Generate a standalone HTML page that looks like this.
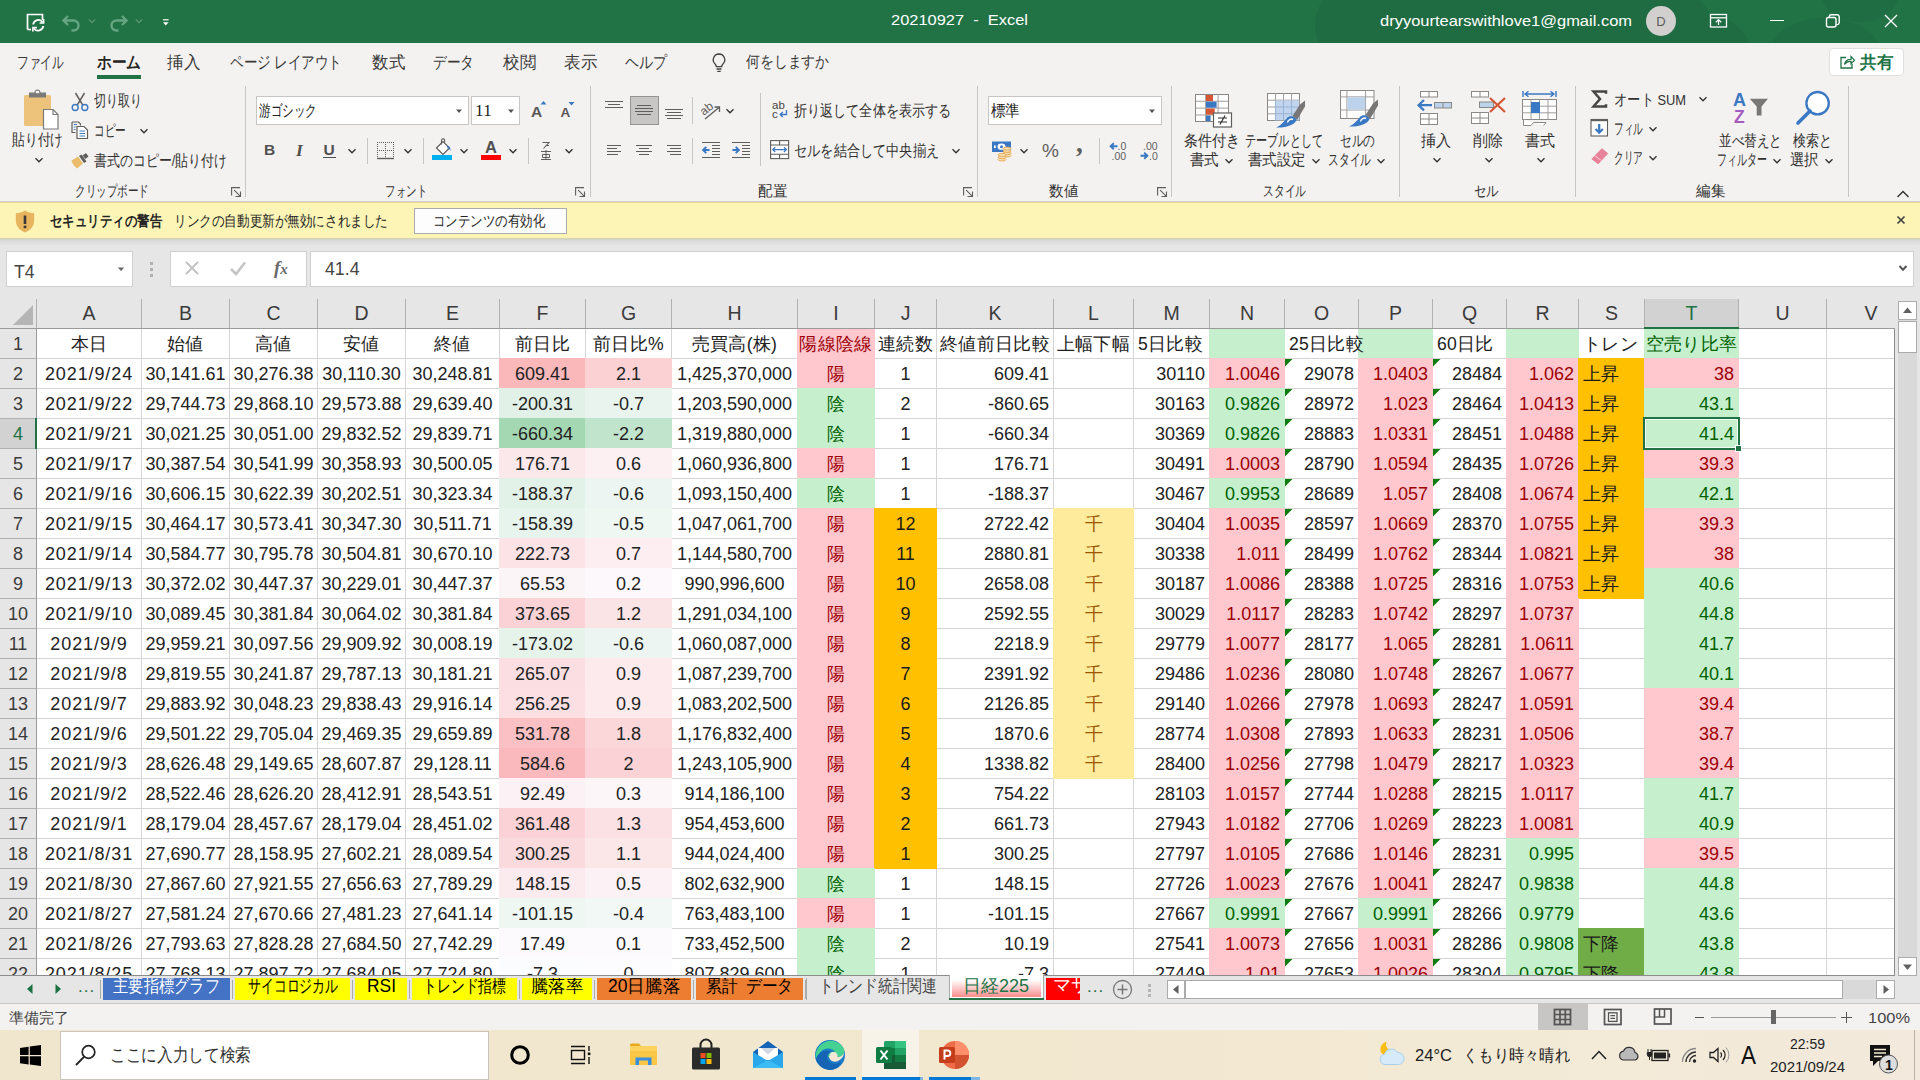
<!DOCTYPE html>
<html lang="ja"><head><meta charset="utf-8"><title>20210927 - Excel</title>
<style>
html,body{margin:0;padding:0;}
body{width:1920px;height:1080px;overflow:hidden;background:#e6e6e6;font-family:"Liberation Sans",sans-serif;}
#root{position:relative;width:1920px;height:1080px;overflow:hidden;}
#root div,#root svg{position:absolute;}
#root header,#root nav,#root section,#root main,#root footer{position:absolute;left:0;top:0;width:1920px;height:1080px;display:block;}
svg{overflow:visible;}
</style></head><body><div id="root">
<main id="sheet" aria-label="日経225">
<div id="grid" style="left:0;top:0;width:1920px;height:976px;overflow:hidden;clip-path:inset(299px 0 0 0);">
<div style="left:37px;top:329px;width:1857px;height:646px;background:#fff;"></div>
<div style="left:141px;top:329px;width:1px;height:646px;background:#d4d4d4;"></div>
<div style="left:229px;top:329px;width:1px;height:646px;background:#d4d4d4;"></div>
<div style="left:317px;top:329px;width:1px;height:646px;background:#d4d4d4;"></div>
<div style="left:405px;top:329px;width:1px;height:646px;background:#d4d4d4;"></div>
<div style="left:499px;top:329px;width:1px;height:646px;background:#d4d4d4;"></div>
<div style="left:585px;top:329px;width:1px;height:646px;background:#d4d4d4;"></div>
<div style="left:671px;top:329px;width:1px;height:646px;background:#d4d4d4;"></div>
<div style="left:797px;top:329px;width:1px;height:646px;background:#d4d4d4;"></div>
<div style="left:874px;top:329px;width:1px;height:646px;background:#d4d4d4;"></div>
<div style="left:936px;top:329px;width:1px;height:646px;background:#d4d4d4;"></div>
<div style="left:1053px;top:329px;width:1px;height:646px;background:#d4d4d4;"></div>
<div style="left:1133px;top:329px;width:1px;height:646px;background:#d4d4d4;"></div>
<div style="left:1209px;top:329px;width:1px;height:646px;background:#d4d4d4;"></div>
<div style="left:1284px;top:329px;width:1px;height:646px;background:#d4d4d4;"></div>
<div style="left:1358px;top:329px;width:1px;height:646px;background:#d4d4d4;"></div>
<div style="left:1432px;top:329px;width:1px;height:646px;background:#d4d4d4;"></div>
<div style="left:1506px;top:329px;width:1px;height:646px;background:#d4d4d4;"></div>
<div style="left:1578px;top:329px;width:1px;height:646px;background:#d4d4d4;"></div>
<div style="left:1644px;top:329px;width:1px;height:646px;background:#d4d4d4;"></div>
<div style="left:1738px;top:329px;width:1px;height:646px;background:#d4d4d4;"></div>
<div style="left:1826px;top:329px;width:1px;height:646px;background:#d4d4d4;"></div>
<div style="left:37px;top:358px;width:1857px;height:1px;background:#d4d4d4;"></div>
<div style="left:37px;top:388px;width:1857px;height:1px;background:#d4d4d4;"></div>
<div style="left:37px;top:418px;width:1857px;height:1px;background:#d4d4d4;"></div>
<div style="left:37px;top:448px;width:1857px;height:1px;background:#d4d4d4;"></div>
<div style="left:37px;top:478px;width:1857px;height:1px;background:#d4d4d4;"></div>
<div style="left:37px;top:508px;width:1857px;height:1px;background:#d4d4d4;"></div>
<div style="left:37px;top:538px;width:1857px;height:1px;background:#d4d4d4;"></div>
<div style="left:37px;top:568px;width:1857px;height:1px;background:#d4d4d4;"></div>
<div style="left:37px;top:598px;width:1857px;height:1px;background:#d4d4d4;"></div>
<div style="left:37px;top:628px;width:1857px;height:1px;background:#d4d4d4;"></div>
<div style="left:37px;top:658px;width:1857px;height:1px;background:#d4d4d4;"></div>
<div style="left:37px;top:688px;width:1857px;height:1px;background:#d4d4d4;"></div>
<div style="left:37px;top:718px;width:1857px;height:1px;background:#d4d4d4;"></div>
<div style="left:37px;top:748px;width:1857px;height:1px;background:#d4d4d4;"></div>
<div style="left:37px;top:778px;width:1857px;height:1px;background:#d4d4d4;"></div>
<div style="left:37px;top:808px;width:1857px;height:1px;background:#d4d4d4;"></div>
<div style="left:37px;top:838px;width:1857px;height:1px;background:#d4d4d4;"></div>
<div style="left:37px;top:868px;width:1857px;height:1px;background:#d4d4d4;"></div>
<div style="left:37px;top:898px;width:1857px;height:1px;background:#d4d4d4;"></div>
<div style="left:37px;top:928px;width:1857px;height:1px;background:#d4d4d4;"></div>
<div style="left:37px;top:958px;width:1857px;height:1px;background:#d4d4d4;"></div>
<div style="left:797px;top:328px;width:78px;height:31px;background:#ffc7ce;"></div>
<div style="left:1209px;top:328px;width:76px;height:31px;background:#c6efce;"></div>
<div style="left:1358px;top:328px;width:75px;height:31px;background:#c6efce;"></div>
<div style="left:1506px;top:328px;width:73px;height:31px;background:#c6efce;"></div>
<div style="left:1644px;top:328px;width:95px;height:31px;background:#c6efce;"></div>
<div style="left:499px;top:358px;width:87px;height:31px;background:#fab8ba;"></div>
<div style="left:585px;top:358px;width:87px;height:31px;background:#fbd1d4;"></div>
<div style="left:797px;top:358px;width:78px;height:31px;background:#ffc7ce;"></div>
<div style="left:1209px;top:358px;width:76px;height:31px;background:#ffc7ce;"></div>
<div style="left:1358px;top:358px;width:75px;height:31px;background:#ffc7ce;"></div>
<div style="left:1506px;top:358px;width:73px;height:31px;background:#ffc7ce;"></div>
<div style="left:1578px;top:358px;width:67px;height:31px;background:#ffc000;"></div>
<div style="left:1644px;top:358px;width:95px;height:31px;background:#ffc7ce;"></div>
<div style="left:499px;top:388px;width:87px;height:31px;background:#e1f1e8;"></div>
<div style="left:585px;top:388px;width:87px;height:31px;background:#e9f4ef;"></div>
<div style="left:797px;top:388px;width:78px;height:31px;background:#c6efce;"></div>
<div style="left:1209px;top:388px;width:76px;height:31px;background:#c6efce;"></div>
<div style="left:1358px;top:388px;width:75px;height:31px;background:#ffc7ce;"></div>
<div style="left:1506px;top:388px;width:73px;height:31px;background:#ffc7ce;"></div>
<div style="left:1578px;top:388px;width:67px;height:31px;background:#ffc000;"></div>
<div style="left:1644px;top:388px;width:95px;height:31px;background:#c6efce;"></div>
<div style="left:499px;top:418px;width:87px;height:31px;background:#a4d8b3;"></div>
<div style="left:585px;top:418px;width:87px;height:31px;background:#c1e4cc;"></div>
<div style="left:797px;top:418px;width:78px;height:31px;background:#c6efce;"></div>
<div style="left:1209px;top:418px;width:76px;height:31px;background:#c6efce;"></div>
<div style="left:1358px;top:418px;width:75px;height:31px;background:#ffc7ce;"></div>
<div style="left:1506px;top:418px;width:73px;height:31px;background:#ffc7ce;"></div>
<div style="left:1578px;top:418px;width:67px;height:31px;background:#ffc000;"></div>
<div style="left:1644px;top:418px;width:95px;height:31px;background:#c6efce;"></div>
<div style="left:499px;top:448px;width:87px;height:31px;background:#fbe8eb;"></div>
<div style="left:585px;top:448px;width:87px;height:31px;background:#fcf0f3;"></div>
<div style="left:797px;top:448px;width:78px;height:31px;background:#ffc7ce;"></div>
<div style="left:1209px;top:448px;width:76px;height:31px;background:#ffc7ce;"></div>
<div style="left:1358px;top:448px;width:75px;height:31px;background:#ffc7ce;"></div>
<div style="left:1506px;top:448px;width:73px;height:31px;background:#ffc7ce;"></div>
<div style="left:1578px;top:448px;width:67px;height:31px;background:#ffc000;"></div>
<div style="left:1644px;top:448px;width:95px;height:31px;background:#ffc7ce;"></div>
<div style="left:499px;top:478px;width:87px;height:31px;background:#e3f2e9;"></div>
<div style="left:585px;top:478px;width:87px;height:31px;background:#ecf5f1;"></div>
<div style="left:797px;top:478px;width:78px;height:31px;background:#c6efce;"></div>
<div style="left:1209px;top:478px;width:76px;height:31px;background:#c6efce;"></div>
<div style="left:1358px;top:478px;width:75px;height:31px;background:#ffc7ce;"></div>
<div style="left:1506px;top:478px;width:73px;height:31px;background:#ffc7ce;"></div>
<div style="left:1578px;top:478px;width:67px;height:31px;background:#ffc000;"></div>
<div style="left:1644px;top:478px;width:95px;height:31px;background:#c6efce;"></div>
<div style="left:499px;top:508px;width:87px;height:31px;background:#e7f3ed;"></div>
<div style="left:585px;top:508px;width:87px;height:31px;background:#eff7f3;"></div>
<div style="left:797px;top:508px;width:78px;height:31px;background:#ffc7ce;"></div>
<div style="left:874px;top:508px;width:63px;height:31px;background:#ffc000;"></div>
<div style="left:1053px;top:508px;width:81px;height:31px;background:#ffeb9c;"></div>
<div style="left:1209px;top:508px;width:76px;height:31px;background:#ffc7ce;"></div>
<div style="left:1358px;top:508px;width:75px;height:31px;background:#ffc7ce;"></div>
<div style="left:1506px;top:508px;width:73px;height:31px;background:#ffc7ce;"></div>
<div style="left:1578px;top:508px;width:67px;height:31px;background:#ffc000;"></div>
<div style="left:1644px;top:508px;width:95px;height:31px;background:#ffc7ce;"></div>
<div style="left:499px;top:538px;width:87px;height:31px;background:#fbe3e6;"></div>
<div style="left:585px;top:538px;width:87px;height:31px;background:#fceef1;"></div>
<div style="left:797px;top:538px;width:78px;height:31px;background:#ffc7ce;"></div>
<div style="left:874px;top:538px;width:63px;height:31px;background:#ffc000;"></div>
<div style="left:1053px;top:538px;width:81px;height:31px;background:#ffeb9c;"></div>
<div style="left:1209px;top:538px;width:76px;height:31px;background:#ffc7ce;"></div>
<div style="left:1358px;top:538px;width:75px;height:31px;background:#ffc7ce;"></div>
<div style="left:1506px;top:538px;width:73px;height:31px;background:#ffc7ce;"></div>
<div style="left:1578px;top:538px;width:67px;height:31px;background:#ffc000;"></div>
<div style="left:1644px;top:538px;width:95px;height:31px;background:#ffc7ce;"></div>
<div style="left:499px;top:568px;width:87px;height:31px;background:#fcf5f8;"></div>
<div style="left:585px;top:568px;width:87px;height:31px;background:#fcf8fb;"></div>
<div style="left:797px;top:568px;width:78px;height:31px;background:#ffc7ce;"></div>
<div style="left:874px;top:568px;width:63px;height:31px;background:#ffc000;"></div>
<div style="left:1053px;top:568px;width:81px;height:31px;background:#ffeb9c;"></div>
<div style="left:1209px;top:568px;width:76px;height:31px;background:#ffc7ce;"></div>
<div style="left:1358px;top:568px;width:75px;height:31px;background:#ffc7ce;"></div>
<div style="left:1506px;top:568px;width:73px;height:31px;background:#ffc7ce;"></div>
<div style="left:1578px;top:568px;width:67px;height:31px;background:#ffc000;"></div>
<div style="left:1644px;top:568px;width:95px;height:31px;background:#c6efce;"></div>
<div style="left:499px;top:598px;width:87px;height:31px;background:#fbd2d5;"></div>
<div style="left:585px;top:598px;width:87px;height:31px;background:#fbe4e6;"></div>
<div style="left:797px;top:598px;width:78px;height:31px;background:#ffc7ce;"></div>
<div style="left:874px;top:598px;width:63px;height:31px;background:#ffc000;"></div>
<div style="left:1053px;top:598px;width:81px;height:31px;background:#ffeb9c;"></div>
<div style="left:1209px;top:598px;width:76px;height:31px;background:#ffc7ce;"></div>
<div style="left:1358px;top:598px;width:75px;height:31px;background:#ffc7ce;"></div>
<div style="left:1506px;top:598px;width:73px;height:31px;background:#ffc7ce;"></div>
<div style="left:1644px;top:598px;width:95px;height:31px;background:#c6efce;"></div>
<div style="left:499px;top:628px;width:87px;height:31px;background:#e5f3eb;"></div>
<div style="left:585px;top:628px;width:87px;height:31px;background:#ecf5f1;"></div>
<div style="left:797px;top:628px;width:78px;height:31px;background:#ffc7ce;"></div>
<div style="left:874px;top:628px;width:63px;height:31px;background:#ffc000;"></div>
<div style="left:1053px;top:628px;width:81px;height:31px;background:#ffeb9c;"></div>
<div style="left:1209px;top:628px;width:76px;height:31px;background:#ffc7ce;"></div>
<div style="left:1358px;top:628px;width:75px;height:31px;background:#ffc7ce;"></div>
<div style="left:1506px;top:628px;width:73px;height:31px;background:#ffc7ce;"></div>
<div style="left:1644px;top:628px;width:95px;height:31px;background:#c6efce;"></div>
<div style="left:499px;top:658px;width:87px;height:31px;background:#fbdee1;"></div>
<div style="left:585px;top:658px;width:87px;height:31px;background:#fceaec;"></div>
<div style="left:797px;top:658px;width:78px;height:31px;background:#ffc7ce;"></div>
<div style="left:874px;top:658px;width:63px;height:31px;background:#ffc000;"></div>
<div style="left:1053px;top:658px;width:81px;height:31px;background:#ffeb9c;"></div>
<div style="left:1209px;top:658px;width:76px;height:31px;background:#ffc7ce;"></div>
<div style="left:1358px;top:658px;width:75px;height:31px;background:#ffc7ce;"></div>
<div style="left:1506px;top:658px;width:73px;height:31px;background:#ffc7ce;"></div>
<div style="left:1644px;top:658px;width:95px;height:31px;background:#c6efce;"></div>
<div style="left:499px;top:688px;width:87px;height:31px;background:#fbdfe2;"></div>
<div style="left:585px;top:688px;width:87px;height:31px;background:#fceaec;"></div>
<div style="left:797px;top:688px;width:78px;height:31px;background:#ffc7ce;"></div>
<div style="left:874px;top:688px;width:63px;height:31px;background:#ffc000;"></div>
<div style="left:1053px;top:688px;width:81px;height:31px;background:#ffeb9c;"></div>
<div style="left:1209px;top:688px;width:76px;height:31px;background:#ffc7ce;"></div>
<div style="left:1358px;top:688px;width:75px;height:31px;background:#ffc7ce;"></div>
<div style="left:1506px;top:688px;width:73px;height:31px;background:#ffc7ce;"></div>
<div style="left:1644px;top:688px;width:95px;height:31px;background:#ffc7ce;"></div>
<div style="left:499px;top:718px;width:87px;height:31px;background:#fac0c3;"></div>
<div style="left:585px;top:718px;width:87px;height:31px;background:#fbd7da;"></div>
<div style="left:797px;top:718px;width:78px;height:31px;background:#ffc7ce;"></div>
<div style="left:874px;top:718px;width:63px;height:31px;background:#ffc000;"></div>
<div style="left:1053px;top:718px;width:81px;height:31px;background:#ffeb9c;"></div>
<div style="left:1209px;top:718px;width:76px;height:31px;background:#ffc7ce;"></div>
<div style="left:1358px;top:718px;width:75px;height:31px;background:#ffc7ce;"></div>
<div style="left:1506px;top:718px;width:73px;height:31px;background:#ffc7ce;"></div>
<div style="left:1644px;top:718px;width:95px;height:31px;background:#ffc7ce;"></div>
<div style="left:499px;top:748px;width:87px;height:31px;background:#fababd;"></div>
<div style="left:585px;top:748px;width:87px;height:31px;background:#fbd3d6;"></div>
<div style="left:797px;top:748px;width:78px;height:31px;background:#ffc7ce;"></div>
<div style="left:874px;top:748px;width:63px;height:31px;background:#ffc000;"></div>
<div style="left:1053px;top:748px;width:81px;height:31px;background:#ffeb9c;"></div>
<div style="left:1209px;top:748px;width:76px;height:31px;background:#ffc7ce;"></div>
<div style="left:1358px;top:748px;width:75px;height:31px;background:#ffc7ce;"></div>
<div style="left:1506px;top:748px;width:73px;height:31px;background:#ffc7ce;"></div>
<div style="left:1644px;top:748px;width:95px;height:31px;background:#ffc7ce;"></div>
<div style="left:499px;top:778px;width:87px;height:31px;background:#fcf2f5;"></div>
<div style="left:585px;top:778px;width:87px;height:31px;background:#fcf6f9;"></div>
<div style="left:797px;top:778px;width:78px;height:31px;background:#ffc7ce;"></div>
<div style="left:874px;top:778px;width:63px;height:31px;background:#ffc000;"></div>
<div style="left:1209px;top:778px;width:76px;height:31px;background:#ffc7ce;"></div>
<div style="left:1358px;top:778px;width:75px;height:31px;background:#ffc7ce;"></div>
<div style="left:1506px;top:778px;width:73px;height:31px;background:#ffc7ce;"></div>
<div style="left:1644px;top:778px;width:95px;height:31px;background:#c6efce;"></div>
<div style="left:499px;top:808px;width:87px;height:31px;background:#fbd3d6;"></div>
<div style="left:585px;top:808px;width:87px;height:31px;background:#fbe1e4;"></div>
<div style="left:797px;top:808px;width:78px;height:31px;background:#ffc7ce;"></div>
<div style="left:874px;top:808px;width:63px;height:31px;background:#ffc000;"></div>
<div style="left:1209px;top:808px;width:76px;height:31px;background:#ffc7ce;"></div>
<div style="left:1358px;top:808px;width:75px;height:31px;background:#ffc7ce;"></div>
<div style="left:1506px;top:808px;width:73px;height:31px;background:#ffc7ce;"></div>
<div style="left:1644px;top:808px;width:95px;height:31px;background:#c6efce;"></div>
<div style="left:499px;top:838px;width:87px;height:31px;background:#fbdadd;"></div>
<div style="left:585px;top:838px;width:87px;height:31px;background:#fbe6e8;"></div>
<div style="left:797px;top:838px;width:78px;height:31px;background:#ffc7ce;"></div>
<div style="left:874px;top:838px;width:63px;height:31px;background:#ffc000;"></div>
<div style="left:1209px;top:838px;width:76px;height:31px;background:#ffc7ce;"></div>
<div style="left:1358px;top:838px;width:75px;height:31px;background:#ffc7ce;"></div>
<div style="left:1506px;top:838px;width:73px;height:31px;background:#c6efce;"></div>
<div style="left:1644px;top:838px;width:95px;height:31px;background:#ffc7ce;"></div>
<div style="left:499px;top:868px;width:87px;height:31px;background:#fcebee;"></div>
<div style="left:585px;top:868px;width:87px;height:31px;background:#fcf2f5;"></div>
<div style="left:797px;top:868px;width:78px;height:31px;background:#c6efce;"></div>
<div style="left:1209px;top:868px;width:76px;height:31px;background:#ffc7ce;"></div>
<div style="left:1358px;top:868px;width:75px;height:31px;background:#ffc7ce;"></div>
<div style="left:1506px;top:868px;width:73px;height:31px;background:#c6efce;"></div>
<div style="left:1644px;top:868px;width:95px;height:31px;background:#c6efce;"></div>
<div style="left:499px;top:898px;width:87px;height:31px;background:#eff7f3;"></div>
<div style="left:585px;top:898px;width:87px;height:31px;background:#f1f8f6;"></div>
<div style="left:797px;top:898px;width:78px;height:31px;background:#ffc7ce;"></div>
<div style="left:1209px;top:898px;width:76px;height:31px;background:#c6efce;"></div>
<div style="left:1358px;top:898px;width:75px;height:31px;background:#c6efce;"></div>
<div style="left:1506px;top:898px;width:73px;height:31px;background:#c6efce;"></div>
<div style="left:1644px;top:898px;width:95px;height:31px;background:#c6efce;"></div>
<div style="left:499px;top:928px;width:87px;height:31px;background:#fcfafd;"></div>
<div style="left:585px;top:928px;width:87px;height:31px;background:#fcfafd;"></div>
<div style="left:797px;top:928px;width:78px;height:31px;background:#c6efce;"></div>
<div style="left:1209px;top:928px;width:76px;height:31px;background:#ffc7ce;"></div>
<div style="left:1358px;top:928px;width:75px;height:31px;background:#ffc7ce;"></div>
<div style="left:1506px;top:928px;width:73px;height:31px;background:#c6efce;"></div>
<div style="left:1578px;top:928px;width:67px;height:31px;background:#70ad47;"></div>
<div style="left:1644px;top:928px;width:95px;height:31px;background:#c6efce;"></div>
<div style="left:499px;top:958px;width:87px;height:31px;background:#fbfcfe;"></div>
<div style="left:585px;top:958px;width:87px;height:31px;background:#fcfcff;"></div>
<div style="left:797px;top:958px;width:78px;height:31px;background:#c6efce;"></div>
<div style="left:1209px;top:958px;width:76px;height:31px;background:#ffc7ce;"></div>
<div style="left:1358px;top:958px;width:75px;height:31px;background:#ffc7ce;"></div>
<div style="left:1506px;top:958px;width:73px;height:31px;background:#c6efce;"></div>
<div style="left:1578px;top:958px;width:67px;height:31px;background:#70ad47;"></div>
<div style="left:1644px;top:958px;width:95px;height:31px;background:#c6efce;"></div>
<svg style="left:1285px;top:359px;" width="8" height="8" viewBox="0 0 8 8"><path d="M0 0H7.5L0 7.5Z" fill="#107c10"/></svg>
<svg style="left:1433px;top:359px;" width="8" height="8" viewBox="0 0 8 8"><path d="M0 0H7.5L0 7.5Z" fill="#107c10"/></svg>
<svg style="left:1285px;top:389px;" width="8" height="8" viewBox="0 0 8 8"><path d="M0 0H7.5L0 7.5Z" fill="#107c10"/></svg>
<svg style="left:1433px;top:389px;" width="8" height="8" viewBox="0 0 8 8"><path d="M0 0H7.5L0 7.5Z" fill="#107c10"/></svg>
<svg style="left:1285px;top:419px;" width="8" height="8" viewBox="0 0 8 8"><path d="M0 0H7.5L0 7.5Z" fill="#107c10"/></svg>
<svg style="left:1433px;top:419px;" width="8" height="8" viewBox="0 0 8 8"><path d="M0 0H7.5L0 7.5Z" fill="#107c10"/></svg>
<svg style="left:1285px;top:449px;" width="8" height="8" viewBox="0 0 8 8"><path d="M0 0H7.5L0 7.5Z" fill="#107c10"/></svg>
<svg style="left:1433px;top:449px;" width="8" height="8" viewBox="0 0 8 8"><path d="M0 0H7.5L0 7.5Z" fill="#107c10"/></svg>
<svg style="left:1285px;top:479px;" width="8" height="8" viewBox="0 0 8 8"><path d="M0 0H7.5L0 7.5Z" fill="#107c10"/></svg>
<svg style="left:1433px;top:479px;" width="8" height="8" viewBox="0 0 8 8"><path d="M0 0H7.5L0 7.5Z" fill="#107c10"/></svg>
<svg style="left:1285px;top:509px;" width="8" height="8" viewBox="0 0 8 8"><path d="M0 0H7.5L0 7.5Z" fill="#107c10"/></svg>
<svg style="left:1433px;top:509px;" width="8" height="8" viewBox="0 0 8 8"><path d="M0 0H7.5L0 7.5Z" fill="#107c10"/></svg>
<svg style="left:1285px;top:539px;" width="8" height="8" viewBox="0 0 8 8"><path d="M0 0H7.5L0 7.5Z" fill="#107c10"/></svg>
<svg style="left:1433px;top:539px;" width="8" height="8" viewBox="0 0 8 8"><path d="M0 0H7.5L0 7.5Z" fill="#107c10"/></svg>
<svg style="left:1285px;top:569px;" width="8" height="8" viewBox="0 0 8 8"><path d="M0 0H7.5L0 7.5Z" fill="#107c10"/></svg>
<svg style="left:1433px;top:569px;" width="8" height="8" viewBox="0 0 8 8"><path d="M0 0H7.5L0 7.5Z" fill="#107c10"/></svg>
<svg style="left:1285px;top:599px;" width="8" height="8" viewBox="0 0 8 8"><path d="M0 0H7.5L0 7.5Z" fill="#107c10"/></svg>
<svg style="left:1433px;top:599px;" width="8" height="8" viewBox="0 0 8 8"><path d="M0 0H7.5L0 7.5Z" fill="#107c10"/></svg>
<svg style="left:1285px;top:629px;" width="8" height="8" viewBox="0 0 8 8"><path d="M0 0H7.5L0 7.5Z" fill="#107c10"/></svg>
<svg style="left:1433px;top:629px;" width="8" height="8" viewBox="0 0 8 8"><path d="M0 0H7.5L0 7.5Z" fill="#107c10"/></svg>
<svg style="left:1285px;top:659px;" width="8" height="8" viewBox="0 0 8 8"><path d="M0 0H7.5L0 7.5Z" fill="#107c10"/></svg>
<svg style="left:1433px;top:659px;" width="8" height="8" viewBox="0 0 8 8"><path d="M0 0H7.5L0 7.5Z" fill="#107c10"/></svg>
<svg style="left:1285px;top:689px;" width="8" height="8" viewBox="0 0 8 8"><path d="M0 0H7.5L0 7.5Z" fill="#107c10"/></svg>
<svg style="left:1433px;top:689px;" width="8" height="8" viewBox="0 0 8 8"><path d="M0 0H7.5L0 7.5Z" fill="#107c10"/></svg>
<svg style="left:1285px;top:719px;" width="8" height="8" viewBox="0 0 8 8"><path d="M0 0H7.5L0 7.5Z" fill="#107c10"/></svg>
<svg style="left:1433px;top:719px;" width="8" height="8" viewBox="0 0 8 8"><path d="M0 0H7.5L0 7.5Z" fill="#107c10"/></svg>
<svg style="left:1285px;top:749px;" width="8" height="8" viewBox="0 0 8 8"><path d="M0 0H7.5L0 7.5Z" fill="#107c10"/></svg>
<svg style="left:1433px;top:749px;" width="8" height="8" viewBox="0 0 8 8"><path d="M0 0H7.5L0 7.5Z" fill="#107c10"/></svg>
<svg style="left:1285px;top:779px;" width="8" height="8" viewBox="0 0 8 8"><path d="M0 0H7.5L0 7.5Z" fill="#107c10"/></svg>
<svg style="left:1433px;top:779px;" width="8" height="8" viewBox="0 0 8 8"><path d="M0 0H7.5L0 7.5Z" fill="#107c10"/></svg>
<svg style="left:1285px;top:809px;" width="8" height="8" viewBox="0 0 8 8"><path d="M0 0H7.5L0 7.5Z" fill="#107c10"/></svg>
<svg style="left:1433px;top:809px;" width="8" height="8" viewBox="0 0 8 8"><path d="M0 0H7.5L0 7.5Z" fill="#107c10"/></svg>
<svg style="left:1285px;top:839px;" width="8" height="8" viewBox="0 0 8 8"><path d="M0 0H7.5L0 7.5Z" fill="#107c10"/></svg>
<svg style="left:1433px;top:839px;" width="8" height="8" viewBox="0 0 8 8"><path d="M0 0H7.5L0 7.5Z" fill="#107c10"/></svg>
<svg style="left:1285px;top:869px;" width="8" height="8" viewBox="0 0 8 8"><path d="M0 0H7.5L0 7.5Z" fill="#107c10"/></svg>
<svg style="left:1433px;top:869px;" width="8" height="8" viewBox="0 0 8 8"><path d="M0 0H7.5L0 7.5Z" fill="#107c10"/></svg>
<svg style="left:1285px;top:899px;" width="8" height="8" viewBox="0 0 8 8"><path d="M0 0H7.5L0 7.5Z" fill="#107c10"/></svg>
<svg style="left:1433px;top:899px;" width="8" height="8" viewBox="0 0 8 8"><path d="M0 0H7.5L0 7.5Z" fill="#107c10"/></svg>
<svg style="left:1285px;top:929px;" width="8" height="8" viewBox="0 0 8 8"><path d="M0 0H7.5L0 7.5Z" fill="#107c10"/></svg>
<svg style="left:1433px;top:929px;" width="8" height="8" viewBox="0 0 8 8"><path d="M0 0H7.5L0 7.5Z" fill="#107c10"/></svg>
<svg style="left:1285px;top:959px;" width="8" height="8" viewBox="0 0 8 8"><path d="M0 0H7.5L0 7.5Z" fill="#107c10"/></svg>
<svg style="left:1433px;top:959px;" width="8" height="8" viewBox="0 0 8 8"><path d="M0 0H7.5L0 7.5Z" fill="#107c10"/></svg>
<div style="left:37px;top:329px;width:104px;height:30px;line-height:30px;box-sizing:border-box;font-size:17.6px;color:#222;text-align:center;white-space:nowrap;overflow:hidden;letter-spacing:0.3px;">本日</div>
<div style="left:142px;top:329px;width:87px;height:30px;line-height:30px;box-sizing:border-box;font-size:17.6px;color:#222;text-align:center;white-space:nowrap;overflow:hidden;letter-spacing:0.3px;">始値</div>
<div style="left:230px;top:329px;width:87px;height:30px;line-height:30px;box-sizing:border-box;font-size:17.6px;color:#222;text-align:center;white-space:nowrap;overflow:hidden;letter-spacing:0.3px;">高値</div>
<div style="left:318px;top:329px;width:87px;height:30px;line-height:30px;box-sizing:border-box;font-size:17.6px;color:#222;text-align:center;white-space:nowrap;overflow:hidden;letter-spacing:0.3px;">安値</div>
<div style="left:406px;top:329px;width:93px;height:30px;line-height:30px;box-sizing:border-box;font-size:17.6px;color:#222;text-align:center;white-space:nowrap;overflow:hidden;letter-spacing:0.3px;">終値</div>
<div style="left:500px;top:329px;width:85px;height:30px;line-height:30px;box-sizing:border-box;font-size:17.6px;color:#222;text-align:center;white-space:nowrap;overflow:hidden;letter-spacing:0.3px;">前日比</div>
<div style="left:586px;top:329px;width:85px;height:30px;line-height:30px;box-sizing:border-box;font-size:17.6px;color:#222;text-align:center;white-space:nowrap;overflow:hidden;letter-spacing:0.3px;">前日比%</div>
<div style="left:672px;top:329px;width:125px;height:30px;line-height:30px;box-sizing:border-box;font-size:17.6px;color:#222;text-align:center;white-space:nowrap;overflow:hidden;letter-spacing:0.3px;">売買高(株)</div>
<div style="left:798px;top:329px;width:76px;height:30px;line-height:30px;box-sizing:border-box;font-size:17.6px;color:#9c0006;text-align:center;white-space:nowrap;overflow:hidden;letter-spacing:0.3px;">陽線陰線</div>
<div style="left:875px;top:329px;width:61px;height:30px;line-height:30px;box-sizing:border-box;font-size:17.6px;color:#222;text-align:center;white-space:nowrap;overflow:hidden;letter-spacing:0.3px;">連続数</div>
<div style="left:937px;top:329px;width:116px;height:30px;line-height:30px;box-sizing:border-box;font-size:17.6px;color:#222;text-align:center;white-space:nowrap;overflow:hidden;letter-spacing:0.3px;">終値前日比較</div>
<div style="left:1054px;top:329px;width:79px;height:30px;line-height:30px;box-sizing:border-box;font-size:17.6px;color:#222;text-align:center;white-space:nowrap;overflow:hidden;letter-spacing:0.3px;">上幅下幅</div>
<div style="left:1134px;top:329px;width:75px;height:30px;line-height:30px;box-sizing:border-box;font-size:17.6px;color:#222;text-align:left;white-space:nowrap;padding-left:4px;overflow:hidden;letter-spacing:0.3px;">5日比較</div>
<div style="left:1285px;top:329px;width:73px;height:30px;line-height:30px;box-sizing:border-box;font-size:17.6px;color:#222;text-align:left;white-space:nowrap;padding-left:4px;overflow:visible;letter-spacing:0.3px;">25日比較</div>
<div style="left:1433px;top:329px;width:73px;height:30px;line-height:30px;box-sizing:border-box;font-size:17.6px;color:#222;text-align:left;white-space:nowrap;padding-left:4px;overflow:hidden;letter-spacing:0.3px;">60日比</div>
<div style="left:1579px;top:329px;width:65px;height:30px;line-height:30px;box-sizing:border-box;font-size:17.6px;color:#222;text-align:left;white-space:nowrap;padding-left:4px;overflow:hidden;letter-spacing:0.3px;">トレンド</div>
<div style="left:1645px;top:329px;width:93px;height:30px;line-height:30px;box-sizing:border-box;font-size:17.6px;color:#006100;text-align:center;white-space:nowrap;overflow:hidden;letter-spacing:0.3px;">空売り比率</div>
<div style="left:37px;top:359px;width:104px;height:30px;line-height:30px;box-sizing:border-box;font-size:18px;color:#222;text-align:center;white-space:nowrap;overflow:hidden;letter-spacing:0.9px;">2021/9/24</div>
<div style="left:142px;top:359px;width:87px;height:30px;line-height:30px;box-sizing:border-box;font-size:18px;color:#222;text-align:center;white-space:nowrap;overflow:hidden;">30,141.61</div>
<div style="left:230px;top:359px;width:87px;height:30px;line-height:30px;box-sizing:border-box;font-size:18px;color:#222;text-align:center;white-space:nowrap;overflow:hidden;">30,276.38</div>
<div style="left:318px;top:359px;width:87px;height:30px;line-height:30px;box-sizing:border-box;font-size:18px;color:#222;text-align:center;white-space:nowrap;overflow:hidden;">30,110.30</div>
<div style="left:406px;top:359px;width:93px;height:30px;line-height:30px;box-sizing:border-box;font-size:18px;color:#222;text-align:center;white-space:nowrap;overflow:hidden;">30,248.81</div>
<div style="left:500px;top:359px;width:85px;height:30px;line-height:30px;box-sizing:border-box;font-size:18px;color:#222;text-align:center;white-space:nowrap;overflow:hidden;">609.41</div>
<div style="left:586px;top:359px;width:85px;height:30px;line-height:30px;box-sizing:border-box;font-size:18px;color:#222;text-align:center;white-space:nowrap;overflow:hidden;">2.1</div>
<div style="left:672px;top:359px;width:125px;height:30px;line-height:30px;box-sizing:border-box;font-size:18px;color:#222;text-align:center;white-space:nowrap;overflow:hidden;">1,425,370,000</div>
<div style="left:798px;top:359px;width:76px;height:30px;line-height:30px;box-sizing:border-box;font-size:17.6px;color:#9c0006;text-align:center;white-space:nowrap;overflow:hidden;">陽</div>
<div style="left:875px;top:359px;width:61px;height:30px;line-height:30px;box-sizing:border-box;font-size:18px;color:#222;text-align:center;white-space:nowrap;overflow:hidden;">1</div>
<div style="left:937px;top:359px;width:116px;height:30px;line-height:30px;box-sizing:border-box;font-size:18px;color:#222;text-align:right;white-space:nowrap;padding-right:4px;overflow:hidden;">609.41</div>
<div style="left:1134px;top:359px;width:75px;height:30px;line-height:30px;box-sizing:border-box;font-size:18px;color:#222;text-align:right;white-space:nowrap;padding-right:4px;overflow:hidden;">30110</div>
<div style="left:1210px;top:359px;width:74px;height:30px;line-height:30px;box-sizing:border-box;font-size:18px;color:#9c0006;text-align:right;white-space:nowrap;padding-right:4px;overflow:hidden;">1.0046</div>
<div style="left:1285px;top:359px;width:73px;height:30px;line-height:30px;box-sizing:border-box;font-size:18px;color:#222;text-align:right;white-space:nowrap;padding-right:4px;overflow:hidden;">29078</div>
<div style="left:1359px;top:359px;width:73px;height:30px;line-height:30px;box-sizing:border-box;font-size:18px;color:#9c0006;text-align:right;white-space:nowrap;padding-right:4px;overflow:hidden;">1.0403</div>
<div style="left:1433px;top:359px;width:73px;height:30px;line-height:30px;box-sizing:border-box;font-size:18px;color:#222;text-align:right;white-space:nowrap;padding-right:4px;overflow:hidden;">28484</div>
<div style="left:1507px;top:359px;width:71px;height:30px;line-height:30px;box-sizing:border-box;font-size:18px;color:#9c0006;text-align:right;white-space:nowrap;padding-right:4px;overflow:hidden;">1.062</div>
<div style="left:1579px;top:359px;width:65px;height:30px;line-height:30px;box-sizing:border-box;font-size:17.6px;color:#1a1a1a;text-align:left;white-space:nowrap;padding-left:4px;overflow:hidden;">上昇</div>
<div style="left:1645px;top:359px;width:93px;height:30px;line-height:30px;box-sizing:border-box;font-size:18px;color:#9c0006;text-align:right;white-space:nowrap;padding-right:4px;overflow:hidden;">38</div>
<div style="left:37px;top:389px;width:104px;height:30px;line-height:30px;box-sizing:border-box;font-size:18px;color:#222;text-align:center;white-space:nowrap;overflow:hidden;letter-spacing:0.9px;">2021/9/22</div>
<div style="left:142px;top:389px;width:87px;height:30px;line-height:30px;box-sizing:border-box;font-size:18px;color:#222;text-align:center;white-space:nowrap;overflow:hidden;">29,744.73</div>
<div style="left:230px;top:389px;width:87px;height:30px;line-height:30px;box-sizing:border-box;font-size:18px;color:#222;text-align:center;white-space:nowrap;overflow:hidden;">29,868.10</div>
<div style="left:318px;top:389px;width:87px;height:30px;line-height:30px;box-sizing:border-box;font-size:18px;color:#222;text-align:center;white-space:nowrap;overflow:hidden;">29,573.88</div>
<div style="left:406px;top:389px;width:93px;height:30px;line-height:30px;box-sizing:border-box;font-size:18px;color:#222;text-align:center;white-space:nowrap;overflow:hidden;">29,639.40</div>
<div style="left:500px;top:389px;width:85px;height:30px;line-height:30px;box-sizing:border-box;font-size:18px;color:#222;text-align:center;white-space:nowrap;overflow:hidden;">-200.31</div>
<div style="left:586px;top:389px;width:85px;height:30px;line-height:30px;box-sizing:border-box;font-size:18px;color:#222;text-align:center;white-space:nowrap;overflow:hidden;">-0.7</div>
<div style="left:672px;top:389px;width:125px;height:30px;line-height:30px;box-sizing:border-box;font-size:18px;color:#222;text-align:center;white-space:nowrap;overflow:hidden;">1,203,590,000</div>
<div style="left:798px;top:389px;width:76px;height:30px;line-height:30px;box-sizing:border-box;font-size:17.6px;color:#006100;text-align:center;white-space:nowrap;overflow:hidden;">陰</div>
<div style="left:875px;top:389px;width:61px;height:30px;line-height:30px;box-sizing:border-box;font-size:18px;color:#222;text-align:center;white-space:nowrap;overflow:hidden;">2</div>
<div style="left:937px;top:389px;width:116px;height:30px;line-height:30px;box-sizing:border-box;font-size:18px;color:#222;text-align:right;white-space:nowrap;padding-right:4px;overflow:hidden;">-860.65</div>
<div style="left:1134px;top:389px;width:75px;height:30px;line-height:30px;box-sizing:border-box;font-size:18px;color:#222;text-align:right;white-space:nowrap;padding-right:4px;overflow:hidden;">30163</div>
<div style="left:1210px;top:389px;width:74px;height:30px;line-height:30px;box-sizing:border-box;font-size:18px;color:#006100;text-align:right;white-space:nowrap;padding-right:4px;overflow:hidden;">0.9826</div>
<div style="left:1285px;top:389px;width:73px;height:30px;line-height:30px;box-sizing:border-box;font-size:18px;color:#222;text-align:right;white-space:nowrap;padding-right:4px;overflow:hidden;">28972</div>
<div style="left:1359px;top:389px;width:73px;height:30px;line-height:30px;box-sizing:border-box;font-size:18px;color:#9c0006;text-align:right;white-space:nowrap;padding-right:4px;overflow:hidden;">1.023</div>
<div style="left:1433px;top:389px;width:73px;height:30px;line-height:30px;box-sizing:border-box;font-size:18px;color:#222;text-align:right;white-space:nowrap;padding-right:4px;overflow:hidden;">28464</div>
<div style="left:1507px;top:389px;width:71px;height:30px;line-height:30px;box-sizing:border-box;font-size:18px;color:#9c0006;text-align:right;white-space:nowrap;padding-right:4px;overflow:hidden;">1.0413</div>
<div style="left:1579px;top:389px;width:65px;height:30px;line-height:30px;box-sizing:border-box;font-size:17.6px;color:#1a1a1a;text-align:left;white-space:nowrap;padding-left:4px;overflow:hidden;">上昇</div>
<div style="left:1645px;top:389px;width:93px;height:30px;line-height:30px;box-sizing:border-box;font-size:18px;color:#006100;text-align:right;white-space:nowrap;padding-right:4px;overflow:hidden;">43.1</div>
<div style="left:37px;top:419px;width:104px;height:30px;line-height:30px;box-sizing:border-box;font-size:18px;color:#222;text-align:center;white-space:nowrap;overflow:hidden;letter-spacing:0.9px;">2021/9/21</div>
<div style="left:142px;top:419px;width:87px;height:30px;line-height:30px;box-sizing:border-box;font-size:18px;color:#222;text-align:center;white-space:nowrap;overflow:hidden;">30,021.25</div>
<div style="left:230px;top:419px;width:87px;height:30px;line-height:30px;box-sizing:border-box;font-size:18px;color:#222;text-align:center;white-space:nowrap;overflow:hidden;">30,051.00</div>
<div style="left:318px;top:419px;width:87px;height:30px;line-height:30px;box-sizing:border-box;font-size:18px;color:#222;text-align:center;white-space:nowrap;overflow:hidden;">29,832.52</div>
<div style="left:406px;top:419px;width:93px;height:30px;line-height:30px;box-sizing:border-box;font-size:18px;color:#222;text-align:center;white-space:nowrap;overflow:hidden;">29,839.71</div>
<div style="left:500px;top:419px;width:85px;height:30px;line-height:30px;box-sizing:border-box;font-size:18px;color:#222;text-align:center;white-space:nowrap;overflow:hidden;">-660.34</div>
<div style="left:586px;top:419px;width:85px;height:30px;line-height:30px;box-sizing:border-box;font-size:18px;color:#222;text-align:center;white-space:nowrap;overflow:hidden;">-2.2</div>
<div style="left:672px;top:419px;width:125px;height:30px;line-height:30px;box-sizing:border-box;font-size:18px;color:#222;text-align:center;white-space:nowrap;overflow:hidden;">1,319,880,000</div>
<div style="left:798px;top:419px;width:76px;height:30px;line-height:30px;box-sizing:border-box;font-size:17.6px;color:#006100;text-align:center;white-space:nowrap;overflow:hidden;">陰</div>
<div style="left:875px;top:419px;width:61px;height:30px;line-height:30px;box-sizing:border-box;font-size:18px;color:#222;text-align:center;white-space:nowrap;overflow:hidden;">1</div>
<div style="left:937px;top:419px;width:116px;height:30px;line-height:30px;box-sizing:border-box;font-size:18px;color:#222;text-align:right;white-space:nowrap;padding-right:4px;overflow:hidden;">-660.34</div>
<div style="left:1134px;top:419px;width:75px;height:30px;line-height:30px;box-sizing:border-box;font-size:18px;color:#222;text-align:right;white-space:nowrap;padding-right:4px;overflow:hidden;">30369</div>
<div style="left:1210px;top:419px;width:74px;height:30px;line-height:30px;box-sizing:border-box;font-size:18px;color:#006100;text-align:right;white-space:nowrap;padding-right:4px;overflow:hidden;">0.9826</div>
<div style="left:1285px;top:419px;width:73px;height:30px;line-height:30px;box-sizing:border-box;font-size:18px;color:#222;text-align:right;white-space:nowrap;padding-right:4px;overflow:hidden;">28883</div>
<div style="left:1359px;top:419px;width:73px;height:30px;line-height:30px;box-sizing:border-box;font-size:18px;color:#9c0006;text-align:right;white-space:nowrap;padding-right:4px;overflow:hidden;">1.0331</div>
<div style="left:1433px;top:419px;width:73px;height:30px;line-height:30px;box-sizing:border-box;font-size:18px;color:#222;text-align:right;white-space:nowrap;padding-right:4px;overflow:hidden;">28451</div>
<div style="left:1507px;top:419px;width:71px;height:30px;line-height:30px;box-sizing:border-box;font-size:18px;color:#9c0006;text-align:right;white-space:nowrap;padding-right:4px;overflow:hidden;">1.0488</div>
<div style="left:1579px;top:419px;width:65px;height:30px;line-height:30px;box-sizing:border-box;font-size:17.6px;color:#1a1a1a;text-align:left;white-space:nowrap;padding-left:4px;overflow:hidden;">上昇</div>
<div style="left:1645px;top:419px;width:93px;height:30px;line-height:30px;box-sizing:border-box;font-size:18px;color:#006100;text-align:right;white-space:nowrap;padding-right:4px;overflow:hidden;">41.4</div>
<div style="left:37px;top:449px;width:104px;height:30px;line-height:30px;box-sizing:border-box;font-size:18px;color:#222;text-align:center;white-space:nowrap;overflow:hidden;letter-spacing:0.9px;">2021/9/17</div>
<div style="left:142px;top:449px;width:87px;height:30px;line-height:30px;box-sizing:border-box;font-size:18px;color:#222;text-align:center;white-space:nowrap;overflow:hidden;">30,387.54</div>
<div style="left:230px;top:449px;width:87px;height:30px;line-height:30px;box-sizing:border-box;font-size:18px;color:#222;text-align:center;white-space:nowrap;overflow:hidden;">30,541.99</div>
<div style="left:318px;top:449px;width:87px;height:30px;line-height:30px;box-sizing:border-box;font-size:18px;color:#222;text-align:center;white-space:nowrap;overflow:hidden;">30,358.93</div>
<div style="left:406px;top:449px;width:93px;height:30px;line-height:30px;box-sizing:border-box;font-size:18px;color:#222;text-align:center;white-space:nowrap;overflow:hidden;">30,500.05</div>
<div style="left:500px;top:449px;width:85px;height:30px;line-height:30px;box-sizing:border-box;font-size:18px;color:#222;text-align:center;white-space:nowrap;overflow:hidden;">176.71</div>
<div style="left:586px;top:449px;width:85px;height:30px;line-height:30px;box-sizing:border-box;font-size:18px;color:#222;text-align:center;white-space:nowrap;overflow:hidden;">0.6</div>
<div style="left:672px;top:449px;width:125px;height:30px;line-height:30px;box-sizing:border-box;font-size:18px;color:#222;text-align:center;white-space:nowrap;overflow:hidden;">1,060,936,800</div>
<div style="left:798px;top:449px;width:76px;height:30px;line-height:30px;box-sizing:border-box;font-size:17.6px;color:#9c0006;text-align:center;white-space:nowrap;overflow:hidden;">陽</div>
<div style="left:875px;top:449px;width:61px;height:30px;line-height:30px;box-sizing:border-box;font-size:18px;color:#222;text-align:center;white-space:nowrap;overflow:hidden;">1</div>
<div style="left:937px;top:449px;width:116px;height:30px;line-height:30px;box-sizing:border-box;font-size:18px;color:#222;text-align:right;white-space:nowrap;padding-right:4px;overflow:hidden;">176.71</div>
<div style="left:1134px;top:449px;width:75px;height:30px;line-height:30px;box-sizing:border-box;font-size:18px;color:#222;text-align:right;white-space:nowrap;padding-right:4px;overflow:hidden;">30491</div>
<div style="left:1210px;top:449px;width:74px;height:30px;line-height:30px;box-sizing:border-box;font-size:18px;color:#9c0006;text-align:right;white-space:nowrap;padding-right:4px;overflow:hidden;">1.0003</div>
<div style="left:1285px;top:449px;width:73px;height:30px;line-height:30px;box-sizing:border-box;font-size:18px;color:#222;text-align:right;white-space:nowrap;padding-right:4px;overflow:hidden;">28790</div>
<div style="left:1359px;top:449px;width:73px;height:30px;line-height:30px;box-sizing:border-box;font-size:18px;color:#9c0006;text-align:right;white-space:nowrap;padding-right:4px;overflow:hidden;">1.0594</div>
<div style="left:1433px;top:449px;width:73px;height:30px;line-height:30px;box-sizing:border-box;font-size:18px;color:#222;text-align:right;white-space:nowrap;padding-right:4px;overflow:hidden;">28435</div>
<div style="left:1507px;top:449px;width:71px;height:30px;line-height:30px;box-sizing:border-box;font-size:18px;color:#9c0006;text-align:right;white-space:nowrap;padding-right:4px;overflow:hidden;">1.0726</div>
<div style="left:1579px;top:449px;width:65px;height:30px;line-height:30px;box-sizing:border-box;font-size:17.6px;color:#1a1a1a;text-align:left;white-space:nowrap;padding-left:4px;overflow:hidden;">上昇</div>
<div style="left:1645px;top:449px;width:93px;height:30px;line-height:30px;box-sizing:border-box;font-size:18px;color:#9c0006;text-align:right;white-space:nowrap;padding-right:4px;overflow:hidden;">39.3</div>
<div style="left:37px;top:479px;width:104px;height:30px;line-height:30px;box-sizing:border-box;font-size:18px;color:#222;text-align:center;white-space:nowrap;overflow:hidden;letter-spacing:0.9px;">2021/9/16</div>
<div style="left:142px;top:479px;width:87px;height:30px;line-height:30px;box-sizing:border-box;font-size:18px;color:#222;text-align:center;white-space:nowrap;overflow:hidden;">30,606.15</div>
<div style="left:230px;top:479px;width:87px;height:30px;line-height:30px;box-sizing:border-box;font-size:18px;color:#222;text-align:center;white-space:nowrap;overflow:hidden;">30,622.39</div>
<div style="left:318px;top:479px;width:87px;height:30px;line-height:30px;box-sizing:border-box;font-size:18px;color:#222;text-align:center;white-space:nowrap;overflow:hidden;">30,202.51</div>
<div style="left:406px;top:479px;width:93px;height:30px;line-height:30px;box-sizing:border-box;font-size:18px;color:#222;text-align:center;white-space:nowrap;overflow:hidden;">30,323.34</div>
<div style="left:500px;top:479px;width:85px;height:30px;line-height:30px;box-sizing:border-box;font-size:18px;color:#222;text-align:center;white-space:nowrap;overflow:hidden;">-188.37</div>
<div style="left:586px;top:479px;width:85px;height:30px;line-height:30px;box-sizing:border-box;font-size:18px;color:#222;text-align:center;white-space:nowrap;overflow:hidden;">-0.6</div>
<div style="left:672px;top:479px;width:125px;height:30px;line-height:30px;box-sizing:border-box;font-size:18px;color:#222;text-align:center;white-space:nowrap;overflow:hidden;">1,093,150,400</div>
<div style="left:798px;top:479px;width:76px;height:30px;line-height:30px;box-sizing:border-box;font-size:17.6px;color:#006100;text-align:center;white-space:nowrap;overflow:hidden;">陰</div>
<div style="left:875px;top:479px;width:61px;height:30px;line-height:30px;box-sizing:border-box;font-size:18px;color:#222;text-align:center;white-space:nowrap;overflow:hidden;">1</div>
<div style="left:937px;top:479px;width:116px;height:30px;line-height:30px;box-sizing:border-box;font-size:18px;color:#222;text-align:right;white-space:nowrap;padding-right:4px;overflow:hidden;">-188.37</div>
<div style="left:1134px;top:479px;width:75px;height:30px;line-height:30px;box-sizing:border-box;font-size:18px;color:#222;text-align:right;white-space:nowrap;padding-right:4px;overflow:hidden;">30467</div>
<div style="left:1210px;top:479px;width:74px;height:30px;line-height:30px;box-sizing:border-box;font-size:18px;color:#006100;text-align:right;white-space:nowrap;padding-right:4px;overflow:hidden;">0.9953</div>
<div style="left:1285px;top:479px;width:73px;height:30px;line-height:30px;box-sizing:border-box;font-size:18px;color:#222;text-align:right;white-space:nowrap;padding-right:4px;overflow:hidden;">28689</div>
<div style="left:1359px;top:479px;width:73px;height:30px;line-height:30px;box-sizing:border-box;font-size:18px;color:#9c0006;text-align:right;white-space:nowrap;padding-right:4px;overflow:hidden;">1.057</div>
<div style="left:1433px;top:479px;width:73px;height:30px;line-height:30px;box-sizing:border-box;font-size:18px;color:#222;text-align:right;white-space:nowrap;padding-right:4px;overflow:hidden;">28408</div>
<div style="left:1507px;top:479px;width:71px;height:30px;line-height:30px;box-sizing:border-box;font-size:18px;color:#9c0006;text-align:right;white-space:nowrap;padding-right:4px;overflow:hidden;">1.0674</div>
<div style="left:1579px;top:479px;width:65px;height:30px;line-height:30px;box-sizing:border-box;font-size:17.6px;color:#1a1a1a;text-align:left;white-space:nowrap;padding-left:4px;overflow:hidden;">上昇</div>
<div style="left:1645px;top:479px;width:93px;height:30px;line-height:30px;box-sizing:border-box;font-size:18px;color:#006100;text-align:right;white-space:nowrap;padding-right:4px;overflow:hidden;">42.1</div>
<div style="left:37px;top:509px;width:104px;height:30px;line-height:30px;box-sizing:border-box;font-size:18px;color:#222;text-align:center;white-space:nowrap;overflow:hidden;letter-spacing:0.9px;">2021/9/15</div>
<div style="left:142px;top:509px;width:87px;height:30px;line-height:30px;box-sizing:border-box;font-size:18px;color:#222;text-align:center;white-space:nowrap;overflow:hidden;">30,464.17</div>
<div style="left:230px;top:509px;width:87px;height:30px;line-height:30px;box-sizing:border-box;font-size:18px;color:#222;text-align:center;white-space:nowrap;overflow:hidden;">30,573.41</div>
<div style="left:318px;top:509px;width:87px;height:30px;line-height:30px;box-sizing:border-box;font-size:18px;color:#222;text-align:center;white-space:nowrap;overflow:hidden;">30,347.30</div>
<div style="left:406px;top:509px;width:93px;height:30px;line-height:30px;box-sizing:border-box;font-size:18px;color:#222;text-align:center;white-space:nowrap;overflow:hidden;">30,511.71</div>
<div style="left:500px;top:509px;width:85px;height:30px;line-height:30px;box-sizing:border-box;font-size:18px;color:#222;text-align:center;white-space:nowrap;overflow:hidden;">-158.39</div>
<div style="left:586px;top:509px;width:85px;height:30px;line-height:30px;box-sizing:border-box;font-size:18px;color:#222;text-align:center;white-space:nowrap;overflow:hidden;">-0.5</div>
<div style="left:672px;top:509px;width:125px;height:30px;line-height:30px;box-sizing:border-box;font-size:18px;color:#222;text-align:center;white-space:nowrap;overflow:hidden;">1,047,061,700</div>
<div style="left:798px;top:509px;width:76px;height:30px;line-height:30px;box-sizing:border-box;font-size:17.6px;color:#9c0006;text-align:center;white-space:nowrap;overflow:hidden;">陽</div>
<div style="left:875px;top:509px;width:61px;height:30px;line-height:30px;box-sizing:border-box;font-size:18px;color:#1a1a1a;text-align:center;white-space:nowrap;overflow:hidden;">12</div>
<div style="left:937px;top:509px;width:116px;height:30px;line-height:30px;box-sizing:border-box;font-size:18px;color:#222;text-align:right;white-space:nowrap;padding-right:4px;overflow:hidden;">2722.42</div>
<div style="left:1054px;top:509px;width:79px;height:30px;line-height:30px;box-sizing:border-box;font-size:17.6px;color:#9c5700;text-align:center;white-space:nowrap;overflow:hidden;">千</div>
<div style="left:1134px;top:509px;width:75px;height:30px;line-height:30px;box-sizing:border-box;font-size:18px;color:#222;text-align:right;white-space:nowrap;padding-right:4px;overflow:hidden;">30404</div>
<div style="left:1210px;top:509px;width:74px;height:30px;line-height:30px;box-sizing:border-box;font-size:18px;color:#9c0006;text-align:right;white-space:nowrap;padding-right:4px;overflow:hidden;">1.0035</div>
<div style="left:1285px;top:509px;width:73px;height:30px;line-height:30px;box-sizing:border-box;font-size:18px;color:#222;text-align:right;white-space:nowrap;padding-right:4px;overflow:hidden;">28597</div>
<div style="left:1359px;top:509px;width:73px;height:30px;line-height:30px;box-sizing:border-box;font-size:18px;color:#9c0006;text-align:right;white-space:nowrap;padding-right:4px;overflow:hidden;">1.0669</div>
<div style="left:1433px;top:509px;width:73px;height:30px;line-height:30px;box-sizing:border-box;font-size:18px;color:#222;text-align:right;white-space:nowrap;padding-right:4px;overflow:hidden;">28370</div>
<div style="left:1507px;top:509px;width:71px;height:30px;line-height:30px;box-sizing:border-box;font-size:18px;color:#9c0006;text-align:right;white-space:nowrap;padding-right:4px;overflow:hidden;">1.0755</div>
<div style="left:1579px;top:509px;width:65px;height:30px;line-height:30px;box-sizing:border-box;font-size:17.6px;color:#1a1a1a;text-align:left;white-space:nowrap;padding-left:4px;overflow:hidden;">上昇</div>
<div style="left:1645px;top:509px;width:93px;height:30px;line-height:30px;box-sizing:border-box;font-size:18px;color:#9c0006;text-align:right;white-space:nowrap;padding-right:4px;overflow:hidden;">39.3</div>
<div style="left:37px;top:539px;width:104px;height:30px;line-height:30px;box-sizing:border-box;font-size:18px;color:#222;text-align:center;white-space:nowrap;overflow:hidden;letter-spacing:0.9px;">2021/9/14</div>
<div style="left:142px;top:539px;width:87px;height:30px;line-height:30px;box-sizing:border-box;font-size:18px;color:#222;text-align:center;white-space:nowrap;overflow:hidden;">30,584.77</div>
<div style="left:230px;top:539px;width:87px;height:30px;line-height:30px;box-sizing:border-box;font-size:18px;color:#222;text-align:center;white-space:nowrap;overflow:hidden;">30,795.78</div>
<div style="left:318px;top:539px;width:87px;height:30px;line-height:30px;box-sizing:border-box;font-size:18px;color:#222;text-align:center;white-space:nowrap;overflow:hidden;">30,504.81</div>
<div style="left:406px;top:539px;width:93px;height:30px;line-height:30px;box-sizing:border-box;font-size:18px;color:#222;text-align:center;white-space:nowrap;overflow:hidden;">30,670.10</div>
<div style="left:500px;top:539px;width:85px;height:30px;line-height:30px;box-sizing:border-box;font-size:18px;color:#222;text-align:center;white-space:nowrap;overflow:hidden;">222.73</div>
<div style="left:586px;top:539px;width:85px;height:30px;line-height:30px;box-sizing:border-box;font-size:18px;color:#222;text-align:center;white-space:nowrap;overflow:hidden;">0.7</div>
<div style="left:672px;top:539px;width:125px;height:30px;line-height:30px;box-sizing:border-box;font-size:18px;color:#222;text-align:center;white-space:nowrap;overflow:hidden;">1,144,580,700</div>
<div style="left:798px;top:539px;width:76px;height:30px;line-height:30px;box-sizing:border-box;font-size:17.6px;color:#9c0006;text-align:center;white-space:nowrap;overflow:hidden;">陽</div>
<div style="left:875px;top:539px;width:61px;height:30px;line-height:30px;box-sizing:border-box;font-size:18px;color:#1a1a1a;text-align:center;white-space:nowrap;overflow:hidden;">11</div>
<div style="left:937px;top:539px;width:116px;height:30px;line-height:30px;box-sizing:border-box;font-size:18px;color:#222;text-align:right;white-space:nowrap;padding-right:4px;overflow:hidden;">2880.81</div>
<div style="left:1054px;top:539px;width:79px;height:30px;line-height:30px;box-sizing:border-box;font-size:17.6px;color:#9c5700;text-align:center;white-space:nowrap;overflow:hidden;">千</div>
<div style="left:1134px;top:539px;width:75px;height:30px;line-height:30px;box-sizing:border-box;font-size:18px;color:#222;text-align:right;white-space:nowrap;padding-right:4px;overflow:hidden;">30338</div>
<div style="left:1210px;top:539px;width:74px;height:30px;line-height:30px;box-sizing:border-box;font-size:18px;color:#9c0006;text-align:right;white-space:nowrap;padding-right:4px;overflow:hidden;">1.011</div>
<div style="left:1285px;top:539px;width:73px;height:30px;line-height:30px;box-sizing:border-box;font-size:18px;color:#222;text-align:right;white-space:nowrap;padding-right:4px;overflow:hidden;">28499</div>
<div style="left:1359px;top:539px;width:73px;height:30px;line-height:30px;box-sizing:border-box;font-size:18px;color:#9c0006;text-align:right;white-space:nowrap;padding-right:4px;overflow:hidden;">1.0762</div>
<div style="left:1433px;top:539px;width:73px;height:30px;line-height:30px;box-sizing:border-box;font-size:18px;color:#222;text-align:right;white-space:nowrap;padding-right:4px;overflow:hidden;">28344</div>
<div style="left:1507px;top:539px;width:71px;height:30px;line-height:30px;box-sizing:border-box;font-size:18px;color:#9c0006;text-align:right;white-space:nowrap;padding-right:4px;overflow:hidden;">1.0821</div>
<div style="left:1579px;top:539px;width:65px;height:30px;line-height:30px;box-sizing:border-box;font-size:17.6px;color:#1a1a1a;text-align:left;white-space:nowrap;padding-left:4px;overflow:hidden;">上昇</div>
<div style="left:1645px;top:539px;width:93px;height:30px;line-height:30px;box-sizing:border-box;font-size:18px;color:#9c0006;text-align:right;white-space:nowrap;padding-right:4px;overflow:hidden;">38</div>
<div style="left:37px;top:569px;width:104px;height:30px;line-height:30px;box-sizing:border-box;font-size:18px;color:#222;text-align:center;white-space:nowrap;overflow:hidden;letter-spacing:0.9px;">2021/9/13</div>
<div style="left:142px;top:569px;width:87px;height:30px;line-height:30px;box-sizing:border-box;font-size:18px;color:#222;text-align:center;white-space:nowrap;overflow:hidden;">30,372.02</div>
<div style="left:230px;top:569px;width:87px;height:30px;line-height:30px;box-sizing:border-box;font-size:18px;color:#222;text-align:center;white-space:nowrap;overflow:hidden;">30,447.37</div>
<div style="left:318px;top:569px;width:87px;height:30px;line-height:30px;box-sizing:border-box;font-size:18px;color:#222;text-align:center;white-space:nowrap;overflow:hidden;">30,229.01</div>
<div style="left:406px;top:569px;width:93px;height:30px;line-height:30px;box-sizing:border-box;font-size:18px;color:#222;text-align:center;white-space:nowrap;overflow:hidden;">30,447.37</div>
<div style="left:500px;top:569px;width:85px;height:30px;line-height:30px;box-sizing:border-box;font-size:18px;color:#222;text-align:center;white-space:nowrap;overflow:hidden;">65.53</div>
<div style="left:586px;top:569px;width:85px;height:30px;line-height:30px;box-sizing:border-box;font-size:18px;color:#222;text-align:center;white-space:nowrap;overflow:hidden;">0.2</div>
<div style="left:672px;top:569px;width:125px;height:30px;line-height:30px;box-sizing:border-box;font-size:18px;color:#222;text-align:center;white-space:nowrap;overflow:hidden;">990,996,600</div>
<div style="left:798px;top:569px;width:76px;height:30px;line-height:30px;box-sizing:border-box;font-size:17.6px;color:#9c0006;text-align:center;white-space:nowrap;overflow:hidden;">陽</div>
<div style="left:875px;top:569px;width:61px;height:30px;line-height:30px;box-sizing:border-box;font-size:18px;color:#1a1a1a;text-align:center;white-space:nowrap;overflow:hidden;">10</div>
<div style="left:937px;top:569px;width:116px;height:30px;line-height:30px;box-sizing:border-box;font-size:18px;color:#222;text-align:right;white-space:nowrap;padding-right:4px;overflow:hidden;">2658.08</div>
<div style="left:1054px;top:569px;width:79px;height:30px;line-height:30px;box-sizing:border-box;font-size:17.6px;color:#9c5700;text-align:center;white-space:nowrap;overflow:hidden;">千</div>
<div style="left:1134px;top:569px;width:75px;height:30px;line-height:30px;box-sizing:border-box;font-size:18px;color:#222;text-align:right;white-space:nowrap;padding-right:4px;overflow:hidden;">30187</div>
<div style="left:1210px;top:569px;width:74px;height:30px;line-height:30px;box-sizing:border-box;font-size:18px;color:#9c0006;text-align:right;white-space:nowrap;padding-right:4px;overflow:hidden;">1.0086</div>
<div style="left:1285px;top:569px;width:73px;height:30px;line-height:30px;box-sizing:border-box;font-size:18px;color:#222;text-align:right;white-space:nowrap;padding-right:4px;overflow:hidden;">28388</div>
<div style="left:1359px;top:569px;width:73px;height:30px;line-height:30px;box-sizing:border-box;font-size:18px;color:#9c0006;text-align:right;white-space:nowrap;padding-right:4px;overflow:hidden;">1.0725</div>
<div style="left:1433px;top:569px;width:73px;height:30px;line-height:30px;box-sizing:border-box;font-size:18px;color:#222;text-align:right;white-space:nowrap;padding-right:4px;overflow:hidden;">28316</div>
<div style="left:1507px;top:569px;width:71px;height:30px;line-height:30px;box-sizing:border-box;font-size:18px;color:#9c0006;text-align:right;white-space:nowrap;padding-right:4px;overflow:hidden;">1.0753</div>
<div style="left:1579px;top:569px;width:65px;height:30px;line-height:30px;box-sizing:border-box;font-size:17.6px;color:#1a1a1a;text-align:left;white-space:nowrap;padding-left:4px;overflow:hidden;">上昇</div>
<div style="left:1645px;top:569px;width:93px;height:30px;line-height:30px;box-sizing:border-box;font-size:18px;color:#006100;text-align:right;white-space:nowrap;padding-right:4px;overflow:hidden;">40.6</div>
<div style="left:37px;top:599px;width:104px;height:30px;line-height:30px;box-sizing:border-box;font-size:18px;color:#222;text-align:center;white-space:nowrap;overflow:hidden;letter-spacing:0.9px;">2021/9/10</div>
<div style="left:142px;top:599px;width:87px;height:30px;line-height:30px;box-sizing:border-box;font-size:18px;color:#222;text-align:center;white-space:nowrap;overflow:hidden;">30,089.45</div>
<div style="left:230px;top:599px;width:87px;height:30px;line-height:30px;box-sizing:border-box;font-size:18px;color:#222;text-align:center;white-space:nowrap;overflow:hidden;">30,381.84</div>
<div style="left:318px;top:599px;width:87px;height:30px;line-height:30px;box-sizing:border-box;font-size:18px;color:#222;text-align:center;white-space:nowrap;overflow:hidden;">30,064.02</div>
<div style="left:406px;top:599px;width:93px;height:30px;line-height:30px;box-sizing:border-box;font-size:18px;color:#222;text-align:center;white-space:nowrap;overflow:hidden;">30,381.84</div>
<div style="left:500px;top:599px;width:85px;height:30px;line-height:30px;box-sizing:border-box;font-size:18px;color:#222;text-align:center;white-space:nowrap;overflow:hidden;">373.65</div>
<div style="left:586px;top:599px;width:85px;height:30px;line-height:30px;box-sizing:border-box;font-size:18px;color:#222;text-align:center;white-space:nowrap;overflow:hidden;">1.2</div>
<div style="left:672px;top:599px;width:125px;height:30px;line-height:30px;box-sizing:border-box;font-size:18px;color:#222;text-align:center;white-space:nowrap;overflow:hidden;">1,291,034,100</div>
<div style="left:798px;top:599px;width:76px;height:30px;line-height:30px;box-sizing:border-box;font-size:17.6px;color:#9c0006;text-align:center;white-space:nowrap;overflow:hidden;">陽</div>
<div style="left:875px;top:599px;width:61px;height:30px;line-height:30px;box-sizing:border-box;font-size:18px;color:#1a1a1a;text-align:center;white-space:nowrap;overflow:hidden;">9</div>
<div style="left:937px;top:599px;width:116px;height:30px;line-height:30px;box-sizing:border-box;font-size:18px;color:#222;text-align:right;white-space:nowrap;padding-right:4px;overflow:hidden;">2592.55</div>
<div style="left:1054px;top:599px;width:79px;height:30px;line-height:30px;box-sizing:border-box;font-size:17.6px;color:#9c5700;text-align:center;white-space:nowrap;overflow:hidden;">千</div>
<div style="left:1134px;top:599px;width:75px;height:30px;line-height:30px;box-sizing:border-box;font-size:18px;color:#222;text-align:right;white-space:nowrap;padding-right:4px;overflow:hidden;">30029</div>
<div style="left:1210px;top:599px;width:74px;height:30px;line-height:30px;box-sizing:border-box;font-size:18px;color:#9c0006;text-align:right;white-space:nowrap;padding-right:4px;overflow:hidden;">1.0117</div>
<div style="left:1285px;top:599px;width:73px;height:30px;line-height:30px;box-sizing:border-box;font-size:18px;color:#222;text-align:right;white-space:nowrap;padding-right:4px;overflow:hidden;">28283</div>
<div style="left:1359px;top:599px;width:73px;height:30px;line-height:30px;box-sizing:border-box;font-size:18px;color:#9c0006;text-align:right;white-space:nowrap;padding-right:4px;overflow:hidden;">1.0742</div>
<div style="left:1433px;top:599px;width:73px;height:30px;line-height:30px;box-sizing:border-box;font-size:18px;color:#222;text-align:right;white-space:nowrap;padding-right:4px;overflow:hidden;">28297</div>
<div style="left:1507px;top:599px;width:71px;height:30px;line-height:30px;box-sizing:border-box;font-size:18px;color:#9c0006;text-align:right;white-space:nowrap;padding-right:4px;overflow:hidden;">1.0737</div>
<div style="left:1645px;top:599px;width:93px;height:30px;line-height:30px;box-sizing:border-box;font-size:18px;color:#006100;text-align:right;white-space:nowrap;padding-right:4px;overflow:hidden;">44.8</div>
<div style="left:37px;top:629px;width:104px;height:30px;line-height:30px;box-sizing:border-box;font-size:18px;color:#222;text-align:center;white-space:nowrap;overflow:hidden;letter-spacing:0.9px;">2021/9/9</div>
<div style="left:142px;top:629px;width:87px;height:30px;line-height:30px;box-sizing:border-box;font-size:18px;color:#222;text-align:center;white-space:nowrap;overflow:hidden;">29,959.21</div>
<div style="left:230px;top:629px;width:87px;height:30px;line-height:30px;box-sizing:border-box;font-size:18px;color:#222;text-align:center;white-space:nowrap;overflow:hidden;">30,097.56</div>
<div style="left:318px;top:629px;width:87px;height:30px;line-height:30px;box-sizing:border-box;font-size:18px;color:#222;text-align:center;white-space:nowrap;overflow:hidden;">29,909.92</div>
<div style="left:406px;top:629px;width:93px;height:30px;line-height:30px;box-sizing:border-box;font-size:18px;color:#222;text-align:center;white-space:nowrap;overflow:hidden;">30,008.19</div>
<div style="left:500px;top:629px;width:85px;height:30px;line-height:30px;box-sizing:border-box;font-size:18px;color:#222;text-align:center;white-space:nowrap;overflow:hidden;">-173.02</div>
<div style="left:586px;top:629px;width:85px;height:30px;line-height:30px;box-sizing:border-box;font-size:18px;color:#222;text-align:center;white-space:nowrap;overflow:hidden;">-0.6</div>
<div style="left:672px;top:629px;width:125px;height:30px;line-height:30px;box-sizing:border-box;font-size:18px;color:#222;text-align:center;white-space:nowrap;overflow:hidden;">1,060,087,000</div>
<div style="left:798px;top:629px;width:76px;height:30px;line-height:30px;box-sizing:border-box;font-size:17.6px;color:#9c0006;text-align:center;white-space:nowrap;overflow:hidden;">陽</div>
<div style="left:875px;top:629px;width:61px;height:30px;line-height:30px;box-sizing:border-box;font-size:18px;color:#1a1a1a;text-align:center;white-space:nowrap;overflow:hidden;">8</div>
<div style="left:937px;top:629px;width:116px;height:30px;line-height:30px;box-sizing:border-box;font-size:18px;color:#222;text-align:right;white-space:nowrap;padding-right:4px;overflow:hidden;">2218.9</div>
<div style="left:1054px;top:629px;width:79px;height:30px;line-height:30px;box-sizing:border-box;font-size:17.6px;color:#9c5700;text-align:center;white-space:nowrap;overflow:hidden;">千</div>
<div style="left:1134px;top:629px;width:75px;height:30px;line-height:30px;box-sizing:border-box;font-size:18px;color:#222;text-align:right;white-space:nowrap;padding-right:4px;overflow:hidden;">29779</div>
<div style="left:1210px;top:629px;width:74px;height:30px;line-height:30px;box-sizing:border-box;font-size:18px;color:#9c0006;text-align:right;white-space:nowrap;padding-right:4px;overflow:hidden;">1.0077</div>
<div style="left:1285px;top:629px;width:73px;height:30px;line-height:30px;box-sizing:border-box;font-size:18px;color:#222;text-align:right;white-space:nowrap;padding-right:4px;overflow:hidden;">28177</div>
<div style="left:1359px;top:629px;width:73px;height:30px;line-height:30px;box-sizing:border-box;font-size:18px;color:#9c0006;text-align:right;white-space:nowrap;padding-right:4px;overflow:hidden;">1.065</div>
<div style="left:1433px;top:629px;width:73px;height:30px;line-height:30px;box-sizing:border-box;font-size:18px;color:#222;text-align:right;white-space:nowrap;padding-right:4px;overflow:hidden;">28281</div>
<div style="left:1507px;top:629px;width:71px;height:30px;line-height:30px;box-sizing:border-box;font-size:18px;color:#9c0006;text-align:right;white-space:nowrap;padding-right:4px;overflow:hidden;">1.0611</div>
<div style="left:1645px;top:629px;width:93px;height:30px;line-height:30px;box-sizing:border-box;font-size:18px;color:#006100;text-align:right;white-space:nowrap;padding-right:4px;overflow:hidden;">41.7</div>
<div style="left:37px;top:659px;width:104px;height:30px;line-height:30px;box-sizing:border-box;font-size:18px;color:#222;text-align:center;white-space:nowrap;overflow:hidden;letter-spacing:0.9px;">2021/9/8</div>
<div style="left:142px;top:659px;width:87px;height:30px;line-height:30px;box-sizing:border-box;font-size:18px;color:#222;text-align:center;white-space:nowrap;overflow:hidden;">29,819.55</div>
<div style="left:230px;top:659px;width:87px;height:30px;line-height:30px;box-sizing:border-box;font-size:18px;color:#222;text-align:center;white-space:nowrap;overflow:hidden;">30,241.87</div>
<div style="left:318px;top:659px;width:87px;height:30px;line-height:30px;box-sizing:border-box;font-size:18px;color:#222;text-align:center;white-space:nowrap;overflow:hidden;">29,787.13</div>
<div style="left:406px;top:659px;width:93px;height:30px;line-height:30px;box-sizing:border-box;font-size:18px;color:#222;text-align:center;white-space:nowrap;overflow:hidden;">30,181.21</div>
<div style="left:500px;top:659px;width:85px;height:30px;line-height:30px;box-sizing:border-box;font-size:18px;color:#222;text-align:center;white-space:nowrap;overflow:hidden;">265.07</div>
<div style="left:586px;top:659px;width:85px;height:30px;line-height:30px;box-sizing:border-box;font-size:18px;color:#222;text-align:center;white-space:nowrap;overflow:hidden;">0.9</div>
<div style="left:672px;top:659px;width:125px;height:30px;line-height:30px;box-sizing:border-box;font-size:18px;color:#222;text-align:center;white-space:nowrap;overflow:hidden;">1,087,239,700</div>
<div style="left:798px;top:659px;width:76px;height:30px;line-height:30px;box-sizing:border-box;font-size:17.6px;color:#9c0006;text-align:center;white-space:nowrap;overflow:hidden;">陽</div>
<div style="left:875px;top:659px;width:61px;height:30px;line-height:30px;box-sizing:border-box;font-size:18px;color:#1a1a1a;text-align:center;white-space:nowrap;overflow:hidden;">7</div>
<div style="left:937px;top:659px;width:116px;height:30px;line-height:30px;box-sizing:border-box;font-size:18px;color:#222;text-align:right;white-space:nowrap;padding-right:4px;overflow:hidden;">2391.92</div>
<div style="left:1054px;top:659px;width:79px;height:30px;line-height:30px;box-sizing:border-box;font-size:17.6px;color:#9c5700;text-align:center;white-space:nowrap;overflow:hidden;">千</div>
<div style="left:1134px;top:659px;width:75px;height:30px;line-height:30px;box-sizing:border-box;font-size:18px;color:#222;text-align:right;white-space:nowrap;padding-right:4px;overflow:hidden;">29486</div>
<div style="left:1210px;top:659px;width:74px;height:30px;line-height:30px;box-sizing:border-box;font-size:18px;color:#9c0006;text-align:right;white-space:nowrap;padding-right:4px;overflow:hidden;">1.0236</div>
<div style="left:1285px;top:659px;width:73px;height:30px;line-height:30px;box-sizing:border-box;font-size:18px;color:#222;text-align:right;white-space:nowrap;padding-right:4px;overflow:hidden;">28080</div>
<div style="left:1359px;top:659px;width:73px;height:30px;line-height:30px;box-sizing:border-box;font-size:18px;color:#9c0006;text-align:right;white-space:nowrap;padding-right:4px;overflow:hidden;">1.0748</div>
<div style="left:1433px;top:659px;width:73px;height:30px;line-height:30px;box-sizing:border-box;font-size:18px;color:#222;text-align:right;white-space:nowrap;padding-right:4px;overflow:hidden;">28267</div>
<div style="left:1507px;top:659px;width:71px;height:30px;line-height:30px;box-sizing:border-box;font-size:18px;color:#9c0006;text-align:right;white-space:nowrap;padding-right:4px;overflow:hidden;">1.0677</div>
<div style="left:1645px;top:659px;width:93px;height:30px;line-height:30px;box-sizing:border-box;font-size:18px;color:#006100;text-align:right;white-space:nowrap;padding-right:4px;overflow:hidden;">40.1</div>
<div style="left:37px;top:689px;width:104px;height:30px;line-height:30px;box-sizing:border-box;font-size:18px;color:#222;text-align:center;white-space:nowrap;overflow:hidden;letter-spacing:0.9px;">2021/9/7</div>
<div style="left:142px;top:689px;width:87px;height:30px;line-height:30px;box-sizing:border-box;font-size:18px;color:#222;text-align:center;white-space:nowrap;overflow:hidden;">29,883.92</div>
<div style="left:230px;top:689px;width:87px;height:30px;line-height:30px;box-sizing:border-box;font-size:18px;color:#222;text-align:center;white-space:nowrap;overflow:hidden;">30,048.23</div>
<div style="left:318px;top:689px;width:87px;height:30px;line-height:30px;box-sizing:border-box;font-size:18px;color:#222;text-align:center;white-space:nowrap;overflow:hidden;">29,838.43</div>
<div style="left:406px;top:689px;width:93px;height:30px;line-height:30px;box-sizing:border-box;font-size:18px;color:#222;text-align:center;white-space:nowrap;overflow:hidden;">29,916.14</div>
<div style="left:500px;top:689px;width:85px;height:30px;line-height:30px;box-sizing:border-box;font-size:18px;color:#222;text-align:center;white-space:nowrap;overflow:hidden;">256.25</div>
<div style="left:586px;top:689px;width:85px;height:30px;line-height:30px;box-sizing:border-box;font-size:18px;color:#222;text-align:center;white-space:nowrap;overflow:hidden;">0.9</div>
<div style="left:672px;top:689px;width:125px;height:30px;line-height:30px;box-sizing:border-box;font-size:18px;color:#222;text-align:center;white-space:nowrap;overflow:hidden;">1,083,202,500</div>
<div style="left:798px;top:689px;width:76px;height:30px;line-height:30px;box-sizing:border-box;font-size:17.6px;color:#9c0006;text-align:center;white-space:nowrap;overflow:hidden;">陽</div>
<div style="left:875px;top:689px;width:61px;height:30px;line-height:30px;box-sizing:border-box;font-size:18px;color:#1a1a1a;text-align:center;white-space:nowrap;overflow:hidden;">6</div>
<div style="left:937px;top:689px;width:116px;height:30px;line-height:30px;box-sizing:border-box;font-size:18px;color:#222;text-align:right;white-space:nowrap;padding-right:4px;overflow:hidden;">2126.85</div>
<div style="left:1054px;top:689px;width:79px;height:30px;line-height:30px;box-sizing:border-box;font-size:17.6px;color:#9c5700;text-align:center;white-space:nowrap;overflow:hidden;">千</div>
<div style="left:1134px;top:689px;width:75px;height:30px;line-height:30px;box-sizing:border-box;font-size:18px;color:#222;text-align:right;white-space:nowrap;padding-right:4px;overflow:hidden;">29140</div>
<div style="left:1210px;top:689px;width:74px;height:30px;line-height:30px;box-sizing:border-box;font-size:18px;color:#9c0006;text-align:right;white-space:nowrap;padding-right:4px;overflow:hidden;">1.0266</div>
<div style="left:1285px;top:689px;width:73px;height:30px;line-height:30px;box-sizing:border-box;font-size:18px;color:#222;text-align:right;white-space:nowrap;padding-right:4px;overflow:hidden;">27978</div>
<div style="left:1359px;top:689px;width:73px;height:30px;line-height:30px;box-sizing:border-box;font-size:18px;color:#9c0006;text-align:right;white-space:nowrap;padding-right:4px;overflow:hidden;">1.0693</div>
<div style="left:1433px;top:689px;width:73px;height:30px;line-height:30px;box-sizing:border-box;font-size:18px;color:#222;text-align:right;white-space:nowrap;padding-right:4px;overflow:hidden;">28247</div>
<div style="left:1507px;top:689px;width:71px;height:30px;line-height:30px;box-sizing:border-box;font-size:18px;color:#9c0006;text-align:right;white-space:nowrap;padding-right:4px;overflow:hidden;">1.0591</div>
<div style="left:1645px;top:689px;width:93px;height:30px;line-height:30px;box-sizing:border-box;font-size:18px;color:#9c0006;text-align:right;white-space:nowrap;padding-right:4px;overflow:hidden;">39.4</div>
<div style="left:37px;top:719px;width:104px;height:30px;line-height:30px;box-sizing:border-box;font-size:18px;color:#222;text-align:center;white-space:nowrap;overflow:hidden;letter-spacing:0.9px;">2021/9/6</div>
<div style="left:142px;top:719px;width:87px;height:30px;line-height:30px;box-sizing:border-box;font-size:18px;color:#222;text-align:center;white-space:nowrap;overflow:hidden;">29,501.22</div>
<div style="left:230px;top:719px;width:87px;height:30px;line-height:30px;box-sizing:border-box;font-size:18px;color:#222;text-align:center;white-space:nowrap;overflow:hidden;">29,705.04</div>
<div style="left:318px;top:719px;width:87px;height:30px;line-height:30px;box-sizing:border-box;font-size:18px;color:#222;text-align:center;white-space:nowrap;overflow:hidden;">29,469.35</div>
<div style="left:406px;top:719px;width:93px;height:30px;line-height:30px;box-sizing:border-box;font-size:18px;color:#222;text-align:center;white-space:nowrap;overflow:hidden;">29,659.89</div>
<div style="left:500px;top:719px;width:85px;height:30px;line-height:30px;box-sizing:border-box;font-size:18px;color:#222;text-align:center;white-space:nowrap;overflow:hidden;">531.78</div>
<div style="left:586px;top:719px;width:85px;height:30px;line-height:30px;box-sizing:border-box;font-size:18px;color:#222;text-align:center;white-space:nowrap;overflow:hidden;">1.8</div>
<div style="left:672px;top:719px;width:125px;height:30px;line-height:30px;box-sizing:border-box;font-size:18px;color:#222;text-align:center;white-space:nowrap;overflow:hidden;">1,176,832,400</div>
<div style="left:798px;top:719px;width:76px;height:30px;line-height:30px;box-sizing:border-box;font-size:17.6px;color:#9c0006;text-align:center;white-space:nowrap;overflow:hidden;">陽</div>
<div style="left:875px;top:719px;width:61px;height:30px;line-height:30px;box-sizing:border-box;font-size:18px;color:#1a1a1a;text-align:center;white-space:nowrap;overflow:hidden;">5</div>
<div style="left:937px;top:719px;width:116px;height:30px;line-height:30px;box-sizing:border-box;font-size:18px;color:#222;text-align:right;white-space:nowrap;padding-right:4px;overflow:hidden;">1870.6</div>
<div style="left:1054px;top:719px;width:79px;height:30px;line-height:30px;box-sizing:border-box;font-size:17.6px;color:#9c5700;text-align:center;white-space:nowrap;overflow:hidden;">千</div>
<div style="left:1134px;top:719px;width:75px;height:30px;line-height:30px;box-sizing:border-box;font-size:18px;color:#222;text-align:right;white-space:nowrap;padding-right:4px;overflow:hidden;">28774</div>
<div style="left:1210px;top:719px;width:74px;height:30px;line-height:30px;box-sizing:border-box;font-size:18px;color:#9c0006;text-align:right;white-space:nowrap;padding-right:4px;overflow:hidden;">1.0308</div>
<div style="left:1285px;top:719px;width:73px;height:30px;line-height:30px;box-sizing:border-box;font-size:18px;color:#222;text-align:right;white-space:nowrap;padding-right:4px;overflow:hidden;">27893</div>
<div style="left:1359px;top:719px;width:73px;height:30px;line-height:30px;box-sizing:border-box;font-size:18px;color:#9c0006;text-align:right;white-space:nowrap;padding-right:4px;overflow:hidden;">1.0633</div>
<div style="left:1433px;top:719px;width:73px;height:30px;line-height:30px;box-sizing:border-box;font-size:18px;color:#222;text-align:right;white-space:nowrap;padding-right:4px;overflow:hidden;">28231</div>
<div style="left:1507px;top:719px;width:71px;height:30px;line-height:30px;box-sizing:border-box;font-size:18px;color:#9c0006;text-align:right;white-space:nowrap;padding-right:4px;overflow:hidden;">1.0506</div>
<div style="left:1645px;top:719px;width:93px;height:30px;line-height:30px;box-sizing:border-box;font-size:18px;color:#9c0006;text-align:right;white-space:nowrap;padding-right:4px;overflow:hidden;">38.7</div>
<div style="left:37px;top:749px;width:104px;height:30px;line-height:30px;box-sizing:border-box;font-size:18px;color:#222;text-align:center;white-space:nowrap;overflow:hidden;letter-spacing:0.9px;">2021/9/3</div>
<div style="left:142px;top:749px;width:87px;height:30px;line-height:30px;box-sizing:border-box;font-size:18px;color:#222;text-align:center;white-space:nowrap;overflow:hidden;">28,626.48</div>
<div style="left:230px;top:749px;width:87px;height:30px;line-height:30px;box-sizing:border-box;font-size:18px;color:#222;text-align:center;white-space:nowrap;overflow:hidden;">29,149.65</div>
<div style="left:318px;top:749px;width:87px;height:30px;line-height:30px;box-sizing:border-box;font-size:18px;color:#222;text-align:center;white-space:nowrap;overflow:hidden;">28,607.87</div>
<div style="left:406px;top:749px;width:93px;height:30px;line-height:30px;box-sizing:border-box;font-size:18px;color:#222;text-align:center;white-space:nowrap;overflow:hidden;">29,128.11</div>
<div style="left:500px;top:749px;width:85px;height:30px;line-height:30px;box-sizing:border-box;font-size:18px;color:#222;text-align:center;white-space:nowrap;overflow:hidden;">584.6</div>
<div style="left:586px;top:749px;width:85px;height:30px;line-height:30px;box-sizing:border-box;font-size:18px;color:#222;text-align:center;white-space:nowrap;overflow:hidden;">2</div>
<div style="left:672px;top:749px;width:125px;height:30px;line-height:30px;box-sizing:border-box;font-size:18px;color:#222;text-align:center;white-space:nowrap;overflow:hidden;">1,243,105,900</div>
<div style="left:798px;top:749px;width:76px;height:30px;line-height:30px;box-sizing:border-box;font-size:17.6px;color:#9c0006;text-align:center;white-space:nowrap;overflow:hidden;">陽</div>
<div style="left:875px;top:749px;width:61px;height:30px;line-height:30px;box-sizing:border-box;font-size:18px;color:#1a1a1a;text-align:center;white-space:nowrap;overflow:hidden;">4</div>
<div style="left:937px;top:749px;width:116px;height:30px;line-height:30px;box-sizing:border-box;font-size:18px;color:#222;text-align:right;white-space:nowrap;padding-right:4px;overflow:hidden;">1338.82</div>
<div style="left:1054px;top:749px;width:79px;height:30px;line-height:30px;box-sizing:border-box;font-size:17.6px;color:#9c5700;text-align:center;white-space:nowrap;overflow:hidden;">千</div>
<div style="left:1134px;top:749px;width:75px;height:30px;line-height:30px;box-sizing:border-box;font-size:18px;color:#222;text-align:right;white-space:nowrap;padding-right:4px;overflow:hidden;">28400</div>
<div style="left:1210px;top:749px;width:74px;height:30px;line-height:30px;box-sizing:border-box;font-size:18px;color:#9c0006;text-align:right;white-space:nowrap;padding-right:4px;overflow:hidden;">1.0256</div>
<div style="left:1285px;top:749px;width:73px;height:30px;line-height:30px;box-sizing:border-box;font-size:18px;color:#222;text-align:right;white-space:nowrap;padding-right:4px;overflow:hidden;">27798</div>
<div style="left:1359px;top:749px;width:73px;height:30px;line-height:30px;box-sizing:border-box;font-size:18px;color:#9c0006;text-align:right;white-space:nowrap;padding-right:4px;overflow:hidden;">1.0479</div>
<div style="left:1433px;top:749px;width:73px;height:30px;line-height:30px;box-sizing:border-box;font-size:18px;color:#222;text-align:right;white-space:nowrap;padding-right:4px;overflow:hidden;">28217</div>
<div style="left:1507px;top:749px;width:71px;height:30px;line-height:30px;box-sizing:border-box;font-size:18px;color:#9c0006;text-align:right;white-space:nowrap;padding-right:4px;overflow:hidden;">1.0323</div>
<div style="left:1645px;top:749px;width:93px;height:30px;line-height:30px;box-sizing:border-box;font-size:18px;color:#9c0006;text-align:right;white-space:nowrap;padding-right:4px;overflow:hidden;">39.4</div>
<div style="left:37px;top:779px;width:104px;height:30px;line-height:30px;box-sizing:border-box;font-size:18px;color:#222;text-align:center;white-space:nowrap;overflow:hidden;letter-spacing:0.9px;">2021/9/2</div>
<div style="left:142px;top:779px;width:87px;height:30px;line-height:30px;box-sizing:border-box;font-size:18px;color:#222;text-align:center;white-space:nowrap;overflow:hidden;">28,522.46</div>
<div style="left:230px;top:779px;width:87px;height:30px;line-height:30px;box-sizing:border-box;font-size:18px;color:#222;text-align:center;white-space:nowrap;overflow:hidden;">28,626.20</div>
<div style="left:318px;top:779px;width:87px;height:30px;line-height:30px;box-sizing:border-box;font-size:18px;color:#222;text-align:center;white-space:nowrap;overflow:hidden;">28,412.91</div>
<div style="left:406px;top:779px;width:93px;height:30px;line-height:30px;box-sizing:border-box;font-size:18px;color:#222;text-align:center;white-space:nowrap;overflow:hidden;">28,543.51</div>
<div style="left:500px;top:779px;width:85px;height:30px;line-height:30px;box-sizing:border-box;font-size:18px;color:#222;text-align:center;white-space:nowrap;overflow:hidden;">92.49</div>
<div style="left:586px;top:779px;width:85px;height:30px;line-height:30px;box-sizing:border-box;font-size:18px;color:#222;text-align:center;white-space:nowrap;overflow:hidden;">0.3</div>
<div style="left:672px;top:779px;width:125px;height:30px;line-height:30px;box-sizing:border-box;font-size:18px;color:#222;text-align:center;white-space:nowrap;overflow:hidden;">914,186,100</div>
<div style="left:798px;top:779px;width:76px;height:30px;line-height:30px;box-sizing:border-box;font-size:17.6px;color:#9c0006;text-align:center;white-space:nowrap;overflow:hidden;">陽</div>
<div style="left:875px;top:779px;width:61px;height:30px;line-height:30px;box-sizing:border-box;font-size:18px;color:#1a1a1a;text-align:center;white-space:nowrap;overflow:hidden;">3</div>
<div style="left:937px;top:779px;width:116px;height:30px;line-height:30px;box-sizing:border-box;font-size:18px;color:#222;text-align:right;white-space:nowrap;padding-right:4px;overflow:hidden;">754.22</div>
<div style="left:1134px;top:779px;width:75px;height:30px;line-height:30px;box-sizing:border-box;font-size:18px;color:#222;text-align:right;white-space:nowrap;padding-right:4px;overflow:hidden;">28103</div>
<div style="left:1210px;top:779px;width:74px;height:30px;line-height:30px;box-sizing:border-box;font-size:18px;color:#9c0006;text-align:right;white-space:nowrap;padding-right:4px;overflow:hidden;">1.0157</div>
<div style="left:1285px;top:779px;width:73px;height:30px;line-height:30px;box-sizing:border-box;font-size:18px;color:#222;text-align:right;white-space:nowrap;padding-right:4px;overflow:hidden;">27744</div>
<div style="left:1359px;top:779px;width:73px;height:30px;line-height:30px;box-sizing:border-box;font-size:18px;color:#9c0006;text-align:right;white-space:nowrap;padding-right:4px;overflow:hidden;">1.0288</div>
<div style="left:1433px;top:779px;width:73px;height:30px;line-height:30px;box-sizing:border-box;font-size:18px;color:#222;text-align:right;white-space:nowrap;padding-right:4px;overflow:hidden;">28215</div>
<div style="left:1507px;top:779px;width:71px;height:30px;line-height:30px;box-sizing:border-box;font-size:18px;color:#9c0006;text-align:right;white-space:nowrap;padding-right:4px;overflow:hidden;">1.0117</div>
<div style="left:1645px;top:779px;width:93px;height:30px;line-height:30px;box-sizing:border-box;font-size:18px;color:#006100;text-align:right;white-space:nowrap;padding-right:4px;overflow:hidden;">41.7</div>
<div style="left:37px;top:809px;width:104px;height:30px;line-height:30px;box-sizing:border-box;font-size:18px;color:#222;text-align:center;white-space:nowrap;overflow:hidden;letter-spacing:0.9px;">2021/9/1</div>
<div style="left:142px;top:809px;width:87px;height:30px;line-height:30px;box-sizing:border-box;font-size:18px;color:#222;text-align:center;white-space:nowrap;overflow:hidden;">28,179.04</div>
<div style="left:230px;top:809px;width:87px;height:30px;line-height:30px;box-sizing:border-box;font-size:18px;color:#222;text-align:center;white-space:nowrap;overflow:hidden;">28,457.67</div>
<div style="left:318px;top:809px;width:87px;height:30px;line-height:30px;box-sizing:border-box;font-size:18px;color:#222;text-align:center;white-space:nowrap;overflow:hidden;">28,179.04</div>
<div style="left:406px;top:809px;width:93px;height:30px;line-height:30px;box-sizing:border-box;font-size:18px;color:#222;text-align:center;white-space:nowrap;overflow:hidden;">28,451.02</div>
<div style="left:500px;top:809px;width:85px;height:30px;line-height:30px;box-sizing:border-box;font-size:18px;color:#222;text-align:center;white-space:nowrap;overflow:hidden;">361.48</div>
<div style="left:586px;top:809px;width:85px;height:30px;line-height:30px;box-sizing:border-box;font-size:18px;color:#222;text-align:center;white-space:nowrap;overflow:hidden;">1.3</div>
<div style="left:672px;top:809px;width:125px;height:30px;line-height:30px;box-sizing:border-box;font-size:18px;color:#222;text-align:center;white-space:nowrap;overflow:hidden;">954,453,600</div>
<div style="left:798px;top:809px;width:76px;height:30px;line-height:30px;box-sizing:border-box;font-size:17.6px;color:#9c0006;text-align:center;white-space:nowrap;overflow:hidden;">陽</div>
<div style="left:875px;top:809px;width:61px;height:30px;line-height:30px;box-sizing:border-box;font-size:18px;color:#1a1a1a;text-align:center;white-space:nowrap;overflow:hidden;">2</div>
<div style="left:937px;top:809px;width:116px;height:30px;line-height:30px;box-sizing:border-box;font-size:18px;color:#222;text-align:right;white-space:nowrap;padding-right:4px;overflow:hidden;">661.73</div>
<div style="left:1134px;top:809px;width:75px;height:30px;line-height:30px;box-sizing:border-box;font-size:18px;color:#222;text-align:right;white-space:nowrap;padding-right:4px;overflow:hidden;">27943</div>
<div style="left:1210px;top:809px;width:74px;height:30px;line-height:30px;box-sizing:border-box;font-size:18px;color:#9c0006;text-align:right;white-space:nowrap;padding-right:4px;overflow:hidden;">1.0182</div>
<div style="left:1285px;top:809px;width:73px;height:30px;line-height:30px;box-sizing:border-box;font-size:18px;color:#222;text-align:right;white-space:nowrap;padding-right:4px;overflow:hidden;">27706</div>
<div style="left:1359px;top:809px;width:73px;height:30px;line-height:30px;box-sizing:border-box;font-size:18px;color:#9c0006;text-align:right;white-space:nowrap;padding-right:4px;overflow:hidden;">1.0269</div>
<div style="left:1433px;top:809px;width:73px;height:30px;line-height:30px;box-sizing:border-box;font-size:18px;color:#222;text-align:right;white-space:nowrap;padding-right:4px;overflow:hidden;">28223</div>
<div style="left:1507px;top:809px;width:71px;height:30px;line-height:30px;box-sizing:border-box;font-size:18px;color:#9c0006;text-align:right;white-space:nowrap;padding-right:4px;overflow:hidden;">1.0081</div>
<div style="left:1645px;top:809px;width:93px;height:30px;line-height:30px;box-sizing:border-box;font-size:18px;color:#006100;text-align:right;white-space:nowrap;padding-right:4px;overflow:hidden;">40.9</div>
<div style="left:37px;top:839px;width:104px;height:30px;line-height:30px;box-sizing:border-box;font-size:18px;color:#222;text-align:center;white-space:nowrap;overflow:hidden;letter-spacing:0.9px;">2021/8/31</div>
<div style="left:142px;top:839px;width:87px;height:30px;line-height:30px;box-sizing:border-box;font-size:18px;color:#222;text-align:center;white-space:nowrap;overflow:hidden;">27,690.77</div>
<div style="left:230px;top:839px;width:87px;height:30px;line-height:30px;box-sizing:border-box;font-size:18px;color:#222;text-align:center;white-space:nowrap;overflow:hidden;">28,158.95</div>
<div style="left:318px;top:839px;width:87px;height:30px;line-height:30px;box-sizing:border-box;font-size:18px;color:#222;text-align:center;white-space:nowrap;overflow:hidden;">27,602.21</div>
<div style="left:406px;top:839px;width:93px;height:30px;line-height:30px;box-sizing:border-box;font-size:18px;color:#222;text-align:center;white-space:nowrap;overflow:hidden;">28,089.54</div>
<div style="left:500px;top:839px;width:85px;height:30px;line-height:30px;box-sizing:border-box;font-size:18px;color:#222;text-align:center;white-space:nowrap;overflow:hidden;">300.25</div>
<div style="left:586px;top:839px;width:85px;height:30px;line-height:30px;box-sizing:border-box;font-size:18px;color:#222;text-align:center;white-space:nowrap;overflow:hidden;">1.1</div>
<div style="left:672px;top:839px;width:125px;height:30px;line-height:30px;box-sizing:border-box;font-size:18px;color:#222;text-align:center;white-space:nowrap;overflow:hidden;">944,024,400</div>
<div style="left:798px;top:839px;width:76px;height:30px;line-height:30px;box-sizing:border-box;font-size:17.6px;color:#9c0006;text-align:center;white-space:nowrap;overflow:hidden;">陽</div>
<div style="left:875px;top:839px;width:61px;height:30px;line-height:30px;box-sizing:border-box;font-size:18px;color:#1a1a1a;text-align:center;white-space:nowrap;overflow:hidden;">1</div>
<div style="left:937px;top:839px;width:116px;height:30px;line-height:30px;box-sizing:border-box;font-size:18px;color:#222;text-align:right;white-space:nowrap;padding-right:4px;overflow:hidden;">300.25</div>
<div style="left:1134px;top:839px;width:75px;height:30px;line-height:30px;box-sizing:border-box;font-size:18px;color:#222;text-align:right;white-space:nowrap;padding-right:4px;overflow:hidden;">27797</div>
<div style="left:1210px;top:839px;width:74px;height:30px;line-height:30px;box-sizing:border-box;font-size:18px;color:#9c0006;text-align:right;white-space:nowrap;padding-right:4px;overflow:hidden;">1.0105</div>
<div style="left:1285px;top:839px;width:73px;height:30px;line-height:30px;box-sizing:border-box;font-size:18px;color:#222;text-align:right;white-space:nowrap;padding-right:4px;overflow:hidden;">27686</div>
<div style="left:1359px;top:839px;width:73px;height:30px;line-height:30px;box-sizing:border-box;font-size:18px;color:#9c0006;text-align:right;white-space:nowrap;padding-right:4px;overflow:hidden;">1.0146</div>
<div style="left:1433px;top:839px;width:73px;height:30px;line-height:30px;box-sizing:border-box;font-size:18px;color:#222;text-align:right;white-space:nowrap;padding-right:4px;overflow:hidden;">28231</div>
<div style="left:1507px;top:839px;width:71px;height:30px;line-height:30px;box-sizing:border-box;font-size:18px;color:#006100;text-align:right;white-space:nowrap;padding-right:4px;overflow:hidden;">0.995</div>
<div style="left:1645px;top:839px;width:93px;height:30px;line-height:30px;box-sizing:border-box;font-size:18px;color:#9c0006;text-align:right;white-space:nowrap;padding-right:4px;overflow:hidden;">39.5</div>
<div style="left:37px;top:869px;width:104px;height:30px;line-height:30px;box-sizing:border-box;font-size:18px;color:#222;text-align:center;white-space:nowrap;overflow:hidden;letter-spacing:0.9px;">2021/8/30</div>
<div style="left:142px;top:869px;width:87px;height:30px;line-height:30px;box-sizing:border-box;font-size:18px;color:#222;text-align:center;white-space:nowrap;overflow:hidden;">27,867.60</div>
<div style="left:230px;top:869px;width:87px;height:30px;line-height:30px;box-sizing:border-box;font-size:18px;color:#222;text-align:center;white-space:nowrap;overflow:hidden;">27,921.55</div>
<div style="left:318px;top:869px;width:87px;height:30px;line-height:30px;box-sizing:border-box;font-size:18px;color:#222;text-align:center;white-space:nowrap;overflow:hidden;">27,656.63</div>
<div style="left:406px;top:869px;width:93px;height:30px;line-height:30px;box-sizing:border-box;font-size:18px;color:#222;text-align:center;white-space:nowrap;overflow:hidden;">27,789.29</div>
<div style="left:500px;top:869px;width:85px;height:30px;line-height:30px;box-sizing:border-box;font-size:18px;color:#222;text-align:center;white-space:nowrap;overflow:hidden;">148.15</div>
<div style="left:586px;top:869px;width:85px;height:30px;line-height:30px;box-sizing:border-box;font-size:18px;color:#222;text-align:center;white-space:nowrap;overflow:hidden;">0.5</div>
<div style="left:672px;top:869px;width:125px;height:30px;line-height:30px;box-sizing:border-box;font-size:18px;color:#222;text-align:center;white-space:nowrap;overflow:hidden;">802,632,900</div>
<div style="left:798px;top:869px;width:76px;height:30px;line-height:30px;box-sizing:border-box;font-size:17.6px;color:#006100;text-align:center;white-space:nowrap;overflow:hidden;">陰</div>
<div style="left:875px;top:869px;width:61px;height:30px;line-height:30px;box-sizing:border-box;font-size:18px;color:#222;text-align:center;white-space:nowrap;overflow:hidden;">1</div>
<div style="left:937px;top:869px;width:116px;height:30px;line-height:30px;box-sizing:border-box;font-size:18px;color:#222;text-align:right;white-space:nowrap;padding-right:4px;overflow:hidden;">148.15</div>
<div style="left:1134px;top:869px;width:75px;height:30px;line-height:30px;box-sizing:border-box;font-size:18px;color:#222;text-align:right;white-space:nowrap;padding-right:4px;overflow:hidden;">27726</div>
<div style="left:1210px;top:869px;width:74px;height:30px;line-height:30px;box-sizing:border-box;font-size:18px;color:#9c0006;text-align:right;white-space:nowrap;padding-right:4px;overflow:hidden;">1.0023</div>
<div style="left:1285px;top:869px;width:73px;height:30px;line-height:30px;box-sizing:border-box;font-size:18px;color:#222;text-align:right;white-space:nowrap;padding-right:4px;overflow:hidden;">27676</div>
<div style="left:1359px;top:869px;width:73px;height:30px;line-height:30px;box-sizing:border-box;font-size:18px;color:#9c0006;text-align:right;white-space:nowrap;padding-right:4px;overflow:hidden;">1.0041</div>
<div style="left:1433px;top:869px;width:73px;height:30px;line-height:30px;box-sizing:border-box;font-size:18px;color:#222;text-align:right;white-space:nowrap;padding-right:4px;overflow:hidden;">28247</div>
<div style="left:1507px;top:869px;width:71px;height:30px;line-height:30px;box-sizing:border-box;font-size:18px;color:#006100;text-align:right;white-space:nowrap;padding-right:4px;overflow:hidden;">0.9838</div>
<div style="left:1645px;top:869px;width:93px;height:30px;line-height:30px;box-sizing:border-box;font-size:18px;color:#006100;text-align:right;white-space:nowrap;padding-right:4px;overflow:hidden;">44.8</div>
<div style="left:37px;top:899px;width:104px;height:30px;line-height:30px;box-sizing:border-box;font-size:18px;color:#222;text-align:center;white-space:nowrap;overflow:hidden;letter-spacing:0.9px;">2021/8/27</div>
<div style="left:142px;top:899px;width:87px;height:30px;line-height:30px;box-sizing:border-box;font-size:18px;color:#222;text-align:center;white-space:nowrap;overflow:hidden;">27,581.24</div>
<div style="left:230px;top:899px;width:87px;height:30px;line-height:30px;box-sizing:border-box;font-size:18px;color:#222;text-align:center;white-space:nowrap;overflow:hidden;">27,670.66</div>
<div style="left:318px;top:899px;width:87px;height:30px;line-height:30px;box-sizing:border-box;font-size:18px;color:#222;text-align:center;white-space:nowrap;overflow:hidden;">27,481.23</div>
<div style="left:406px;top:899px;width:93px;height:30px;line-height:30px;box-sizing:border-box;font-size:18px;color:#222;text-align:center;white-space:nowrap;overflow:hidden;">27,641.14</div>
<div style="left:500px;top:899px;width:85px;height:30px;line-height:30px;box-sizing:border-box;font-size:18px;color:#222;text-align:center;white-space:nowrap;overflow:hidden;">-101.15</div>
<div style="left:586px;top:899px;width:85px;height:30px;line-height:30px;box-sizing:border-box;font-size:18px;color:#222;text-align:center;white-space:nowrap;overflow:hidden;">-0.4</div>
<div style="left:672px;top:899px;width:125px;height:30px;line-height:30px;box-sizing:border-box;font-size:18px;color:#222;text-align:center;white-space:nowrap;overflow:hidden;">763,483,100</div>
<div style="left:798px;top:899px;width:76px;height:30px;line-height:30px;box-sizing:border-box;font-size:17.6px;color:#9c0006;text-align:center;white-space:nowrap;overflow:hidden;">陽</div>
<div style="left:875px;top:899px;width:61px;height:30px;line-height:30px;box-sizing:border-box;font-size:18px;color:#222;text-align:center;white-space:nowrap;overflow:hidden;">1</div>
<div style="left:937px;top:899px;width:116px;height:30px;line-height:30px;box-sizing:border-box;font-size:18px;color:#222;text-align:right;white-space:nowrap;padding-right:4px;overflow:hidden;">-101.15</div>
<div style="left:1134px;top:899px;width:75px;height:30px;line-height:30px;box-sizing:border-box;font-size:18px;color:#222;text-align:right;white-space:nowrap;padding-right:4px;overflow:hidden;">27667</div>
<div style="left:1210px;top:899px;width:74px;height:30px;line-height:30px;box-sizing:border-box;font-size:18px;color:#006100;text-align:right;white-space:nowrap;padding-right:4px;overflow:hidden;">0.9991</div>
<div style="left:1285px;top:899px;width:73px;height:30px;line-height:30px;box-sizing:border-box;font-size:18px;color:#222;text-align:right;white-space:nowrap;padding-right:4px;overflow:hidden;">27667</div>
<div style="left:1359px;top:899px;width:73px;height:30px;line-height:30px;box-sizing:border-box;font-size:18px;color:#006100;text-align:right;white-space:nowrap;padding-right:4px;overflow:hidden;">0.9991</div>
<div style="left:1433px;top:899px;width:73px;height:30px;line-height:30px;box-sizing:border-box;font-size:18px;color:#222;text-align:right;white-space:nowrap;padding-right:4px;overflow:hidden;">28266</div>
<div style="left:1507px;top:899px;width:71px;height:30px;line-height:30px;box-sizing:border-box;font-size:18px;color:#006100;text-align:right;white-space:nowrap;padding-right:4px;overflow:hidden;">0.9779</div>
<div style="left:1645px;top:899px;width:93px;height:30px;line-height:30px;box-sizing:border-box;font-size:18px;color:#006100;text-align:right;white-space:nowrap;padding-right:4px;overflow:hidden;">43.6</div>
<div style="left:37px;top:929px;width:104px;height:30px;line-height:30px;box-sizing:border-box;font-size:18px;color:#222;text-align:center;white-space:nowrap;overflow:hidden;letter-spacing:0.9px;">2021/8/26</div>
<div style="left:142px;top:929px;width:87px;height:30px;line-height:30px;box-sizing:border-box;font-size:18px;color:#222;text-align:center;white-space:nowrap;overflow:hidden;">27,793.63</div>
<div style="left:230px;top:929px;width:87px;height:30px;line-height:30px;box-sizing:border-box;font-size:18px;color:#222;text-align:center;white-space:nowrap;overflow:hidden;">27,828.28</div>
<div style="left:318px;top:929px;width:87px;height:30px;line-height:30px;box-sizing:border-box;font-size:18px;color:#222;text-align:center;white-space:nowrap;overflow:hidden;">27,684.50</div>
<div style="left:406px;top:929px;width:93px;height:30px;line-height:30px;box-sizing:border-box;font-size:18px;color:#222;text-align:center;white-space:nowrap;overflow:hidden;">27,742.29</div>
<div style="left:500px;top:929px;width:85px;height:30px;line-height:30px;box-sizing:border-box;font-size:18px;color:#222;text-align:center;white-space:nowrap;overflow:hidden;">17.49</div>
<div style="left:586px;top:929px;width:85px;height:30px;line-height:30px;box-sizing:border-box;font-size:18px;color:#222;text-align:center;white-space:nowrap;overflow:hidden;">0.1</div>
<div style="left:672px;top:929px;width:125px;height:30px;line-height:30px;box-sizing:border-box;font-size:18px;color:#222;text-align:center;white-space:nowrap;overflow:hidden;">733,452,500</div>
<div style="left:798px;top:929px;width:76px;height:30px;line-height:30px;box-sizing:border-box;font-size:17.6px;color:#006100;text-align:center;white-space:nowrap;overflow:hidden;">陰</div>
<div style="left:875px;top:929px;width:61px;height:30px;line-height:30px;box-sizing:border-box;font-size:18px;color:#222;text-align:center;white-space:nowrap;overflow:hidden;">2</div>
<div style="left:937px;top:929px;width:116px;height:30px;line-height:30px;box-sizing:border-box;font-size:18px;color:#222;text-align:right;white-space:nowrap;padding-right:4px;overflow:hidden;">10.19</div>
<div style="left:1134px;top:929px;width:75px;height:30px;line-height:30px;box-sizing:border-box;font-size:18px;color:#222;text-align:right;white-space:nowrap;padding-right:4px;overflow:hidden;">27541</div>
<div style="left:1210px;top:929px;width:74px;height:30px;line-height:30px;box-sizing:border-box;font-size:18px;color:#9c0006;text-align:right;white-space:nowrap;padding-right:4px;overflow:hidden;">1.0073</div>
<div style="left:1285px;top:929px;width:73px;height:30px;line-height:30px;box-sizing:border-box;font-size:18px;color:#222;text-align:right;white-space:nowrap;padding-right:4px;overflow:hidden;">27656</div>
<div style="left:1359px;top:929px;width:73px;height:30px;line-height:30px;box-sizing:border-box;font-size:18px;color:#9c0006;text-align:right;white-space:nowrap;padding-right:4px;overflow:hidden;">1.0031</div>
<div style="left:1433px;top:929px;width:73px;height:30px;line-height:30px;box-sizing:border-box;font-size:18px;color:#222;text-align:right;white-space:nowrap;padding-right:4px;overflow:hidden;">28286</div>
<div style="left:1507px;top:929px;width:71px;height:30px;line-height:30px;box-sizing:border-box;font-size:18px;color:#006100;text-align:right;white-space:nowrap;padding-right:4px;overflow:hidden;">0.9808</div>
<div style="left:1579px;top:929px;width:65px;height:30px;line-height:30px;box-sizing:border-box;font-size:17.6px;color:#1a1a1a;text-align:left;white-space:nowrap;padding-left:4px;overflow:hidden;">下降</div>
<div style="left:1645px;top:929px;width:93px;height:30px;line-height:30px;box-sizing:border-box;font-size:18px;color:#006100;text-align:right;white-space:nowrap;padding-right:4px;overflow:hidden;">43.8</div>
<div style="left:37px;top:959px;width:104px;height:30px;line-height:30px;box-sizing:border-box;font-size:18px;color:#222;text-align:center;white-space:nowrap;overflow:hidden;letter-spacing:0.9px;">2021/8/25</div>
<div style="left:142px;top:959px;width:87px;height:30px;line-height:30px;box-sizing:border-box;font-size:18px;color:#222;text-align:center;white-space:nowrap;overflow:hidden;">27,768.13</div>
<div style="left:230px;top:959px;width:87px;height:30px;line-height:30px;box-sizing:border-box;font-size:18px;color:#222;text-align:center;white-space:nowrap;overflow:hidden;">27,897.72</div>
<div style="left:318px;top:959px;width:87px;height:30px;line-height:30px;box-sizing:border-box;font-size:18px;color:#222;text-align:center;white-space:nowrap;overflow:hidden;">27,684.05</div>
<div style="left:406px;top:959px;width:93px;height:30px;line-height:30px;box-sizing:border-box;font-size:18px;color:#222;text-align:center;white-space:nowrap;overflow:hidden;">27,724.80</div>
<div style="left:500px;top:959px;width:85px;height:30px;line-height:30px;box-sizing:border-box;font-size:18px;color:#222;text-align:center;white-space:nowrap;overflow:hidden;">-7.3</div>
<div style="left:586px;top:959px;width:85px;height:30px;line-height:30px;box-sizing:border-box;font-size:18px;color:#222;text-align:center;white-space:nowrap;overflow:hidden;">0</div>
<div style="left:672px;top:959px;width:125px;height:30px;line-height:30px;box-sizing:border-box;font-size:18px;color:#222;text-align:center;white-space:nowrap;overflow:hidden;">807,829,600</div>
<div style="left:798px;top:959px;width:76px;height:30px;line-height:30px;box-sizing:border-box;font-size:17.6px;color:#006100;text-align:center;white-space:nowrap;overflow:hidden;">陰</div>
<div style="left:875px;top:959px;width:61px;height:30px;line-height:30px;box-sizing:border-box;font-size:18px;color:#222;text-align:center;white-space:nowrap;overflow:hidden;">1</div>
<div style="left:937px;top:959px;width:116px;height:30px;line-height:30px;box-sizing:border-box;font-size:18px;color:#222;text-align:right;white-space:nowrap;padding-right:4px;overflow:hidden;">-7.3</div>
<div style="left:1134px;top:959px;width:75px;height:30px;line-height:30px;box-sizing:border-box;font-size:18px;color:#222;text-align:right;white-space:nowrap;padding-right:4px;overflow:hidden;">27449</div>
<div style="left:1210px;top:959px;width:74px;height:30px;line-height:30px;box-sizing:border-box;font-size:18px;color:#9c0006;text-align:right;white-space:nowrap;padding-right:4px;overflow:hidden;">1.01</div>
<div style="left:1285px;top:959px;width:73px;height:30px;line-height:30px;box-sizing:border-box;font-size:18px;color:#222;text-align:right;white-space:nowrap;padding-right:4px;overflow:hidden;">27653</div>
<div style="left:1359px;top:959px;width:73px;height:30px;line-height:30px;box-sizing:border-box;font-size:18px;color:#9c0006;text-align:right;white-space:nowrap;padding-right:4px;overflow:hidden;">1.0026</div>
<div style="left:1433px;top:959px;width:73px;height:30px;line-height:30px;box-sizing:border-box;font-size:18px;color:#222;text-align:right;white-space:nowrap;padding-right:4px;overflow:hidden;">28304</div>
<div style="left:1507px;top:959px;width:71px;height:30px;line-height:30px;box-sizing:border-box;font-size:18px;color:#006100;text-align:right;white-space:nowrap;padding-right:4px;overflow:hidden;">0.9795</div>
<div style="left:1579px;top:959px;width:65px;height:30px;line-height:30px;box-sizing:border-box;font-size:17.6px;color:#1a1a1a;text-align:left;white-space:nowrap;padding-left:4px;overflow:hidden;">下降</div>
<div style="left:1645px;top:959px;width:93px;height:30px;line-height:30px;box-sizing:border-box;font-size:18px;color:#006100;text-align:right;white-space:nowrap;padding-right:4px;overflow:hidden;">43.8</div>
<div style="left:1643px;top:417px;width:97px;height:33px;box-sizing:border-box;border:2px solid #217346;box-shadow:inset 0 0 0 1px rgba(255,255,255,0.75);"></div>
<div style="left:1735px;top:445px;width:5px;height:5px;background:#217346;border:1px solid #fff;box-sizing:content-box;"></div>
</div>
<div style="left:0px;top:239px;width:1920px;height:90px;background:#e6e6e6;"></div>
<div style="left:1645px;top:299px;width:93px;height:29px;background:#d2d2d2;"></div>
<div style="left:37px;top:299px;width:104px;height:29px;line-height:29px;font-size:19.5px;color:#3b3b3b;text-align:center;">A</div>
<div style="left:142px;top:299px;width:87px;height:29px;line-height:29px;font-size:19.5px;color:#3b3b3b;text-align:center;">B</div>
<div style="left:230px;top:299px;width:87px;height:29px;line-height:29px;font-size:19.5px;color:#3b3b3b;text-align:center;">C</div>
<div style="left:318px;top:299px;width:87px;height:29px;line-height:29px;font-size:19.5px;color:#3b3b3b;text-align:center;">D</div>
<div style="left:406px;top:299px;width:93px;height:29px;line-height:29px;font-size:19.5px;color:#3b3b3b;text-align:center;">E</div>
<div style="left:500px;top:299px;width:85px;height:29px;line-height:29px;font-size:19.5px;color:#3b3b3b;text-align:center;">F</div>
<div style="left:586px;top:299px;width:85px;height:29px;line-height:29px;font-size:19.5px;color:#3b3b3b;text-align:center;">G</div>
<div style="left:672px;top:299px;width:125px;height:29px;line-height:29px;font-size:19.5px;color:#3b3b3b;text-align:center;">H</div>
<div style="left:798px;top:299px;width:76px;height:29px;line-height:29px;font-size:19.5px;color:#3b3b3b;text-align:center;">I</div>
<div style="left:875px;top:299px;width:61px;height:29px;line-height:29px;font-size:19.5px;color:#3b3b3b;text-align:center;">J</div>
<div style="left:937px;top:299px;width:116px;height:29px;line-height:29px;font-size:19.5px;color:#3b3b3b;text-align:center;">K</div>
<div style="left:1054px;top:299px;width:79px;height:29px;line-height:29px;font-size:19.5px;color:#3b3b3b;text-align:center;">L</div>
<div style="left:1134px;top:299px;width:75px;height:29px;line-height:29px;font-size:19.5px;color:#3b3b3b;text-align:center;">M</div>
<div style="left:1210px;top:299px;width:74px;height:29px;line-height:29px;font-size:19.5px;color:#3b3b3b;text-align:center;">N</div>
<div style="left:1285px;top:299px;width:73px;height:29px;line-height:29px;font-size:19.5px;color:#3b3b3b;text-align:center;">O</div>
<div style="left:1359px;top:299px;width:73px;height:29px;line-height:29px;font-size:19.5px;color:#3b3b3b;text-align:center;">P</div>
<div style="left:1433px;top:299px;width:73px;height:29px;line-height:29px;font-size:19.5px;color:#3b3b3b;text-align:center;">Q</div>
<div style="left:1507px;top:299px;width:71px;height:29px;line-height:29px;font-size:19.5px;color:#3b3b3b;text-align:center;">R</div>
<div style="left:1579px;top:299px;width:65px;height:29px;line-height:29px;font-size:19.5px;color:#3b3b3b;text-align:center;">S</div>
<div style="left:1645px;top:299px;width:93px;height:29px;line-height:29px;font-size:19.5px;color:#217346;text-align:center;">T</div>
<div style="left:1739px;top:299px;width:87px;height:29px;line-height:29px;font-size:19.5px;color:#3b3b3b;text-align:center;">U</div>
<div style="left:1827px;top:299px;width:88px;height:29px;line-height:29px;font-size:19.5px;color:#3b3b3b;text-align:center;">V</div>
<div style="left:36px;top:299px;width:1px;height:29px;background:#b1b1b1;"></div>
<div style="left:141px;top:299px;width:1px;height:29px;background:#b1b1b1;"></div>
<div style="left:229px;top:299px;width:1px;height:29px;background:#b1b1b1;"></div>
<div style="left:317px;top:299px;width:1px;height:29px;background:#b1b1b1;"></div>
<div style="left:405px;top:299px;width:1px;height:29px;background:#b1b1b1;"></div>
<div style="left:499px;top:299px;width:1px;height:29px;background:#b1b1b1;"></div>
<div style="left:585px;top:299px;width:1px;height:29px;background:#b1b1b1;"></div>
<div style="left:671px;top:299px;width:1px;height:29px;background:#b1b1b1;"></div>
<div style="left:797px;top:299px;width:1px;height:29px;background:#b1b1b1;"></div>
<div style="left:874px;top:299px;width:1px;height:29px;background:#b1b1b1;"></div>
<div style="left:936px;top:299px;width:1px;height:29px;background:#b1b1b1;"></div>
<div style="left:1053px;top:299px;width:1px;height:29px;background:#b1b1b1;"></div>
<div style="left:1133px;top:299px;width:1px;height:29px;background:#b1b1b1;"></div>
<div style="left:1209px;top:299px;width:1px;height:29px;background:#b1b1b1;"></div>
<div style="left:1284px;top:299px;width:1px;height:29px;background:#b1b1b1;"></div>
<div style="left:1358px;top:299px;width:1px;height:29px;background:#b1b1b1;"></div>
<div style="left:1432px;top:299px;width:1px;height:29px;background:#b1b1b1;"></div>
<div style="left:1506px;top:299px;width:1px;height:29px;background:#b1b1b1;"></div>
<div style="left:1578px;top:299px;width:1px;height:29px;background:#b1b1b1;"></div>
<div style="left:1644px;top:299px;width:1px;height:29px;background:#b1b1b1;"></div>
<div style="left:1738px;top:299px;width:1px;height:29px;background:#b1b1b1;"></div>
<div style="left:1826px;top:299px;width:1px;height:29px;background:#b1b1b1;"></div>
<div style="left:0px;top:328px;width:1895px;height:1px;background:#9b9b9b;"></div>
<div style="left:1644px;top:327px;width:95px;height:2px;background:#217346;"></div>
<svg style="left:10px;top:302px;" width="26" height="26" viewBox="0 0 26 26"><path d="M23 3V23H3Z" fill="#b5b5b5"/></svg>
<div style="left:0px;top:329px;width:36px;height:646px;background:#e6e6e6;"></div>
<div style="left:0px;top:419px;width:36px;height:29px;background:#d2d2d2;"></div>
<div style="left:0;top:329px;width:37px;height:646px;overflow:hidden;">
<div style="left:0;top:0px;width:36px;height:30px;line-height:31px;font-size:18px;color:#3b3b3b;text-align:center;">1</div>
<div style="left:0px;top:29px;width:36px;height:1px;background:#b1b1b1;"></div>
<div style="left:0;top:30px;width:36px;height:30px;line-height:31px;font-size:18px;color:#3b3b3b;text-align:center;">2</div>
<div style="left:0px;top:59px;width:36px;height:1px;background:#b1b1b1;"></div>
<div style="left:0;top:60px;width:36px;height:30px;line-height:31px;font-size:18px;color:#3b3b3b;text-align:center;">3</div>
<div style="left:0px;top:89px;width:36px;height:1px;background:#b1b1b1;"></div>
<div style="left:0;top:90px;width:36px;height:30px;line-height:31px;font-size:18px;color:#217346;text-align:center;">4</div>
<div style="left:0px;top:119px;width:36px;height:1px;background:#b1b1b1;"></div>
<div style="left:0;top:120px;width:36px;height:30px;line-height:31px;font-size:18px;color:#3b3b3b;text-align:center;">5</div>
<div style="left:0px;top:149px;width:36px;height:1px;background:#b1b1b1;"></div>
<div style="left:0;top:150px;width:36px;height:30px;line-height:31px;font-size:18px;color:#3b3b3b;text-align:center;">6</div>
<div style="left:0px;top:179px;width:36px;height:1px;background:#b1b1b1;"></div>
<div style="left:0;top:180px;width:36px;height:30px;line-height:31px;font-size:18px;color:#3b3b3b;text-align:center;">7</div>
<div style="left:0px;top:209px;width:36px;height:1px;background:#b1b1b1;"></div>
<div style="left:0;top:210px;width:36px;height:30px;line-height:31px;font-size:18px;color:#3b3b3b;text-align:center;">8</div>
<div style="left:0px;top:239px;width:36px;height:1px;background:#b1b1b1;"></div>
<div style="left:0;top:240px;width:36px;height:30px;line-height:31px;font-size:18px;color:#3b3b3b;text-align:center;">9</div>
<div style="left:0px;top:269px;width:36px;height:1px;background:#b1b1b1;"></div>
<div style="left:0;top:270px;width:36px;height:30px;line-height:31px;font-size:18px;color:#3b3b3b;text-align:center;">10</div>
<div style="left:0px;top:299px;width:36px;height:1px;background:#b1b1b1;"></div>
<div style="left:0;top:300px;width:36px;height:30px;line-height:31px;font-size:18px;color:#3b3b3b;text-align:center;">11</div>
<div style="left:0px;top:329px;width:36px;height:1px;background:#b1b1b1;"></div>
<div style="left:0;top:330px;width:36px;height:30px;line-height:31px;font-size:18px;color:#3b3b3b;text-align:center;">12</div>
<div style="left:0px;top:359px;width:36px;height:1px;background:#b1b1b1;"></div>
<div style="left:0;top:360px;width:36px;height:30px;line-height:31px;font-size:18px;color:#3b3b3b;text-align:center;">13</div>
<div style="left:0px;top:389px;width:36px;height:1px;background:#b1b1b1;"></div>
<div style="left:0;top:390px;width:36px;height:30px;line-height:31px;font-size:18px;color:#3b3b3b;text-align:center;">14</div>
<div style="left:0px;top:419px;width:36px;height:1px;background:#b1b1b1;"></div>
<div style="left:0;top:420px;width:36px;height:30px;line-height:31px;font-size:18px;color:#3b3b3b;text-align:center;">15</div>
<div style="left:0px;top:449px;width:36px;height:1px;background:#b1b1b1;"></div>
<div style="left:0;top:450px;width:36px;height:30px;line-height:31px;font-size:18px;color:#3b3b3b;text-align:center;">16</div>
<div style="left:0px;top:479px;width:36px;height:1px;background:#b1b1b1;"></div>
<div style="left:0;top:480px;width:36px;height:30px;line-height:31px;font-size:18px;color:#3b3b3b;text-align:center;">17</div>
<div style="left:0px;top:509px;width:36px;height:1px;background:#b1b1b1;"></div>
<div style="left:0;top:510px;width:36px;height:30px;line-height:31px;font-size:18px;color:#3b3b3b;text-align:center;">18</div>
<div style="left:0px;top:539px;width:36px;height:1px;background:#b1b1b1;"></div>
<div style="left:0;top:540px;width:36px;height:30px;line-height:31px;font-size:18px;color:#3b3b3b;text-align:center;">19</div>
<div style="left:0px;top:569px;width:36px;height:1px;background:#b1b1b1;"></div>
<div style="left:0;top:570px;width:36px;height:30px;line-height:31px;font-size:18px;color:#3b3b3b;text-align:center;">20</div>
<div style="left:0px;top:599px;width:36px;height:1px;background:#b1b1b1;"></div>
<div style="left:0;top:600px;width:36px;height:30px;line-height:31px;font-size:18px;color:#3b3b3b;text-align:center;">21</div>
<div style="left:0px;top:629px;width:36px;height:1px;background:#b1b1b1;"></div>
<div style="left:0;top:630px;width:36px;height:30px;line-height:31px;font-size:18px;color:#3b3b3b;text-align:center;">22</div>
<div style="left:0px;top:659px;width:36px;height:1px;background:#b1b1b1;"></div>
</div>
<div style="left:36px;top:329px;width:1px;height:646px;background:#9b9b9b;"></div>
<div style="left:35px;top:418px;width:2px;height:31px;background:#217346;"></div>
<div style="left:1894px;top:329px;width:1px;height:647px;background:#8c8c8c;"></div>
<div style="left:0px;top:975px;width:1895px;height:1px;background:#8c8c8c;"></div>
<div style="left:1895px;top:299px;width:25px;height:705px;background:#e6e6e6;"></div>
<div style="left:1898px;top:301px;width:19px;height:675px;background:#d9d9d9;"></div>
<div style="left:1898px;top:301px;width:19px;height:19px;background:#fff;box-sizing:border-box;border:1px solid #ababab;"></div>
<svg style="left:1898px;top:301px;" width="19" height="19" viewBox="0 0 19 19"><path d="M5 12L9.5 6.5L14 12Z" fill="#606060"/></svg>
<div style="left:1898px;top:321px;width:19px;height:32px;background:#fff;box-sizing:border-box;border:1px solid #ababab;"></div>
<div style="left:1898px;top:957px;width:19px;height:19px;background:#fff;box-sizing:border-box;border:1px solid #ababab;"></div>
<svg style="left:1898px;top:957px;" width="19" height="19" viewBox="0 0 19 19"><path d="M5 7.5L9.5 13L14 7.5Z" fill="#606060"/></svg>
</main>
<header id="titlebar" aria-label="タイトル バー">
<div style="left:0px;top:0px;width:1920px;height:43px;background:#217346;"></div>
<div style="left:1290px;top:0;width:630px;height:43px;overflow:hidden;"><div style="left:25px;top:-40px;width:200px;height:130px;border-radius:50%;background:#1f6c42;"></div><div style="left:120px;top:-30px;width:300px;height:110px;border-radius:45%;background:#1f6c42;"></div><div style="left:330px;top:10px;width:130px;height:80px;border-radius:50%;background:#1f6c42;"></div><div style="left:480px;top:18px;width:110px;height:70px;border-radius:50%;background:#1f6d42;"></div><div style="left:530px;top:-40px;width:80px;height:62px;border-radius:50%;background:#1f6d42;"></div></div>
<svg style="left:25px;top:12px;" width="22" height="22" viewBox="0 0 22 22"><path d="M2.5 17.5V2.5H17.5V8" fill="none" stroke="#fff" stroke-width="1.7"/><path d="M2.5 17.5H6" fill="none" stroke="#fff" stroke-width="1.7"/><path d="M8.2 12.5A5.2 5.2 0 0 1 17.6 10.2M18.3 14A5.2 5.2 0 0 1 8.9 16.4" fill="none" stroke="#fff" stroke-width="1.8"/><path d="M18.6 7V11H14.6" fill="none" stroke="#fff" stroke-width="1.6"/><path d="M7.9 19.6V15.6H11.9" fill="none" stroke="#fff" stroke-width="1.6"/></svg>
<svg style="left:61px;top:13px;" width="22" height="20" viewBox="0 0 22 20"><path d="M7 3L2.5 7.5L7 12M3 7.5H12.5A5 5 0 0 1 12.5 17.5H10.5" fill="none" stroke="#66a582" stroke-width="2.4"/></svg>
<svg style="left:86px;top:15px;" width="12" height="12" viewBox="0 0 12 12"><path d="M2.8 4.4 L6 7.6 L9.2 4.4" fill="none" stroke="#5e9a77" stroke-width="1.2"/></svg>
<svg style="left:107px;top:13px;" width="22" height="20" viewBox="0 0 22 20"><path d="M15 3L19.5 7.5L15 12M19 7.5H9.5A5 5 0 0 0 9.5 17.5H11.5" fill="none" stroke="#66a582" stroke-width="2.4"/></svg>
<svg style="left:133px;top:15px;" width="12" height="12" viewBox="0 0 12 12"><path d="M2.8 4.4 L6 7.6 L9.2 4.4" fill="none" stroke="#5e9a77" stroke-width="1.2"/></svg>
<svg style="left:160px;top:16px;" width="12" height="12" viewBox="0 0 12 12"><path d="M3 3.8H8.6" stroke="#fff" stroke-width="1.2"/><path d="M3 6.2H8.6L5.8 9.4Z" fill="#fff"/></svg>
<div style="left:891px;top:8.5px;height:22px;line-height:22px;font-size:15.5px;color:#fff;white-space:pre;transform-origin:0 50%;transform:scaleX(1.060);">20210927  -  Excel</div>
<div style="left:1380px;top:10px;height:22px;line-height:22px;font-size:15.5px;color:#fff;white-space:pre;transform-origin:0 50%;transform:scaleX(1.063);">dryyourtearswithlove1@gmail.com</div>
<div style="left:1646px;top:6px;width:30px;height:30px;background:#d2d0ce;border-radius:50%;"></div>
<div style="left:1656.30578125px;top:12.5px;height:18px;line-height:18px;font-size:13px;color:#605e5c;white-space:pre;">D</div>
<svg style="left:1709px;top:11px;" width="20" height="20" viewBox="0 0 20 20"><rect x="1.5" y="3.5" width="16" height="12.5" fill="none" stroke="#fff" stroke-width="1.3"/><path d="M1.5 6.8H17.5" stroke="#fff" stroke-width="1.3"/><path d="M9.5 14V8.8M6.8 11.2L9.5 8.6L12.2 11.2" fill="none" stroke="#fff" stroke-width="1.3"/></svg>
<div style="left:1770px;top:20px;width:14px;height:1.4px;background:#fff;"></div>
<svg style="left:1823px;top:11px;" width="20" height="20" viewBox="0 0 20 20"><rect x="3.5" y="6.5" width="9.5" height="9.5" rx="2" fill="none" stroke="#fff" stroke-width="1.4"/><path d="M6.2 6.2V5.5A2 2 0 0 1 8.2 3.8H14.2A2 2 0 0 1 16.2 5.8V11.8A2 2 0 0 1 14.2 13.6H13.3" fill="none" stroke="#fff" stroke-width="1.4"/></svg>
<svg style="left:1883px;top:13px;" width="16" height="16" viewBox="0 0 16 16"><path d="M2 2L14 14M14 2L2 14" stroke="#fff" stroke-width="1.4"/></svg>
</header>
<nav id="ribbon" aria-label="リボン">
<div style="left:0px;top:43px;width:1920px;height:159px;background:#f3f2f1;"></div>
<div style="left:17px;top:50.5px;height:23px;line-height:23px;font-size:16.5px;color:#3b3a39;white-space:pre;transform-origin:0 50%;transform:scaleX(0.691);">ファイル</div>
<div style="left:97px;top:50.5px;height:23px;line-height:23px;font-size:16.5px;color:#252423;white-space:pre;font-weight:bold;transform-origin:0 50%;transform:scaleX(0.863);">ホーム</div>
<div style="left:167px;top:50.5px;height:23px;line-height:23px;font-size:16.5px;color:#3b3a39;white-space:pre;transform-origin:0 50%;transform:scaleX(0.971);">挿入</div>
<div style="left:230px;top:50.5px;height:23px;line-height:23px;font-size:16.5px;color:#3b3a39;white-space:pre;transform-origin:0 50%;transform:scaleX(0.797);">ページ レイアウト</div>
<div style="left:372px;top:50.5px;height:23px;line-height:23px;font-size:16.5px;color:#3b3a39;white-space:pre;transform-origin:0 50%;transform:scaleX(0.971);">数式</div>
<div style="left:433px;top:50.5px;height:23px;line-height:23px;font-size:16.5px;color:#3b3a39;white-space:pre;transform-origin:0 50%;transform:scaleX(0.804);">データ</div>
<div style="left:503px;top:50.5px;height:23px;line-height:23px;font-size:16.5px;color:#3b3a39;white-space:pre;transform-origin:0 50%;transform:scaleX(0.971);">校閲</div>
<div style="left:564px;top:50.5px;height:23px;line-height:23px;font-size:16.5px;color:#3b3a39;white-space:pre;transform-origin:0 50%;transform:scaleX(0.971);">表示</div>
<div style="left:625px;top:50.5px;height:23px;line-height:23px;font-size:16.5px;color:#3b3a39;white-space:pre;transform-origin:0 50%;transform:scaleX(0.824);">ヘルプ</div>
<div style="left:97px;top:75px;width:44px;height:3.5px;background:#217346;"></div>
<svg style="left:710px;top:52px;" width="18" height="22" viewBox="0 0 18 22"><path d="M9 2A5.8 5.8 0 0 0 5.3 12.2C6 12.9 6.3 13.8 6.3 14.6H11.7C11.7 13.8 12 12.9 12.7 12.2A5.8 5.8 0 0 0 9 2Z" fill="none" stroke="#444" stroke-width="1.3"/><path d="M6.5 17H11.5M7.3 19.3H10.7" stroke="#444" stroke-width="1.3"/></svg>
<div style="left:746px;top:51px;height:22px;line-height:22px;font-size:15.5px;color:#3b3a39;white-space:pre;transform-origin:0 50%;transform:scaleX(0.865);">何をしますか</div>
<div style="left:1829px;top:48px;width:75px;height:28px;background:#fff;box-sizing:border-box;border:1px solid #e1dfdd;border-radius:4px;"></div>
<svg style="left:1838px;top:53px;" width="18" height="18" viewBox="0 0 18 18"><path d="M8 4.5H3V15H14V11" fill="none" stroke="#217346" stroke-width="1.3"/><path d="M6.5 11.5C7 8 9.5 6.3 13 6.3V3.6L16.5 7.2L13 10.8V8.3C10 8.3 8 9 6.5 11.5Z" fill="none" stroke="#217346" stroke-width="1.2"/></svg>
<div style="left:1860px;top:50.5px;height:23px;line-height:23px;font-size:16.5px;color:#217346;white-space:pre;font-weight:bold;transform-origin:0 50%;transform:scaleX(0.971);">共有</div>
<svg style="left:22px;top:88px;" width="38" height="42" viewBox="0 0 38 42"><rect x="2" y="7" width="27" height="31" rx="1.5" fill="#edc27a"/><path d="M7 9.500V4.500H12.5A3 3 0 0 1 18.5 4.500H24V9.500Z" fill="#7a7a7a"/><rect x="13.8" y="2.8" width="3.4" height="2.400" fill="#f3f2f1"/><path d="M21.5 21.5H31L36 26.5V41H21.5Z" fill="#fff" stroke="#7a7a7a" stroke-width="1.2"/><path d="M31 21.5V26.5H36" fill="none" stroke="#7a7a7a" stroke-width="1.2"/></svg>
<div style="left:12px;top:129px;height:22px;line-height:22px;font-size:15.5px;color:#323130;white-space:pre;transform-origin:0 50%;transform:scaleX(0.797);">貼り付け</div>
<svg style="left:33px;top:153.5px;" width="12" height="12" viewBox="0 0 12 12"><path d="M2.5 4.25 L6 7.75 L9.5 4.25" fill="none" stroke="#323130" stroke-width="1.3"/></svg>
<svg style="left:71px;top:92px;" width="18" height="20" viewBox="0 0 18 20"><path d="M4.5 1L11.8 13.2M13.5 1L6.2 13.2" stroke="#605e5c" stroke-width="1.5" fill="none"/><circle cx="4.2" cy="15.5" r="3" fill="none" stroke="#3b78c3" stroke-width="1.4"/><circle cx="13.8" cy="15.5" r="3" fill="none" stroke="#3b78c3" stroke-width="1.4"/></svg>
<div style="left:94px;top:90px;height:22px;line-height:22px;font-size:15.5px;color:#323130;white-space:pre;transform-origin:0 50%;transform:scaleX(0.750);">切り取り</div>
<svg style="left:71px;top:121px;" width="18" height="19" viewBox="0 0 18 19"><path d="M1 1H7.5L9.5 3V4.5M1 1V11.5H4.5" fill="none" stroke="#605e5c" stroke-width="1.2"/><path d="M6 5.5H13L16.5 9V17.5H6Z" fill="#fff" stroke="#605e5c" stroke-width="1.2"/><path d="M8.5 10H14M8.5 12.5H14M8.5 15H14" stroke="#3b78c3" stroke-width="1"/><path d="M2.8 3.5H6M2.8 6H4.5M2.8 8.5H4.5" stroke="#3b78c3" stroke-width="1"/></svg>
<div style="left:94px;top:120px;height:22px;line-height:22px;font-size:15.5px;color:#323130;white-space:pre;transform-origin:0 50%;transform:scaleX(0.667);">コピー</div>
<svg style="left:138px;top:125px;" width="12" height="12" viewBox="0 0 12 12"><path d="M2.5 4.25 L6 7.75 L9.5 4.25" fill="none" stroke="#323130" stroke-width="1.3"/></svg>
<svg style="left:70px;top:152px;" width="20" height="18" viewBox="0 0 20 18"><path d="M1.5 8.5L8 4.5L13 11.5L7 16.5C5 14 3 13.5 1.5 8.5Z" fill="#eabc6c"/><path d="M9 4L11.5 2.5L16.5 9.5L14 11Z" fill="#605e5c"/><path d="M12.5 3.5L16 1L18.5 4.5L15.5 7Z" fill="#605e5c"/></svg>
<div style="left:94px;top:150px;height:22px;line-height:22px;font-size:15.5px;color:#323130;white-space:pre;transform-origin:0 50%;transform:scaleX(0.809);">書式のコピー/貼り付け</div>
<div style="left:75px;top:181px;height:20px;line-height:20px;font-size:14.5px;color:#323130;white-space:pre;transform-origin:0 50%;transform:scaleX(0.705);">クリップボード</div>
<svg style="left:231px;top:187px;" width="11" height="11" viewBox="0 0 11 11"><path d="M0.6 8.5V0.6H9" fill="none" stroke="#605e5c" stroke-width="1.1"/><path d="M3.2 3.2L9.4 9.4M9.5 4.5V9.5H4.5" fill="none" stroke="#605e5c" stroke-width="1.1"/></svg>
<div style="left:245px;top:86px;width:1px;height:111px;background:#c8c6c4;"></div>
<div style="left:256px;top:96px;width:213px;height:29px;background:#fff;box-sizing:border-box;border:1px solid #c8c6c4;"></div>
<div style="left:259px;top:100px;height:22px;line-height:22px;font-size:15.5px;color:#222;white-space:pre;transform-origin:0 50%;transform:scaleX(0.725);">游ゴシック</div>
<svg style="left:453px;top:105px;" width="12" height="12" viewBox="0 0 12 12"><path d="M3 4.5 L9 4.5 L6 8.0 Z" fill="#555"/></svg>
<div style="left:471px;top:96px;width:49px;height:29px;background:#fff;box-sizing:border-box;border:1px solid #c8c6c4;"></div>
<div style="left:475px;top:100px;height:22px;line-height:22px;font-size:15.5px;color:#222;white-space:pre;font-family:'Liberation Serif',serif;font-size:17px;letter-spacing:0.5px;">11</div>
<svg style="left:505px;top:105px;" width="12" height="12" viewBox="0 0 12 12"><path d="M3 4.5 L9 4.5 L6 8.0 Z" fill="#555"/></svg>
<div style="left:531px;top:100.5px;height:22px;line-height:22px;font-size:15.5px;color:#5a5856;white-space:pre;font-weight:bold;font-weight:600;">A</div>
<svg style="left:540px;top:100px;" width="8" height="6" viewBox="0 0 8 6"><path d="M0.5 4.5L3.5 1L6.5 4.5Z" fill="#3b78c3"/></svg>
<div style="left:560.5px;top:103px;height:19px;line-height:19px;font-size:13.5px;color:#5a5856;white-space:pre;font-weight:bold;">A</div>
<svg style="left:568px;top:101px;" width="8" height="6" viewBox="0 0 8 6"><path d="M0.5 1L6.5 1L3.5 4.5Z" fill="#3b78c3"/></svg>
<div style="left:264px;top:139px;height:22px;line-height:22px;font-size:15.5px;color:#505050;white-space:pre;font-weight:bold;">B</div>
<div style="left:296px;top:137.5px;height:25px;line-height:25px;font-size:18px;color:#505050;white-space:pre;font-weight:bold;font-style:italic;font-family:'Liberation Serif',serif;font-size:17.5px;">I</div>
<div style="left:323.5px;top:138.5px;height:22px;line-height:22px;font-size:15.5px;color:#505050;white-space:pre;font-weight:bold;">U</div>
<div style="left:323px;top:157px;width:13px;height:1.3px;background:#505050;"></div>
<svg style="left:346px;top:145px;" width="12" height="12" viewBox="0 0 12 12"><path d="M2.5 4.25 L6 7.75 L9.5 4.25" fill="none" stroke="#323130" stroke-width="1.3"/></svg>
<div style="left:367px;top:138px;width:1px;height:26px;background:#c8c6c4;"></div>
<svg style="left:377px;top:142px;" width="18" height="18" viewBox="0 0 18 18"><rect x="0" y="0" width="1" height="1" fill="#605e5c"/><rect x="0" y="8" width="1" height="1" fill="#605e5c"/><rect x="0" y="0" width="1" height="1" fill="#605e5c"/><rect x="8" y="0" width="1" height="1" fill="#605e5c"/><rect x="16" y="0" width="1" height="1" fill="#605e5c"/><rect x="2" y="0" width="1" height="1" fill="#605e5c"/><rect x="2" y="8" width="1" height="1" fill="#605e5c"/><rect x="0" y="2" width="1" height="1" fill="#605e5c"/><rect x="8" y="2" width="1" height="1" fill="#605e5c"/><rect x="16" y="2" width="1" height="1" fill="#605e5c"/><rect x="4" y="0" width="1" height="1" fill="#605e5c"/><rect x="4" y="8" width="1" height="1" fill="#605e5c"/><rect x="0" y="4" width="1" height="1" fill="#605e5c"/><rect x="8" y="4" width="1" height="1" fill="#605e5c"/><rect x="16" y="4" width="1" height="1" fill="#605e5c"/><rect x="6" y="0" width="1" height="1" fill="#605e5c"/><rect x="6" y="8" width="1" height="1" fill="#605e5c"/><rect x="0" y="6" width="1" height="1" fill="#605e5c"/><rect x="8" y="6" width="1" height="1" fill="#605e5c"/><rect x="16" y="6" width="1" height="1" fill="#605e5c"/><rect x="8" y="0" width="1" height="1" fill="#605e5c"/><rect x="8" y="8" width="1" height="1" fill="#605e5c"/><rect x="0" y="8" width="1" height="1" fill="#605e5c"/><rect x="8" y="8" width="1" height="1" fill="#605e5c"/><rect x="16" y="8" width="1" height="1" fill="#605e5c"/><rect x="10" y="0" width="1" height="1" fill="#605e5c"/><rect x="10" y="8" width="1" height="1" fill="#605e5c"/><rect x="0" y="10" width="1" height="1" fill="#605e5c"/><rect x="8" y="10" width="1" height="1" fill="#605e5c"/><rect x="16" y="10" width="1" height="1" fill="#605e5c"/><rect x="12" y="0" width="1" height="1" fill="#605e5c"/><rect x="12" y="8" width="1" height="1" fill="#605e5c"/><rect x="0" y="12" width="1" height="1" fill="#605e5c"/><rect x="8" y="12" width="1" height="1" fill="#605e5c"/><rect x="16" y="12" width="1" height="1" fill="#605e5c"/><rect x="14" y="0" width="1" height="1" fill="#605e5c"/><rect x="14" y="8" width="1" height="1" fill="#605e5c"/><rect x="0" y="14" width="1" height="1" fill="#605e5c"/><rect x="8" y="14" width="1" height="1" fill="#605e5c"/><rect x="16" y="14" width="1" height="1" fill="#605e5c"/><rect x="16" y="0" width="1" height="1" fill="#605e5c"/><rect x="16" y="8" width="1" height="1" fill="#605e5c"/><rect x="0" y="16" width="1" height="1" fill="#605e5c"/><rect x="8" y="16" width="1" height="1" fill="#605e5c"/><rect x="16" y="16" width="1" height="1" fill="#605e5c"/><path d="M0 16.5H17" stroke="#605e5c" stroke-width="1.4"/></svg>
<svg style="left:402px;top:145px;" width="12" height="12" viewBox="0 0 12 12"><path d="M2.5 4.25 L6 7.75 L9.5 4.25" fill="none" stroke="#323130" stroke-width="1.3"/></svg>
<div style="left:423px;top:138px;width:1px;height:26px;background:#c8c6c4;"></div>
<svg style="left:432px;top:138px;" width="22" height="24" viewBox="0 0 22 24"><path d="M6 8.5L11 3.5L17.5 10L11 16.5L4.5 10Z" fill="#fff" stroke="#605e5c" stroke-width="1.2"/><path d="M9.5 6.5V2.5A1.6 1.6 0 0 1 12.7 2.5V4.5" fill="none" stroke="#605e5c" stroke-width="1.1"/><path d="M15 7.5C17.5 8 18.8 10 18.5 13C17.5 11 16.5 10.5 15.5 10.5Z" fill="#3b78c3"/></svg>
<div style="left:432px;top:155px;width:20px;height:5px;background:#00b0f0;"></div>
<svg style="left:458px;top:145px;" width="12" height="12" viewBox="0 0 12 12"><path d="M2.5 4.25 L6 7.75 L9.5 4.25" fill="none" stroke="#323130" stroke-width="1.3"/></svg>
<div style="left:485.041953125px;top:135.5px;height:23px;line-height:23px;font-size:16.5px;color:#505050;white-space:pre;font-weight:bold;">A</div>
<div style="left:481px;top:155px;width:20px;height:5px;background:#ff0000;"></div>
<svg style="left:507px;top:145px;" width="12" height="12" viewBox="0 0 12 12"><path d="M2.5 4.25 L6 7.75 L9.5 4.25" fill="none" stroke="#323130" stroke-width="1.3"/></svg>
<div style="left:528px;top:138px;width:1px;height:26px;background:#c8c6c4;"></div>
<svg style="left:539px;top:141px;" width="16" height="20" viewBox="0 0 16 20"><path d="M3.5 1.5H10L4.5 7.5M6.5 4.5H10" fill="none" stroke="#605e5c" stroke-width="1.1"/><path d="M2 10.5H12M7 9V18.5M3.5 13.5H10.5V16.5H3.5ZM2 18.5H12" fill="none" stroke="#605e5c" stroke-width="1"/></svg>
<svg style="left:563px;top:145px;" width="12" height="12" viewBox="0 0 12 12"><path d="M2.5 4.25 L6 7.75 L9.5 4.25" fill="none" stroke="#323130" stroke-width="1.3"/></svg>
<div style="left:385px;top:181px;height:20px;line-height:20px;font-size:14.5px;color:#323130;white-space:pre;transform-origin:0 50%;transform:scaleX(0.700);">フォント</div>
<svg style="left:575px;top:187px;" width="11" height="11" viewBox="0 0 11 11"><path d="M0.6 8.5V0.6H9" fill="none" stroke="#605e5c" stroke-width="1.1"/><path d="M3.2 3.2L9.4 9.4M9.5 4.5V9.5H4.5" fill="none" stroke="#605e5c" stroke-width="1.1"/></svg>
<div style="left:590px;top:86px;width:1px;height:111px;background:#c8c6c4;"></div>
<svg style="left:605px;top:101px;shape-rendering:crispEdges;" width="18" height="11" viewBox="0 0 18 11"><rect x="0" y="0" width="18" height="1" fill="#605e5c"/><rect x="3" y="3" width="12" height="1" fill="#605e5c"/><rect x="0" y="6" width="18" height="1" fill="#605e5c"/></svg>
<div style="left:630px;top:96px;width:29px;height:29px;background:#c8c6c4;box-sizing:border-box;border:1px solid #979593;"></div>
<svg style="left:635px;top:105px;shape-rendering:crispEdges;" width="18" height="14" viewBox="0 0 18 14"><rect x="2" y="0" width="14" height="1" fill="#605e5c"/><rect x="0" y="3" width="18" height="1" fill="#605e5c"/><rect x="0" y="6" width="18" height="1" fill="#605e5c"/><rect x="2" y="9" width="14" height="1" fill="#605e5c"/></svg>
<svg style="left:665px;top:109px;shape-rendering:crispEdges;" width="18" height="14" viewBox="0 0 18 14"><rect x="0" y="0" width="18" height="1" fill="#605e5c"/><rect x="2" y="3" width="14" height="1" fill="#605e5c"/><rect x="0" y="6" width="18" height="1" fill="#605e5c"/><rect x="2" y="9" width="14" height="1" fill="#605e5c"/></svg>
<div style="left:692px;top:97px;width:1px;height:27px;background:#c8c6c4;"></div>
<svg style="left:700px;top:98px;" width="24" height="24" viewBox="0 0 24 24"><text x="1" y="14" font-size="12" font-family="Liberation Sans" fill="#605e5c" transform="rotate(-38 8 12)">ab</text><path d="M5 21L19 9.5M14.5 9H19.5V14" fill="none" stroke="#605e5c" stroke-width="1.3"/></svg>
<svg style="left:724px;top:104.5px;" width="12" height="12" viewBox="0 0 12 12"><path d="M2.5 4.25 L6 7.75 L9.5 4.25" fill="none" stroke="#323130" stroke-width="1.3"/></svg>
<div style="left:760px;top:93px;width:1px;height:73px;background:#c8c6c4;"></div>
<svg style="left:772px;top:101px;" width="18" height="20" viewBox="0 0 18 20"><text x="0" y="8" font-size="11.5" font-family="Liberation Sans" fill="#484644">ab</text><text x="0" y="17" font-size="11.5" font-family="Liberation Sans" fill="#484644">c</text><path d="M14.5 9V13.5H8.5M10.8 11L8.2 13.5L10.8 16" fill="none" stroke="#3b78c3" stroke-width="1.3"/></svg>
<div style="left:794px;top:100px;height:22px;line-height:22px;font-size:15.5px;color:#323130;white-space:pre;transform-origin:0 50%;transform:scaleX(0.818);">折り返して全体を表示する</div>
<svg style="left:607px;top:145px;shape-rendering:crispEdges;" width="14" height="14" viewBox="0 0 14 14"><rect x="0" y="0" width="14" height="1" fill="#605e5c"/><rect x="0" y="3" width="10" height="1" fill="#605e5c"/><rect x="0" y="6" width="14" height="1" fill="#605e5c"/><rect x="0" y="9" width="11" height="1" fill="#605e5c"/></svg>
<svg style="left:636px;top:145px;shape-rendering:crispEdges;" width="16" height="14" viewBox="0 0 16 14"><rect x="0" y="0" width="16" height="1" fill="#605e5c"/><rect x="3" y="3" width="10" height="1" fill="#605e5c"/><rect x="0" y="6" width="16" height="1" fill="#605e5c"/><rect x="3" y="9" width="10" height="1" fill="#605e5c"/></svg>
<svg style="left:667px;top:145px;shape-rendering:crispEdges;" width="14" height="14" viewBox="0 0 14 14"><rect x="0" y="0" width="14" height="1" fill="#605e5c"/><rect x="3" y="3" width="11" height="1" fill="#605e5c"/><rect x="0" y="6" width="14" height="1" fill="#605e5c"/><rect x="3" y="9" width="11" height="1" fill="#605e5c"/></svg>
<div style="left:692px;top:138px;width:1px;height:26px;background:#c8c6c4;"></div>
<svg style="left:702px;top:142px;" width="18" height="17" viewBox="0 0 18 17"><rect x="0" y="0" width="18" height="1" fill="#605e5c" shape-rendering="crispEdges"/><rect x="10" y="3" width="8" height="1" fill="#605e5c" shape-rendering="crispEdges"/><rect x="10" y="6" width="8" height="1" fill="#605e5c" shape-rendering="crispEdges"/><rect x="10" y="9" width="8" height="1" fill="#605e5c" shape-rendering="crispEdges"/><rect x="10" y="12" width="8" height="1" fill="#605e5c" shape-rendering="crispEdges"/><rect x="0" y="15" width="18" height="1" fill="#605e5c" shape-rendering="crispEdges"/><path d="M7.500 8H1.400M4.300 4.800L1.100 8L4.300 11.200" fill="none" stroke="#3b78c3" stroke-width="1.9"/></svg>
<svg style="left:732px;top:142px;" width="18" height="17" viewBox="0 0 18 17"><rect x="0" y="0" width="18" height="1" fill="#605e5c" shape-rendering="crispEdges"/><rect x="10" y="3" width="8" height="1" fill="#605e5c" shape-rendering="crispEdges"/><rect x="10" y="6" width="8" height="1" fill="#605e5c" shape-rendering="crispEdges"/><rect x="10" y="9" width="8" height="1" fill="#605e5c" shape-rendering="crispEdges"/><rect x="10" y="12" width="8" height="1" fill="#605e5c" shape-rendering="crispEdges"/><rect x="0" y="15" width="18" height="1" fill="#605e5c" shape-rendering="crispEdges"/><path d="M0.500 8H6.600M3.700 4.800L6.900 8L3.700 11.200" fill="none" stroke="#3b78c3" stroke-width="1.9"/></svg>
<svg style="left:770px;top:140px;" width="20" height="20" viewBox="0 0 20 20"><rect x="0.6" y="0.6" width="18" height="18" fill="#fff" stroke="#605e5c" stroke-width="1.1"/><path d="M0.6 5H18.6M0.6 14.2H18.6M9.6 0.6V5M9.6 14.2V18.6" stroke="#605e5c" stroke-width="1.1"/><path d="M3 9.6H16.2M5.2 7.2L2.8 9.6L5.2 12M14 7.2L16.4 9.6L14 12" fill="none" stroke="#3b78c3" stroke-width="1.3"/></svg>
<div style="left:794px;top:140px;height:22px;line-height:22px;font-size:15.5px;color:#323130;white-space:pre;transform-origin:0 50%;transform:scaleX(0.824);">セルを結合して中央揃え</div>
<svg style="left:950px;top:145px;" width="12" height="12" viewBox="0 0 12 12"><path d="M2.5 4.25 L6 7.75 L9.5 4.25" fill="none" stroke="#323130" stroke-width="1.3"/></svg>
<div style="left:758px;top:181px;height:20px;line-height:20px;font-size:14.5px;color:#323130;white-space:pre;transform-origin:0 50%;transform:scaleX(0.967);">配置</div>
<svg style="left:963px;top:187px;" width="11" height="11" viewBox="0 0 11 11"><path d="M0.6 8.5V0.6H9" fill="none" stroke="#605e5c" stroke-width="1.1"/><path d="M3.2 3.2L9.4 9.4M9.5 4.5V9.5H4.5" fill="none" stroke="#605e5c" stroke-width="1.1"/></svg>
<div style="left:977px;top:86px;width:1px;height:111px;background:#c8c6c4;"></div>
<div style="left:988px;top:96px;width:174px;height:29px;background:#fff;box-sizing:border-box;border:1px solid #c8c6c4;"></div>
<div style="left:991px;top:100px;height:22px;line-height:22px;font-size:15.5px;color:#222;white-space:pre;transform-origin:0 50%;transform:scaleX(0.906);">標準</div>
<svg style="left:1146px;top:105px;" width="12" height="12" viewBox="0 0 12 12"><path d="M3 4.5 L9 4.5 L6 8.0 Z" fill="#555"/></svg>
<svg style="left:990px;top:140px;" width="24" height="22" viewBox="0 0 24 22"><rect x="2" y="1.5" width="19" height="10.5" fill="#3b78c3"/><ellipse cx="11.5" cy="6.7" rx="4" ry="3.1" fill="#fff"/><circle cx="11.500" cy="6.700" r="1.500" fill="#3b78c3"/><rect x="4" y="5.5" width="1.800" height="2.600" fill="#fff"/><g fill="#f7deb5" stroke="#e3aa55" stroke-width="0.9"><ellipse cx="17" cy="15.500" rx="4" ry="1.500"/><ellipse cx="17" cy="13.200" rx="4" ry="1.500"/><ellipse cx="17" cy="10.900" rx="4" ry="1.500"/><ellipse cx="17" cy="8.600" rx="4" ry="1.500"/><ellipse cx="12" cy="19.500" rx="4" ry="1.500"/><ellipse cx="12" cy="17.200" rx="4" ry="1.500"/><ellipse cx="12" cy="14.900" rx="4" ry="1.500"/></g></svg>
<svg style="left:1018px;top:145px;" width="12" height="12" viewBox="0 0 12 12"><path d="M2.5 4.25 L6 7.75 L9.5 4.25" fill="none" stroke="#323130" stroke-width="1.3"/></svg>
<div style="left:1042px;top:137px;height:27px;line-height:27px;font-size:19px;color:#605e5c;white-space:pre;">%</div>
<div style="left:1076px;top:124px;height:38px;line-height:38px;font-size:27px;color:#605e5c;white-space:pre;font-weight:bold;font-family:'Liberation Serif',serif;">,</div>
<div style="left:1099px;top:138px;width:1px;height:26px;background:#c8c6c4;"></div>
<svg style="left:1109px;top:141px;" width="20" height="20" viewBox="0 0 20 20"><text x="8.500" y="9" font-size="10.5" font-family="Liberation Sans" fill="#605e5c">.0</text><text x="2.500" y="18.500" font-size="10.5" font-family="Liberation Sans" fill="#605e5c">.00</text><path d="M8.500 5.200H2M4.800 2.200L1.600 5.200L4.800 8.200" fill="none" stroke="#3b78c3" stroke-width="1.900"/></svg>
<svg style="left:1139px;top:141px;" width="20" height="20" viewBox="0 0 20 20"><text x="4" y="9" font-size="10.5" font-family="Liberation Sans" fill="#605e5c">.00</text><text x="10" y="18.500" font-size="10.5" font-family="Liberation Sans" fill="#605e5c">.0</text><path d="M1.500 14.700H8M5.200 11.700L8.400 14.700L5.200 17.700" fill="none" stroke="#3b78c3" stroke-width="1.900"/></svg>
<div style="left:1049px;top:181px;height:20px;line-height:20px;font-size:14.5px;color:#323130;white-space:pre;transform-origin:0 50%;transform:scaleX(0.967);">数値</div>
<svg style="left:1157px;top:187px;" width="11" height="11" viewBox="0 0 11 11"><path d="M0.6 8.5V0.6H9" fill="none" stroke="#605e5c" stroke-width="1.1"/><path d="M3.2 3.2L9.4 9.4M9.5 4.5V9.5H4.5" fill="none" stroke="#605e5c" stroke-width="1.1"/></svg>
<div style="left:1171px;top:86px;width:1px;height:111px;background:#c8c6c4;"></div>
<svg style="left:1195px;top:94px;" width="38" height="35" viewBox="0 0 38 35"><rect x="0.5" y="0.5" width="33" height="27" fill="#fff" stroke="#8a8886" stroke-width="1"/><path d="M10.600 0.500V27.500M23.100 0.500V27.500M0.500 7.250H33.500M0.500 14.100H33.500M0.500 21H33.500" stroke="#a19f9d" stroke-width="1"/><rect x="11" y="1" width="7" height="6" fill="#d65532"/><rect x="11" y="7.700" width="10.600" height="6" fill="#3b78c3"/><rect x="11" y="14.600" width="8.700" height="6" fill="#d65532"/><rect x="11" y="21.500" width="4.600" height="5.500" fill="#3b78c3"/><rect x="18.500" y="19" width="18" height="14" fill="#fff" stroke="#605e5c" stroke-width="1.2"/><path d="M23 24H32M23 28H32M30 21.500L25 30.500" stroke="#323130" stroke-width="1.2" fill="none"/></svg>
<div style="left:1184px;top:130px;height:22px;line-height:22px;font-size:15.5px;color:#323130;white-space:pre;transform-origin:0 50%;transform:scaleX(0.875);">条件付き</div>
<div style="left:1190px;top:149px;height:22px;line-height:22px;font-size:15.5px;color:#323130;white-space:pre;transform-origin:0 50%;transform:scaleX(0.906);">書式</div>
<svg style="left:1223px;top:154.5px;" width="12" height="12" viewBox="0 0 12 12"><path d="M2.5 4.25 L6 7.75 L9.5 4.25" fill="none" stroke="#323130" stroke-width="1.3"/></svg>
<svg style="left:1267px;top:93px;" width="40" height="36" viewBox="0 0 40 36"><rect x="0.5" y="0.5" width="32" height="27" fill="#fff" stroke="#8a8886" stroke-width="1"/><path d="M8.5 0.5V27.5" stroke="#a19f9d" stroke-width="1"/><path d="M16.5 0.5V27.5" stroke="#a19f9d" stroke-width="1"/><path d="M24.5 0.5V27.5" stroke="#a19f9d" stroke-width="1"/><path d="M0.5 7.2H32.5" stroke="#a19f9d" stroke-width="1"/><path d="M0.5 14.0H32.5" stroke="#a19f9d" stroke-width="1"/><path d="M0.5 20.8H32.5" stroke="#a19f9d" stroke-width="1"/><rect x="8.7" y="7.4" width="23.6" height="20" fill="#bdd3ec" opacity="0.95"/><path d="M8.5 7.2V27.5M16.5 7.2V27.5M24.5 7.2V27.5M8.5 14H32.5M8.5 20.7H32.5" stroke="#9ab4d4" stroke-width="1"/><path d="M25.5 23L33 11.5L38 7.5L38 13.5L30 27Z" fill="#797775"/><path d="M9 34.5C14 32.5 17 28.5 20 25C22.5 22 28.5 23 29.5 27C28 31.5 20 35 9 34.5Z" fill="#3b78c3"/><path d="M20.5 29.5A3.500 2.500 -35 0 1 26 26.500" fill="none" stroke="#fff" stroke-width="1.5"/></svg>
<div style="left:1245px;top:130px;height:22px;line-height:22px;font-size:15.5px;color:#323130;white-space:pre;transform-origin:0 50%;transform:scaleX(0.696);">テーブルとして</div>
<div style="left:1248px;top:149px;height:22px;line-height:22px;font-size:15.5px;color:#323130;white-space:pre;transform-origin:0 50%;transform:scaleX(0.906);">書式設定</div>
<svg style="left:1310px;top:154.5px;" width="12" height="12" viewBox="0 0 12 12"><path d="M2.5 4.25 L6 7.75 L9.5 4.25" fill="none" stroke="#323130" stroke-width="1.3"/></svg>
<svg style="left:1340px;top:90px;" width="40" height="38" viewBox="0 0 40 38"><rect x="0.5" y="0.5" width="33.500" height="28" fill="#fff" stroke="#8a8886" stroke-width="1"/><path d="M6.900 0.500V28.500M25.600 0.500V28.500M0.500 6.900H34M0.500 20H34" stroke="#a19f9d" stroke-width="1"/><rect x="7.400" y="7.400" width="17.700" height="12.100" fill="#bdd3ec"/><path d="M25.5 25L33 13.5L38 9.5L38 15.5L30 29Z" fill="#797775"/><path d="M9 36.5C14 34.5 17 30.5 20 27C22.5 24 28.5 25 29.5 29C28 33.5 20 37 9 36.5Z" fill="#3b78c3"/><path d="M20.5 31.5A3.500 2.500 -35 0 1 26 28.500" fill="none" stroke="#fff" stroke-width="1.5"/></svg>
<div style="left:1340px;top:130px;height:22px;line-height:22px;font-size:15.5px;color:#323130;white-space:pre;transform-origin:0 50%;transform:scaleX(0.729);">セルの</div>
<div style="left:1328px;top:149px;height:22px;line-height:22px;font-size:15.5px;color:#323130;white-space:pre;transform-origin:0 50%;transform:scaleX(0.672);">スタイル</div>
<svg style="left:1375px;top:154.5px;" width="12" height="12" viewBox="0 0 12 12"><path d="M2.5 4.25 L6 7.75 L9.5 4.25" fill="none" stroke="#323130" stroke-width="1.3"/></svg>
<div style="left:1263px;top:181px;height:20px;line-height:20px;font-size:14.5px;color:#323130;white-space:pre;transform-origin:0 50%;transform:scaleX(0.717);">スタイル</div>
<div style="left:1399px;top:86px;width:1px;height:111px;background:#c8c6c4;"></div>
<svg style="left:1417px;top:91px;" width="38" height="36" viewBox="0 0 38 36"><rect x="3.5" y="0.5" width="17" height="5.5" fill="#fff" stroke="#8a8886" stroke-width="1"/><path d="M12 0.5V6" stroke="#8a8886"/><rect x="17.5" y="11.5" width="17" height="5.5" fill="#bdd3ec" stroke="#8a8886"/><path d="M26 11.5V17" stroke="#8a8886"/><rect x="3.5" y="22.5" width="17" height="11" fill="#fff" stroke="#8a8886" stroke-width="1"/><path d="M12 22.5V33.5M3.5 28H20.5" stroke="#8a8886"/><path d="M15 14.2H2M7 9L1.5 14.2L7 19.4" fill="none" stroke="#3b78c3" stroke-width="2.2"/></svg>
<div style="left:1421px;top:130px;height:22px;line-height:22px;font-size:15.5px;color:#323130;white-space:pre;transform-origin:0 50%;transform:scaleX(0.938);">挿入</div>
<svg style="left:1431px;top:154px;" width="12" height="12" viewBox="0 0 12 12"><path d="M2.5 4.25 L6 7.75 L9.5 4.25" fill="none" stroke="#323130" stroke-width="1.3"/></svg>
<svg style="left:1470px;top:91px;" width="38" height="36" viewBox="0 0 38 36"><rect x="1.5" y="0.5" width="17" height="5.5" fill="#fff" stroke="#8a8886" stroke-width="1"/><path d="M10 0.5V6" stroke="#8a8886"/><rect x="9.5" y="11" width="14" height="5.5" fill="#bdd3ec" stroke="#8a8886"/><rect x="1.5" y="21.5" width="17" height="11" fill="#fff" stroke="#8a8886" stroke-width="1"/><path d="M10 21.5V32.5M1.5 27H18.5" stroke="#8a8886"/><path d="M20 7L35 21M35 7L20 21" stroke="#d65532" stroke-width="2.2"/></svg>
<div style="left:1473px;top:130px;height:22px;line-height:22px;font-size:15.5px;color:#323130;white-space:pre;transform-origin:0 50%;transform:scaleX(0.938);">削除</div>
<svg style="left:1483px;top:154px;" width="12" height="12" viewBox="0 0 12 12"><path d="M2.5 4.25 L6 7.75 L9.5 4.25" fill="none" stroke="#323130" stroke-width="1.3"/></svg>
<svg style="left:1522px;top:90px;" width="38" height="38" viewBox="0 0 38 38"><path d="M1 1V7M34 1V7M3 4H32M6.5 1.2L3 4L6.5 6.8M28.500 1.2L32 4L28.5 6.8" fill="none" stroke="#3b78c3" stroke-width="1.4"/><g transform="translate(0,9)"><rect x="0.5" y="0.5" width="34" height="20" fill="#fff" stroke="#8a8886" stroke-width="1"/><path d="M9.0 0.5V20.5" stroke="#a19f9d" stroke-width="1"/><path d="M17.5 0.5V20.5" stroke="#a19f9d" stroke-width="1"/><path d="M26.0 0.5V20.5" stroke="#a19f9d" stroke-width="1"/><path d="M0.5 7.2H34.5" stroke="#a19f9d" stroke-width="1"/><path d="M0.5 13.8H34.5" stroke="#a19f9d" stroke-width="1"/><rect x="9" y="3" width="9" height="11" fill="#3b78c3"/></g><path d="M1.5 29.5V35.5H9L11.5 32.5H24L21.500 35.5" fill="#fff" stroke="#8a8886"/></svg>
<div style="left:1525px;top:130px;height:22px;line-height:22px;font-size:15.5px;color:#323130;white-space:pre;transform-origin:0 50%;transform:scaleX(0.938);">書式</div>
<svg style="left:1535px;top:154px;" width="12" height="12" viewBox="0 0 12 12"><path d="M2.5 4.25 L6 7.75 L9.5 4.25" fill="none" stroke="#323130" stroke-width="1.3"/></svg>
<div style="left:1474px;top:181px;height:20px;line-height:20px;font-size:14.5px;color:#323130;white-space:pre;transform-origin:0 50%;transform:scaleX(0.833);">セル</div>
<div style="left:1575px;top:86px;width:1px;height:111px;background:#c8c6c4;"></div>
<svg style="left:1591px;top:90px;" width="18" height="18" viewBox="0 0 18 18"><path d="M15 3.8V1.5H2.5L9 9L2.5 16.5H15V14.2" fill="none" stroke="#484644" stroke-width="2.5"/></svg>
<div style="left:1614px;top:89px;height:22px;line-height:22px;font-size:15.5px;color:#323130;white-space:pre;transform-origin:0 50%;transform:scaleX(0.830);">オート SUM</div>
<svg style="left:1697px;top:93px;" width="12" height="12" viewBox="0 0 12 12"><path d="M2.5 4.25 L6 7.75 L9.5 4.25" fill="none" stroke="#323130" stroke-width="1.3"/></svg>
<svg style="left:1590px;top:118px;" width="20" height="20" viewBox="0 0 20 20"><rect x="1" y="1.500" width="16.5" height="16.5" fill="#fff" stroke="#605e5c" stroke-width="1.1"/><rect x="1" y="1" width="16.500" height="2.2" fill="#605e5c"/><path d="M9.2 6V14.5M5.6 11L9.2 14.700L12.800 11" fill="none" stroke="#3b78c3" stroke-width="2.2"/></svg>
<div style="left:1614px;top:118px;height:22px;line-height:22px;font-size:15.5px;color:#323130;white-space:pre;transform-origin:0 50%;transform:scaleX(0.604);">フィル</div>
<svg style="left:1647px;top:122.5px;" width="12" height="12" viewBox="0 0 12 12"><path d="M2.5 4.25 L6 7.75 L9.5 4.25" fill="none" stroke="#323130" stroke-width="1.3"/></svg>
<svg style="left:1590px;top:147px;" width="20" height="19" viewBox="0 0 20 19"><path d="M1.900 12L11.900 1.700L17.700 6.500L8.200 16.700Z" fill="#e8829a" stroke="#e8829a" stroke-width="1" stroke-linejoin="round"/><path d="M5 8.850L11.300 13.500" stroke="#f7d3da" stroke-width="1"/></svg>
<div style="left:1614px;top:147px;height:22px;line-height:22px;font-size:15.5px;color:#323130;white-space:pre;transform-origin:0 50%;transform:scaleX(0.604);">クリア</div>
<svg style="left:1647px;top:151.5px;" width="12" height="12" viewBox="0 0 12 12"><path d="M2.5 4.25 L6 7.75 L9.5 4.25" fill="none" stroke="#323130" stroke-width="1.3"/></svg>
<svg style="left:1732px;top:90px;" width="40" height="36" viewBox="0 0 40 36"><text x="1" y="15.500" font-size="18" font-weight="bold" font-family="Liberation Sans" fill="#3b78c3">A</text><text x="2" y="32.500" font-size="17.5" font-weight="bold" font-family="Liberation Sans" fill="#a35bc0">Z</text><path d="M17.800 8.800H36L29.500 16.500V25.600H24.700V16.500Z" fill="#797775"/></svg>
<div style="left:1719px;top:130px;height:22px;line-height:22px;font-size:15.5px;color:#323130;white-space:pre;transform-origin:0 50%;transform:scaleX(0.787);">並べ替えと</div>
<div style="left:1717px;top:149px;height:22px;line-height:22px;font-size:15.5px;color:#323130;white-space:pre;transform-origin:0 50%;transform:scaleX(0.625);">フィルター</div>
<svg style="left:1771px;top:154.5px;" width="12" height="12" viewBox="0 0 12 12"><path d="M2.5 4.25 L6 7.75 L9.5 4.25" fill="none" stroke="#323130" stroke-width="1.3"/></svg>
<svg style="left:1794px;top:90px;" width="38" height="36" viewBox="0 0 38 36"><circle cx="23.600" cy="13.200" r="11.200" fill="#fff" stroke="#3b78c3" stroke-width="2.3"/><path d="M16 21L4 33" stroke="#3b78c3" stroke-width="3.6" stroke-linecap="round"/></svg>
<div style="left:1793px;top:130px;height:22px;line-height:22px;font-size:15.5px;color:#323130;white-space:pre;transform-origin:0 50%;transform:scaleX(0.812);">検索と</div>
<div style="left:1790px;top:149px;height:22px;line-height:22px;font-size:15.5px;color:#323130;white-space:pre;transform-origin:0 50%;transform:scaleX(0.906);">選択</div>
<svg style="left:1823px;top:154.5px;" width="12" height="12" viewBox="0 0 12 12"><path d="M2.5 4.25 L6 7.75 L9.5 4.25" fill="none" stroke="#323130" stroke-width="1.3"/></svg>
<div style="left:1696px;top:181px;height:20px;line-height:20px;font-size:14.5px;color:#323130;white-space:pre;transform-origin:0 50%;transform:scaleX(0.967);">編集</div>
<div style="left:1848px;top:86px;width:1px;height:111px;background:#c8c6c4;"></div>
<svg style="left:1896px;top:189px;" width="14" height="10" viewBox="0 0 14 10"><path d="M1.500 8L7 2.500L12.5 8" fill="none" stroke="#323130" stroke-width="1.4"/></svg>
</nav>
<section id="messagebar" aria-label="セキュリティの警告">
<div style="left:0px;top:201px;width:1920px;height:1px;background:#d2d0ce;"></div>
<div style="left:0px;top:202px;width:1920px;height:37px;background:#fcf5b5;"></div>
<div style="left:0px;top:202px;width:1920px;height:1px;background:#e3dc8f;"></div>
<div style="left:0;top:238px;width:1920px;height:8px;background:linear-gradient(#d6d29c,#d4d4d0 15%,#dcdcdc 45%,#e6e6e6);"></div>
<svg style="left:14px;top:209px;" width="22" height="25" viewBox="0 0 22 25"><path d="M11 1.5C8 3.5 5 4.2 1.8 4.3V11C1.8 17 5.5 21.3 11 23.5C16.5 21.3 20.2 17 20.2 11V4.3C17 4.2 14 3.5 11 1.5Z" fill="#e8b45e"/><rect x="9.7" y="6.5" width="2.6" height="8.5" fill="#3b3a39"/><rect x="9.7" y="16.6" width="2.6" height="2.6" fill="#3b3a39"/></svg>
<div style="left:50px;top:210px;height:21px;line-height:21px;font-size:15px;color:#262626;white-space:pre;font-weight:bold;transform-origin:0 50%;transform:scaleX(0.830);">セキュリティの警告</div>
<div style="left:174px;top:210.5px;height:20px;line-height:20px;font-size:14.5px;color:#262626;white-space:pre;transform-origin:0 50%;transform:scaleX(0.839);">リンクの自動更新が無効にされました</div>
<div style="left:414px;top:208px;width:153px;height:26px;background:#fdfdfd;box-sizing:border-box;border:1px solid #ababab;"></div>
<div style="left:433px;top:211px;height:20px;line-height:20px;font-size:14.5px;color:#262626;white-space:pre;transform-origin:0 50%;transform:scaleX(0.830);">コンテンツの有効化</div>
<svg style="left:1895px;top:214px;" width="12" height="12" viewBox="0 0 12 12"><path d="M2.5 2.5L9.5 9.5M9.5 2.5L2.5 9.5" stroke="#444" stroke-width="1.7"/></svg>
</section>
<section id="formulabar" aria-label="数式バー">
<div style="left:6px;top:251px;width:127px;height:36px;background:#fff;box-sizing:border-box;border:1px solid #d0d0d0;"></div>
<div style="left:13.5px;top:257.5px;height:27px;line-height:27px;font-size:19px;color:#444;white-space:pre;transform-origin:0 50%;transform:scaleX(0.924);">T4</div>
<svg style="left:115px;top:262.5px;" width="12" height="12" viewBox="0 0 12 12"><path d="M2.8 4.4 L9.2 4.4 L6 8.1 Z" fill="#666"/></svg>
<div style="left:150px;top:262px;width:3px;height:3px;background:#b0b0b0;"></div>
<div style="left:150px;top:268px;width:3px;height:3px;background:#b0b0b0;"></div>
<div style="left:150px;top:274px;width:3px;height:3px;background:#b0b0b0;"></div>
<div style="left:170px;top:251px;width:137px;height:36px;background:#fff;box-sizing:border-box;border:1px solid #d0d0d0;"></div>
<svg style="left:184px;top:260px;" width="16" height="16" viewBox="0 0 16 16"><path d="M2 2L14 14M14 2L2 14" stroke="#c4c4c4" stroke-width="2.1"/></svg>
<svg style="left:229px;top:260px;" width="18" height="16" viewBox="0 0 18 16"><path d="M2 9L7 14L16 2.5" fill="none" stroke="#c4c4c4" stroke-width="2.6"/></svg>
<div style="left:274px;top:256px;height:24px;line-height:24px;font-size:19px;font-style:italic;font-weight:bold;color:#6a6a6a;font-family:'Liberation Serif',serif;white-space:nowrap;">f<span style="font-size:15px;">x</span></div>
<div style="left:310px;top:251px;width:1604px;height:36px;background:#fff;box-sizing:border-box;border:1px solid #d0d0d0;"></div>
<div style="left:325px;top:256px;height:26px;line-height:26px;font-size:18.5px;color:#444;white-space:pre;transform-origin:0 50%;transform:scaleX(0.958);">41.4</div>
<svg style="left:1897px;top:262px;" width="12" height="12" viewBox="0 0 12 12"><path d="M2.5 4L6 7.8L9.5 4" fill="none" stroke="#555" stroke-width="2"/></svg>
</section>
<nav id="sheettabs" aria-label="シート見出し">
<div style="left:0px;top:976px;width:1920px;height:27px;background:#e6e6e6;"></div>
<div style="left:0px;top:1003px;width:1920px;height:1px;background:#c6c6c6;"></div>
<svg style="left:24px;top:982px;" width="12" height="14" viewBox="0 0 12 14"><path d="M8.5 2V12L3 7Z" fill="#1e7145"/></svg>
<svg style="left:52px;top:982px;" width="12" height="14" viewBox="0 0 12 14"><path d="M3.5 2V12L9 7Z" fill="#1e7145"/></svg>
<div style="left:78px;top:974.5px;height:24px;line-height:24px;font-size:17px;color:#1e7145;white-space:pre;letter-spacing:1px;">...</div>
<div style="left:100px;top:980px;width:1px;height:19px;background:#ababab;"></div>
<div style="left:0;top:978px;width:1920px;height:25px;overflow:hidden;"><div style="left:0;top:-978px;width:1920px;height:1080px;">
<div style="left:103px;top:978px;width:127px;height:22px;background:#4472c4;"></div>
<div style="left:113.0px;top:974px;height:25px;line-height:25px;font-size:18px;color:#fff;white-space:pre;transform-origin:0 50%;transform:scaleX(0.849);">主要指標グラフ</div>
<div style="left:232px;top:980px;width:1px;height:19px;background:#ababab;"></div>
<div style="left:235px;top:978px;width:115px;height:22px;background:#ffff00;"></div>
<div style="left:247.5px;top:974px;height:25px;line-height:25px;font-size:18px;color:#000;white-space:pre;transform-origin:0 50%;transform:scaleX(0.714);">サイコロジカル</div>
<div style="left:352px;top:980px;width:1px;height:19px;background:#ababab;"></div>
<div style="left:355px;top:978px;width:52px;height:22px;background:#ffff00;"></div>
<div style="left:366.5px;top:974px;height:25px;line-height:25px;font-size:18px;color:#000;white-space:pre;transform-origin:0 50%;transform:scaleX(0.966);">RSI</div>
<div style="left:409px;top:980px;width:1px;height:19px;background:#ababab;"></div>
<div style="left:412px;top:978px;width:105px;height:22px;background:#ffff00;"></div>
<div style="left:423.0px;top:974px;height:25px;line-height:25px;font-size:18px;color:#000;white-space:pre;transform-origin:0 50%;transform:scaleX(0.769);">トレンド指標</div>
<div style="left:519px;top:980px;width:1px;height:19px;background:#ababab;"></div>
<div style="left:522px;top:978px;width:70px;height:22px;background:#ffff00;"></div>
<div style="left:531.0px;top:974px;height:25px;line-height:25px;font-size:18px;color:#000;white-space:pre;transform-origin:0 50%;transform:scaleX(0.963);">騰落率</div>
<div style="left:594px;top:980px;width:1px;height:19px;background:#ababab;"></div>
<div style="left:597px;top:978px;width:94px;height:22px;background:#ed7d31;"></div>
<div style="left:608.0px;top:974px;height:25px;line-height:25px;font-size:18px;color:#000;white-space:pre;transform-origin:0 50%;transform:scaleX(0.973);">20日騰落</div>
<div style="left:693px;top:980px;width:1px;height:19px;background:#ababab;"></div>
<div style="left:696px;top:978px;width:107px;height:22px;background:#ed7d31;"></div>
<div style="left:706.0px;top:974px;height:25px;line-height:25px;font-size:18px;color:#000;white-space:pre;transform-origin:0 50%;transform:scaleX(0.870);">累計  データ</div>
<div style="left:805px;top:980px;width:1px;height:19px;background:#ababab;"></div>
<div style="left:819.0px;top:974px;height:25px;line-height:25px;font-size:18px;color:#444;white-space:pre;transform-origin:0 50%;transform:scaleX(0.819);">トレンド統計関連</div>
<div style="left:806px;top:976px;width:1px;height:24px;background:#ababab;"></div>
<div style="left:950px;top:975px;width:93px;height:23px;background:#fff;"></div>
<div style="left:952px;top:978px;width:89px;height:19px;background:linear-gradient(#fff 10%,#f98e8e);"></div>
<div style="left:949px;top:975px;width:1px;height:23px;background:#ababab;"></div>
<div style="left:1043px;top:975px;width:1px;height:23px;background:#ababab;"></div>
<div style="left:949px;top:997.5px;width:95px;height:2px;background:#217346;"></div>
<div style="left:963.0px;top:974px;height:25px;line-height:25px;font-size:18px;color:#217346;white-space:pre;transform-origin:0 50%;transform:scaleX(0.999);">日経225</div>
</div></div>
<div style="left:950px;top:975px;width:93px;height:3px;background:#fff;"></div>
<div style="left:949px;top:975px;width:1px;height:3px;background:#ababab;"></div>
<div style="left:1043px;top:975px;width:1px;height:3px;background:#ababab;"></div>
<div style="left:1046px;top:978px;width:34px;height:22px;background:#ff0000;overflow:hidden;"><div style="left:7px;top:-6px;font-size:18px;line-height:26px;color:#fff;white-space:nowrap;">マサ</div></div>
<div style="left:1087px;top:974.5px;height:24px;line-height:24px;font-size:17px;color:#1e7145;white-space:pre;letter-spacing:1px;">...</div>
<svg style="left:1112px;top:979px;" width="21" height="21" viewBox="0 0 21 21"><circle cx="10.5" cy="10.5" r="9" fill="none" stroke="#777" stroke-width="1.3"/><path d="M10.5 5.5V15.5M5.5 10.5H15.5" stroke="#777" stroke-width="1.5"/></svg>
<div style="left:1148px;top:984px;width:3px;height:3px;background:#b5b5b5;"></div>
<div style="left:1148px;top:989px;width:3px;height:3px;background:#b5b5b5;"></div>
<div style="left:1148px;top:994px;width:3px;height:3px;background:#b5b5b5;"></div>
<div style="left:1167px;top:980px;width:728px;height:19px;background:#d9d9d9;"></div>
<div style="left:1167px;top:980px;width:18px;height:19px;background:#fff;box-sizing:border-box;border:1px solid #ababab;"></div>
<svg style="left:1167px;top:980px;" width="18" height="19" viewBox="0 0 18 19"><path d="M11.5 5V14L6 9.5Z" fill="#606060"/></svg>
<div style="left:1185px;top:980px;width:658px;height:19px;background:#fff;box-sizing:border-box;border:1px solid #ababab;"></div>
<div style="left:1876px;top:980px;width:19px;height:19px;background:#fff;box-sizing:border-box;border:1px solid #ababab;"></div>
<svg style="left:1876px;top:980px;" width="19" height="19" viewBox="0 0 19 19"><path d="M7.5 5V14L13 9.5Z" fill="#606060"/></svg>
</nav>
<footer id="statusbar" aria-label="ステータス バー">
<div style="left:0px;top:1004px;width:1920px;height:26px;background:#f3f2f1;"></div>
<div style="left:9px;top:1007.5px;height:20px;line-height:20px;font-size:14.5px;color:#444;white-space:pre;transform-origin:0 50%;transform:scaleX(1.000);">準備完了</div>
<div style="left:1538px;top:1004px;width:50px;height:26px;background:#c8c6c4;"></div>
<svg style="left:1553px;top:1007px;" width="20" height="20" viewBox="0 0 20 20"><rect x="1.5" y="2.500" width="16" height="15" fill="none" stroke="#555" stroke-width="1.8"/><path d="M1.500 7.500H17.500M1.500 12.500H17.500M7 2.500V17.500M12.300 2.500V17.500" stroke="#555" stroke-width="1.7"/></svg>
<svg style="left:1603px;top:1007px;" width="20" height="20" viewBox="0 0 20 20"><rect x="1.500" y="2.500" width="16.500" height="15" fill="none" stroke="#555" stroke-width="1.7"/><rect x="5.500" y="5.800" width="8.500" height="8.600" fill="none" stroke="#555" stroke-width="1.300"/><path d="M7.500 8.600H12M7.500 11.400H12" stroke="#555" stroke-width="1.200"/></svg>
<svg style="left:1653px;top:1007px;" width="20" height="20" viewBox="0 0 20 20"><rect x="1.500" y="2" width="16.500" height="15" fill="none" stroke="#555" stroke-width="1.7"/><path d="M1.500 10H11.500V2M6.500 2V10" fill="none" stroke="#555" stroke-width="1.500"/></svg>
<div style="left:1695px;top:1016.5px;width:9px;height:1.3px;background:#555;"></div>
<div style="left:1711px;top:1017px;width:125px;height:1px;background:#9a9a9a;"></div>
<div style="left:1771px;top:1010px;width:5px;height:14px;background:#666;"></div>
<div style="left:1841px;top:1016.5px;width:11px;height:1.3px;background:#555;"></div>
<div style="left:1846px;top:1011.5px;width:1.3px;height:11px;background:#555;"></div>
<div style="left:1868px;top:1007px;height:21px;line-height:21px;font-size:15px;color:#444;white-space:pre;transform-origin:0 50%;transform:scaleX(1.094);">100%</div>
</footer>
<footer id="taskbar" aria-label="タスク バー">
<div style="left:0;top:1030px;width:1920px;height:50px;background:linear-gradient(90deg,#f0e5cd,#f2e8d0 55%,#f3ead6 80%,#f3e9dc);"></div>
<svg style="left:20px;top:1045px;" width="21" height="21" viewBox="0 0 21 21"><path d="M0 3L8.6 1.8V10H0ZM9.8 1.6L21 0V10H9.8ZM0 11.2H8.6V19.4L0 18.2ZM9.8 11.2H21V21L9.8 19.5Z" fill="#000"/></svg>
<div style="left:60px;top:1031px;width:429px;height:49px;background:#fff;box-sizing:border-box;border:1px solid #c9c5bb;"></div>
<svg style="left:74px;top:1043px;" width="24" height="24" viewBox="0 0 24 24"><circle cx="14.5" cy="9" r="6.3" fill="none" stroke="#222" stroke-width="1.7"/><path d="M10 13.8L2 22" stroke="#222" stroke-width="1.9"/></svg>
<div style="left:110px;top:1043px;height:24px;line-height:24px;font-size:17.5px;color:#333;white-space:pre;transform-origin:0 50%;transform:scaleX(0.870);">ここに入力して検索</div>
<svg style="left:508px;top:1043px;" width="24" height="24" viewBox="0 0 24 24"><circle cx="12" cy="12" r="8.3" fill="none" stroke="#000" stroke-width="3"/></svg>
<svg style="left:568px;top:1043px;" width="24" height="24" viewBox="0 0 24 24"><path d="M3 3.5H17M3 20.5H17" stroke="#111" stroke-width="1.4"/><rect x="3.5" y="7.5" width="13" height="9" fill="none" stroke="#111" stroke-width="1.4"/><path d="M21 3V8M21 14V21" stroke="#111" stroke-width="1.4"/><rect x="19.8" y="9.5" width="2.6" height="2.6" fill="#111"/></svg>
<svg style="left:629px;top:1042px;" width="30" height="26" viewBox="0 0 30 26"><path d="M1 3A1.5 1.5 0 0 1 2.5 1.5H10L12 4H1Z" fill="#e8a920"/><rect x="1" y="4" width="27" height="19" rx="1.2" fill="#fbd25d"/><path d="M1 9H28V22A1 1 0 0 1 27 23H2A1 1 0 0 1 1 22Z" fill="#f9c646"/><path d="M6.5 23V15.5H22.5V23H19V18.5H10V23Z" fill="#3a8ee0"/></svg>
<svg style="left:690px;top:1039px;" width="32" height="32" viewBox="0 0 32 32"><path d="M10.5 9V6A5.5 5.5 0 0 1 21.5 6V9" fill="none" stroke="#222" stroke-width="2"/><rect x="2" y="8.5" width="28" height="22" rx="1.5" fill="#2b2b2b"/><rect x="10.5" y="14" width="5" height="5" fill="#f25022"/><rect x="16.5" y="14" width="5" height="5" fill="#7fba00"/><rect x="10.5" y="20" width="5" height="5" fill="#00a4ef"/><rect x="16.5" y="20" width="5" height="5" fill="#ffb900"/></svg>
<svg style="left:752px;top:1040px;" width="32" height="30" viewBox="0 0 32 30"><path d="M1 12L16 1L31 12V28H1Z" fill="#1464b8"/><path d="M6 8H26V20H6Z" fill="#fff"/><path d="M9 8H23L16 14.5Z" fill="#cfd8e3"/><path d="M1 12L16 21L31 12V28H1Z" fill="#29a7ea"/><path d="M1 28L16 20L31 28Z" fill="#3cbcf5"/></svg>
<svg style="left:814px;top:1039px;" width="32" height="32" viewBox="0 0 32 32"><circle cx="16" cy="16" r="15" fill="#1b7bc9"/><path d="M2 20A15 15 0 0 1 30 10C31 14 29 18 24 18H14C14 14 18 12 21 13C18 8 8 8 5 16C4 18 3 19 2 20Z" fill="#45d18f"/><path d="M16 31A15 15 0 0 1 2 20C4 12 12 10 17 13C13 14 12 18 14 21C16 25 22 26 27 23C25 28 21 31 16 31Z" fill="#1665b5"/><circle cx="19.5" cy="17" r="4" fill="#f2e8d3"/><path d="M15 17C15 21 19 24 24 22C28 20 30 17 30 14C28 18 24 19 19.5 18Z" fill="#f2e8d3"/></svg>
<div style="left:862px;top:1030px;width:57px;height:47px;background:#f8f3e8;"></div>
<svg style="left:875px;top:1040px;" width="32" height="30" viewBox="0 0 32 30"><rect x="9" y="1" width="22" height="28" rx="1.5" fill="#21a366"/><rect x="20" y="1" width="11" height="7" fill="#33c481"/><rect x="9" y="8" width="11" height="7" fill="#107c41"/><rect x="20" y="8" width="11" height="7" fill="#21a366"/><rect x="9" y="15" width="11" height="7" fill="#185c37"/><rect x="20" y="15" width="11" height="7" fill="#107c41"/><rect x="9" y="22" width="22" height="7" fill="#185c37"/><rect x="1" y="7" width="16" height="16" rx="1.5" fill="#107c41"/><path d="M5.5 10.5L12.5 19.5M12.5 10.5L5.5 19.5" stroke="#fff" stroke-width="2"/></svg>
<div style="left:862px;top:1077px;width:58px;height:3px;background:#0078d7;"></div>
<div style="left:920px;top:1077px;width:3px;height:3px;background:#7fb6e6;"></div>
<div style="left:805px;top:1077px;width:51px;height:3px;background:#0078d7;"></div>
<svg style="left:938px;top:1040px;" width="32" height="30" viewBox="0 0 32 30"><circle cx="17" cy="15" r="14" fill="#ed6c47"/><path d="M17 1A14 14 0 0 1 31 15H17Z" fill="#ff8f6b"/><path d="M17 15H31A14 14 0 0 1 17 29Z" fill="#d35230"/><rect x="1" y="7" width="16" height="16" rx="1.5" fill="#c43e1c"/><path d="M6.5 19.5V10.5H10A2.8 2.8 0 0 1 10 16H6.5" fill="none" stroke="#fff" stroke-width="2"/></svg>
<div style="left:929px;top:1077px;width:42px;height:3px;background:#0078d7;"></div>
<div style="left:971px;top:1077px;width:9px;height:3px;background:#7fb6e6;"></div>
<svg style="left:1376px;top:1040px;" width="34" height="28" viewBox="0 0 34 28"><circle cx="11.500" cy="9" r="7.200" fill="#f9bd16"/><circle cx="15.500" cy="4.500" r="5.500" fill="#f2e8d3"/><path d="M9 24.500A5.200 5.200 0 0 1 8.500 14.200A7.200 7.200 0 0 1 21.500 12.400A6 6 0 0 1 22.500 24.500Z" fill="#d6eafa" stroke="#a4cdee" stroke-width="0.9"/></svg>
<div style="left:1415px;top:1044px;height:24px;line-height:24px;font-size:17px;color:#222;white-space:pre;transform-origin:0 50%;transform:scaleX(0.974);">24°C</div>
<div style="left:1463px;top:1044px;height:24px;line-height:24px;font-size:17px;color:#222;white-space:pre;transform-origin:0 50%;transform:scaleX(0.899);">くもり時々晴れ</div>
<svg style="left:1589px;top:1048px;" width="20" height="14" viewBox="0 0 20 14"><path d="M3 11L10 3.5L17 11" fill="none" stroke="#222" stroke-width="1.5"/></svg>
<svg style="left:1617px;top:1045px;" width="24" height="18" viewBox="0 0 24 18"><path d="M6 15A4.5 4.5 0 0 1 6.5 6.2A6 6 0 0 1 18 7.5A4 4 0 0 1 18.5 15Z" fill="#b9b9b9" stroke="#333" stroke-width="1.2"/></svg>
<svg style="left:1647px;top:1046px;" width="24" height="18" viewBox="0 0 24 18"><rect x="5" y="4.5" width="16" height="10" fill="none" stroke="#222" stroke-width="1.3"/><rect x="7" y="6.5" width="12" height="6" fill="#222"/><rect x="21.5" y="7.5" width="1.6" height="4" fill="#222"/><path d="M1 3V6.5M4 3V6.5M0.3 6.5H4.7V8.5A2 2 0 0 1 0.3 8.5ZM2.5 10.5V14" stroke="#222" stroke-width="1" fill="#222"/></svg>
<svg style="left:1680px;top:1046px;" width="22" height="18" viewBox="0 0 22 18"><path d="M2.5 16A13.5 13.5 0 0 1 16 2.5" fill="none" stroke="#888" stroke-width="1.3"/><path d="M6 16A10 10 0 0 1 16 6" fill="none" stroke="#333" stroke-width="1.4"/><path d="M9.5 16A6.5 6.5 0 0 1 16 9.5" fill="none" stroke="#333" stroke-width="1.4"/><circle cx="14.5" cy="15" r="1.7" fill="#222"/></svg>
<svg style="left:1708px;top:1045px;" width="24" height="20" viewBox="0 0 24 20"><path d="M2 7.5H5.5L10 3.5V16.5L5.5 12.5H2Z" fill="none" stroke="#222" stroke-width="1.3"/><path d="M12.5 7.5A3.5 3.5 0 0 1 12.5 12.5M15 5A7 7 0 0 1 15 15" fill="none" stroke="#222" stroke-width="1.2"/><path d="M17.8 2.5A10.5 10.5 0 0 1 17.8 17.5" fill="none" stroke="#999" stroke-width="1"/></svg>
<div style="left:1741px;top:1037px;height:36px;line-height:36px;font-size:26px;color:#111;white-space:pre;transform-origin:0 50%;transform:scaleX(0.865);">A</div>
<div style="left:1790px;top:1033px;height:22px;line-height:22px;font-size:15.5px;color:#222;white-space:pre;transform-origin:0 50%;transform:scaleX(0.902);">22:59</div>
<div style="left:1770px;top:1056px;height:22px;line-height:22px;font-size:15.5px;color:#222;white-space:pre;transform-origin:0 50%;transform:scaleX(0.967);">2021/09/24</div>
<svg style="left:1868px;top:1043px;" width="34" height="30" viewBox="0 0 34 30"><path d="M2 2H22V18H10L5 23V18H2Z" fill="#111"/><path d="M6 6.5H18M6 10H18M6 13.5H14" stroke="#f2e8d3" stroke-width="1.3"/><circle cx="20.5" cy="21" r="9" fill="#ddd" stroke="#555" stroke-width="1"/></svg>
<div style="left:1885.10734375px;top:1054.5px;height:20px;line-height:20px;font-size:14px;color:#111;white-space:pre;font-weight:bold;">1</div>
<div style="left:1914px;top:1030px;width:1px;height:50px;background:#b9b2a4;"></div>
</footer>
</div></body></html>
